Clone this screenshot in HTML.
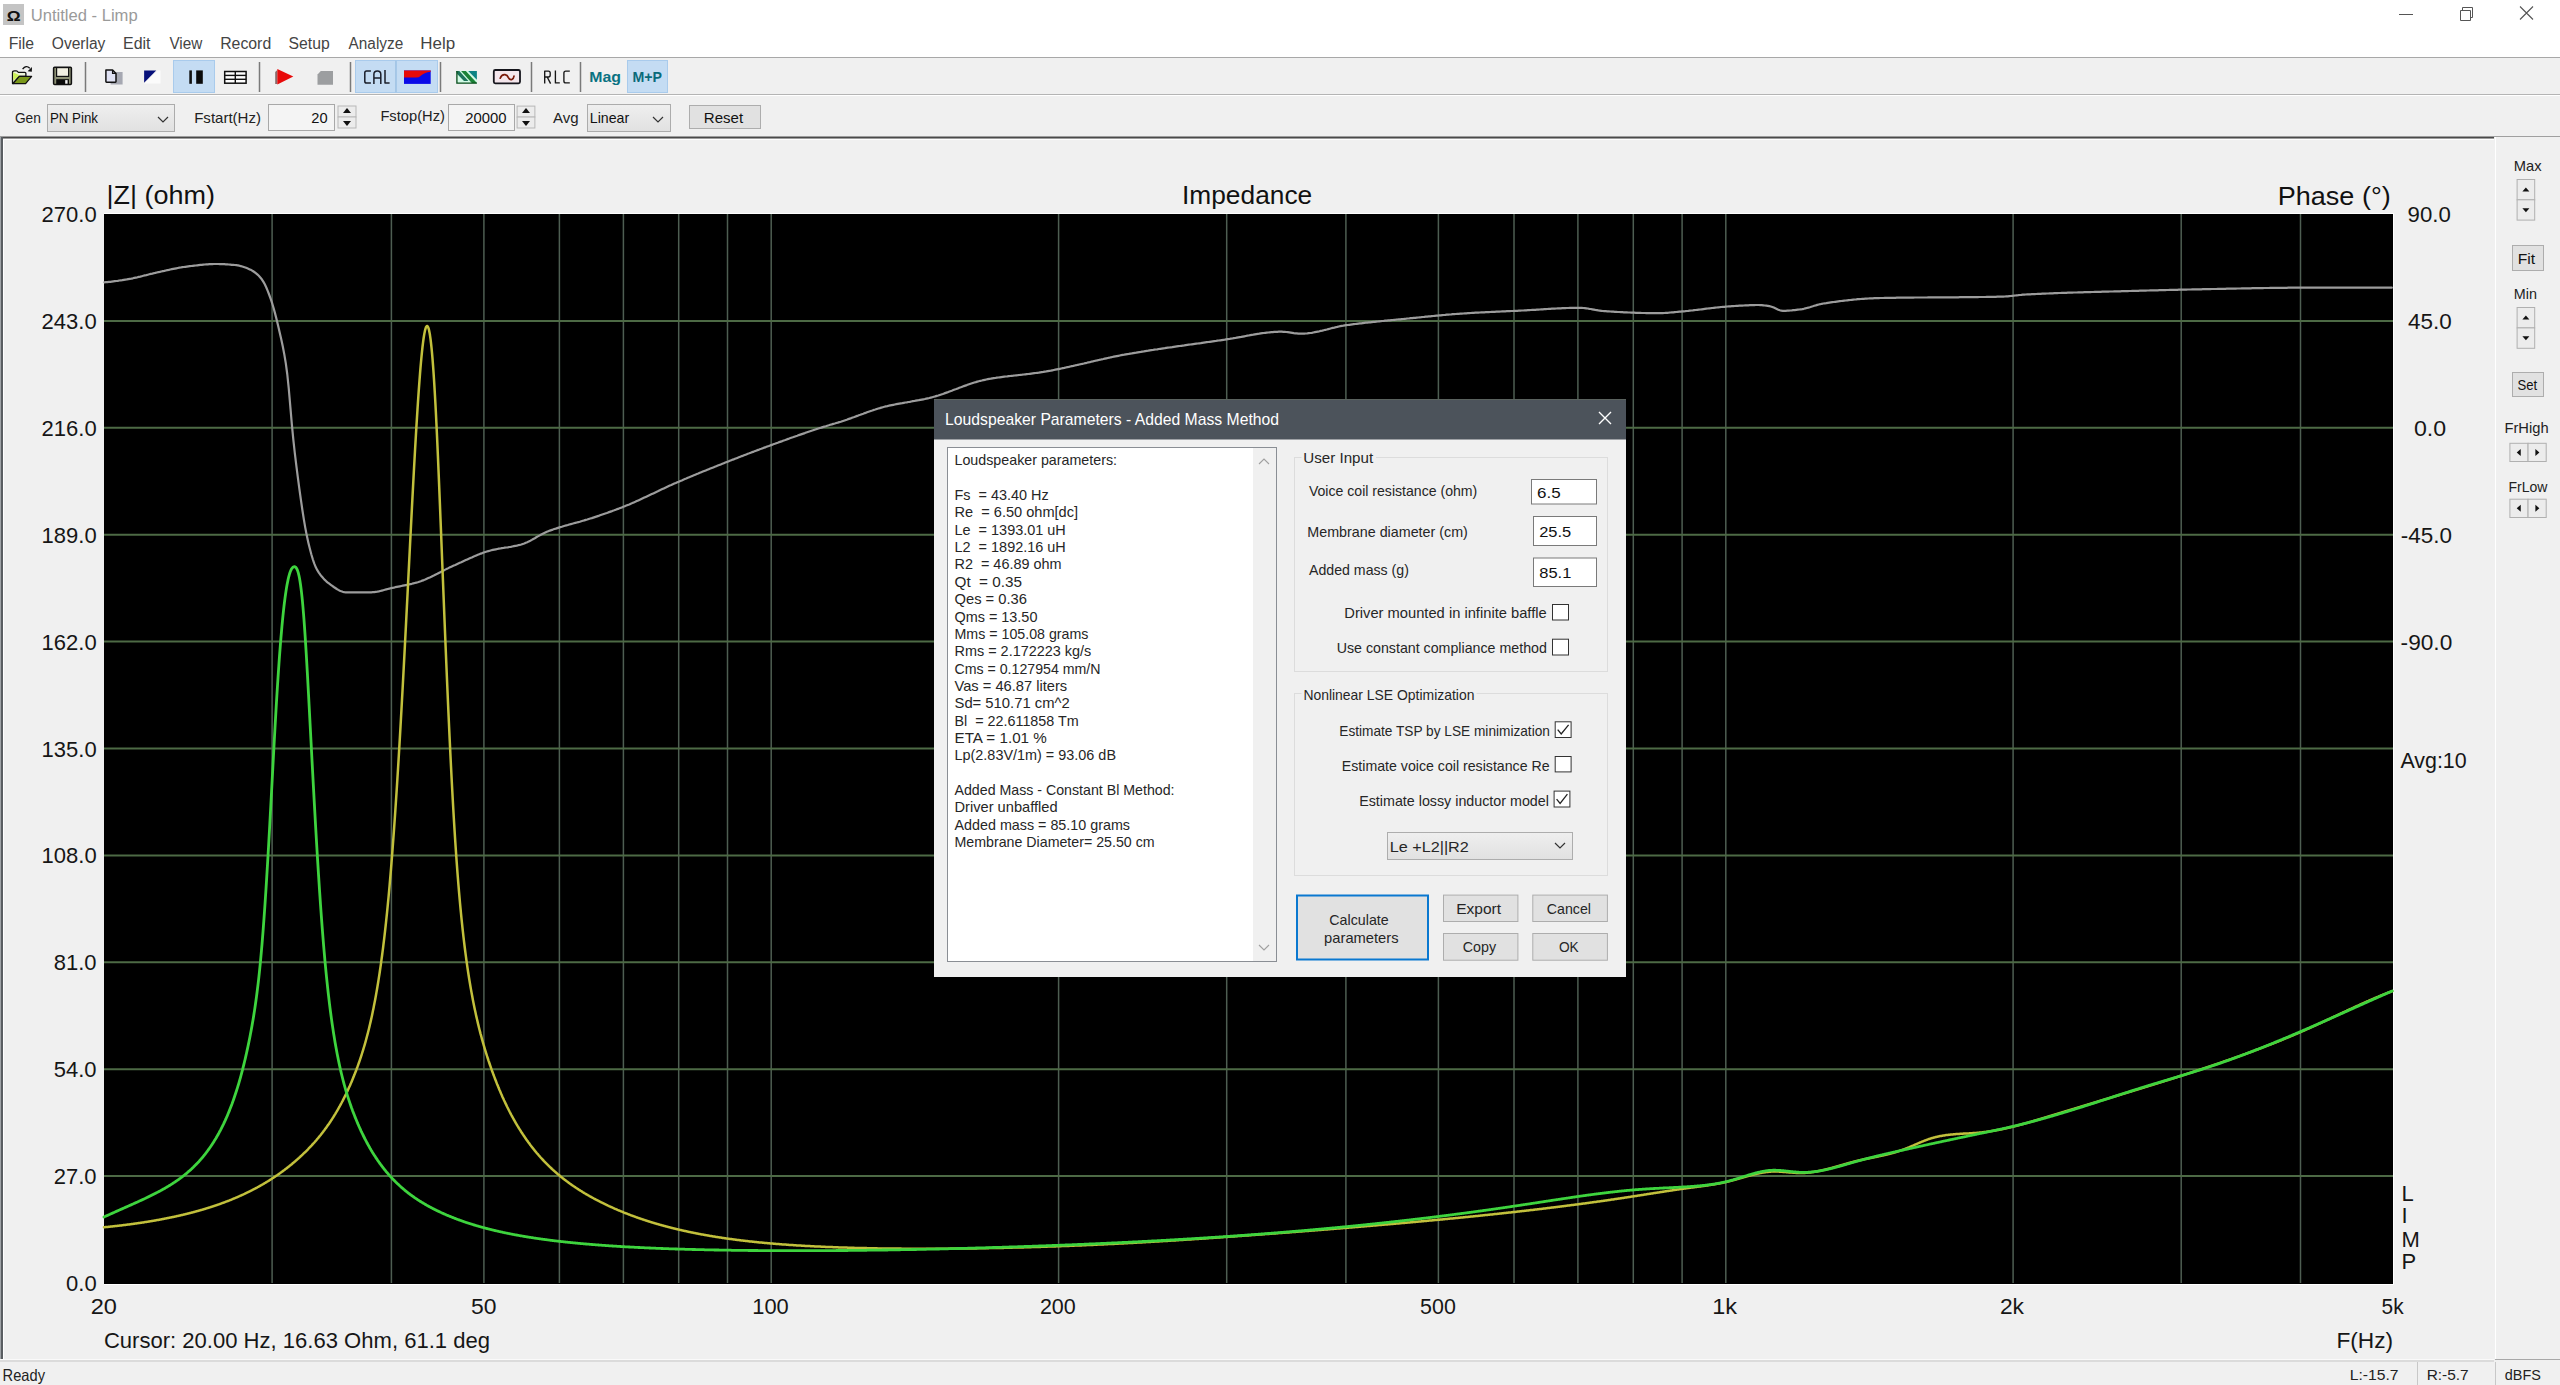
<!DOCTYPE html>
<html><head><meta charset="utf-8"><title>Untitled - Limp</title>
<style>
html,body{margin:0;padding:0;width:2560px;height:1385px;overflow:hidden;background:#f0f0f0;}
svg{display:block;font-family:"Liberation Sans", sans-serif;}
</style></head>
<body>
<svg width="2560" height="1385" viewBox="0 0 2560 1385">
<rect x="0" y="0" width="2560" height="1385" fill="#f0f0f0" />
<rect x="0" y="0" width="2560" height="57" fill="#ffffff" />
<line x1="0" y1="57.5" x2="2560" y2="57.5" stroke="#a8a8a8" stroke-width="1" />
<rect x="3" y="4" width="21" height="21" fill="#c4c4c4" />
<text x="6.8" y="20.5" font-size="15" fill="#111" textLength="13.9" lengthAdjust="spacingAndGlyphs" font-weight="bold" >Ω</text>
<text x="30.7" y="21.0" font-size="16" fill="#9a9a9a" textLength="107.0" lengthAdjust="spacingAndGlyphs" >Untitled - Limp</text>
<line x1="2399" y1="14.5" x2="2413" y2="14.5" stroke="#555" stroke-width="1" />
<path d="M2460.5,10.5 h10 v10 h-10 z M2462.5,10.5 v-3 h10 v10 h-2" fill="none" stroke="#555" stroke-width="1"/>
<path d="M2520,6.5 L2533,19.5 M2533,6.5 L2520,19.5" stroke="#555" stroke-width="1.1"/>
<text x="8.7" y="49.0" font-size="16" fill="#444444" textLength="25.4" lengthAdjust="spacingAndGlyphs" >File</text>
<text x="51.8" y="49.0" font-size="16" fill="#444444" textLength="53.6" lengthAdjust="spacingAndGlyphs" >Overlay</text>
<text x="123.1" y="49.0" font-size="16" fill="#444444" textLength="27.4" lengthAdjust="spacingAndGlyphs" >Edit</text>
<text x="169.4" y="49.0" font-size="16" fill="#444444" textLength="32.8" lengthAdjust="spacingAndGlyphs" >View</text>
<text x="220.2" y="49.0" font-size="16" fill="#444444" textLength="51.0" lengthAdjust="spacingAndGlyphs" >Record</text>
<text x="288.6" y="49.0" font-size="16" fill="#444444" textLength="41.1" lengthAdjust="spacingAndGlyphs" >Setup</text>
<text x="348.6" y="49.0" font-size="16" fill="#444444" textLength="54.6" lengthAdjust="spacingAndGlyphs" >Analyze</text>
<text x="420.3" y="49.0" font-size="16" fill="#444444" textLength="34.9" lengthAdjust="spacingAndGlyphs" >Help</text>
<line x1="0" y1="94.5" x2="2560" y2="94.5" stroke="#b4b4b4" stroke-width="1" />
<line x1="0" y1="95.5" x2="2560" y2="95.5" stroke="#ffffff" stroke-width="1" />
<rect x="173.5" y="60.5" width="41.0" height="32.0" fill="#c4dcf3" stroke="#a9cbec" stroke-width="1" />
<rect x="355.5" y="60.5" width="40.0" height="32.0" fill="#c4dcf3" stroke="#a9cbec" stroke-width="1" />
<rect x="396.5" y="60.5" width="41.0" height="32.0" fill="#c4dcf3" stroke="#a9cbec" stroke-width="1" />
<rect x="627.5" y="60.5" width="40.0" height="32.0" fill="#c4dcf3" stroke="#a9cbec" stroke-width="1" />
<line x1="85.5" y1="62" x2="85.5" y2="92" stroke="#7a7a7a" stroke-width="1.5" />
<line x1="259.5" y1="62" x2="259.5" y2="92" stroke="#7a7a7a" stroke-width="1.5" />
<line x1="350.5" y1="62" x2="350.5" y2="92" stroke="#7a7a7a" stroke-width="1.5" />
<line x1="440.5" y1="62" x2="440.5" y2="92" stroke="#7a7a7a" stroke-width="1.5" />
<line x1="531.5" y1="62" x2="531.5" y2="92" stroke="#7a7a7a" stroke-width="1.5" />
<line x1="580.5" y1="62" x2="580.5" y2="92" stroke="#7a7a7a" stroke-width="1.5" />
<path d="M12.5,83.5 V72.5 Q12.5,70.8 14.5,70.8 H16.3 Q17.4,70.8 18.2,72.3 H24.8 Q25.9,72.3 25.9,73.6 V76.3 H19.3 L13,83.5 Z" fill="#eef4dc" stroke="#111" stroke-width="1.3" stroke-linejoin="round"/>
<path d="M13.2,72.2 L20,75.6 L13.2,80.6 Z" fill="#ccf05a"/>
<path d="M13,83.6 L19.3,76.3 H31.6 L25.6,83.6 Z" fill="#7a981a" stroke="#111" stroke-width="1.3" stroke-linejoin="round"/>
<path d="M22.6,69.2 Q26,64.6 29.8,68.2" fill="none" stroke="#111" stroke-width="1.4"/><path d="M32,67 L31.8,71.8 L27.6,71.2 Z" fill="#111"/>
<rect x="53.6" y="67.2" width="17.8" height="17.4" rx="1" fill="#8c9074" stroke="#111" stroke-width="1.5"/>
<rect x="56.6" y="67.6" width="11.999999999999993" height="8.800000000000011" fill="#f2f0e2" stroke="#111" stroke-width="1.2" />
<rect x="56.2" y="79.2" width="12.799999999999997" height="5.0" fill="#0a0a0a" />
<rect x="65.2" y="80.1" width="2.3999999999999915" height="3.6000000000000085" fill="#f0f0f0" />
<path d="M116,72 H122.6 V84.6 H110.6 V82.2 H116 Z" fill="#a6a8b2"/>
<path d="M105.9,69.9 H112.6 L116,73.4 V81.6 Q116,82.2 115.4,82.2 H106.5 Q105.9,82.2 105.9,81.6 Z" fill="#e0e2f4" stroke="#111" stroke-width="1.5" stroke-linejoin="round"/>
<path d="M112.6,69.9 V73.4 H116" fill="none" stroke="#111" stroke-width="1.3"/>
<path d="M144.1,83.5 L157.6,70.4 L160.5,70.4 L160.5,83.5 Z" fill="#fbfbfb"/><path d="M144.1,70.4 L156.2,70.4 L144.1,82.8 Z" fill="#07107a"/>
<rect x="189.3" y="70.4" width="2.5999999999999943" height="13.399999999999991" fill="#111" />
<rect x="196.2" y="70.4" width="6.600000000000023" height="13.399999999999991" fill="#0a0a0a" />
<rect x="224.7" y="71.5" width="21.400000000000006" height="11.700000000000003" fill="#fff" stroke="#111" stroke-width="1.5" />
<line x1="224.7" y1="75.4" x2="246.1" y2="75.4" stroke="#111" stroke-width="1.4" />
<line x1="224.7" y1="79.3" x2="246.1" y2="79.3" stroke="#111" stroke-width="1.4" />
<line x1="235.3" y1="71.5" x2="235.3" y2="83.2" stroke="#111" stroke-width="1.4" />
<path d="M275.2,72 L277.3,70 L277.3,84 L275.2,84 Z" fill="#8a6a6a"/><path d="M277.3,69 L293.3,76.6 L277.3,84.5 Z" fill="#e80a0a"/>
<path d="M320.8,71 L333,71 L333,84.8 L317.5,84.8 L317.5,74.6 Z" fill="#9c9ea0"/>
<g fill="none" stroke="#1a1e2a" stroke-width="1.5" stroke-linejoin="round">
<path d="M370.9,70.9 H366.6 Q364.8,70.9 364.8,72.8 V81.2 Q364.8,83.1 366.6,83.1 H370.9"/>
<path d="M373.9,83.9 V74.2 Q373.9,70.9 377.35,70.9 Q380.8,70.9 380.8,74.2 V83.9 M373.9,77.9 H380.8"/>
<path d="M385,70.1 V83.1 H389.6"/>
</g>
<line x1="395.8" y1="60.5" x2="395.8" y2="92.5" stroke="#a4c6e6" stroke-width="1.5" />
<rect x="404" y="70.5" width="26.69999999999999" height="13.400000000000006" fill="#0a0ae8" />
<path d="M404,70.5 L430.7,70.5 L430.7,71.8 Q424,72.6 420.5,76 Q419,77.6 416.4,77.6 L404,77.6 Z" fill="#e80a0a"/>
<path d="M456.2,70.8 L477,70.8 L477,83.7 L456.2,83.7 Z" fill="#d2fae6"/>
<path d="M468.2,70.9 L476.9,70.9 L476.9,79.8 Z" fill="#0c8484"/>
<path d="M461.1,70.9 L465.8,70.9 L476.9,83 L471.8,83 Z" fill="#1a8236"/>
<path d="M456.3,70.9 L459.3,70.9 L468.4,80.9 L464,80.9 L457.2,74 Z" fill="#1c745a"/>
<path d="M456.9,70.9 V83.1 H476.9" fill="none" stroke="#0a4a1a" stroke-width="1.3"/>
<rect x="493.8" y="70" width="26.2" height="13.3" rx="1.5" fill="#f4e6ec" stroke="#15151c" stroke-width="1.8"/>
<path d="M500.2,78.2 Q501.8,74.2 505,74.6 Q507.4,75 508.4,77.6 Q509.6,80.2 512,79.4 Q513.6,78.8 514,76.2" fill="none" stroke="#7a1a0a" stroke-width="1.7" stroke-linecap="round"/>
<g fill="none" stroke="#161616" stroke-width="1.35" stroke-linejoin="round">
<path d="M544.7,83.6 V71.1 H548.4 Q550.2,71.1 550.2,73 V75.1 Q550.2,77 548.4,77 H544.7 M547.2,77 L550.6,83.6"/>
<path d="M555.4,70.4 V82.9 H559.8"/>
<path d="M569.8,71.1 H565.8 Q563.9,71.1 563.9,73 V81 Q563.9,82.9 565.8,82.9 H569.8"/>
</g>
<text x="589.3" y="82.0" font-size="14" fill="#0a7282" textLength="31.7" lengthAdjust="spacingAndGlyphs" font-weight="bold" >Mag</text>
<text x="632.4" y="82.0" font-size="14" fill="#0a6a7a" textLength="29.6" lengthAdjust="spacingAndGlyphs" font-weight="bold" >M+P</text>
<text x="14.9" y="122.5" font-size="15" fill="#222" textLength="26.0" lengthAdjust="spacingAndGlyphs" >Gen</text>
<defs><linearGradient id="cg" x1="0" y1="0" x2="0" y2="1"><stop offset="0" stop-color="#efefef"/><stop offset="1" stop-color="#e1e1e1"/></linearGradient></defs>
<rect x="47.5" y="104.5" width="127.0" height="27.0" fill="url(#cg)" stroke="#acacac" stroke-width="1" />
<text x="49.9" y="123.0" font-size="15" fill="#111" textLength="48.1" lengthAdjust="spacingAndGlyphs" >PN Pink</text>
<path d="M158,117 l5,5 l5,-5" fill="none" stroke="#333" stroke-width="1.2"/>
<text x="194.2" y="122.5" font-size="15" fill="#222" textLength="66.8" lengthAdjust="spacingAndGlyphs" >Fstart(Hz)</text>
<rect x="268.5" y="104.5" width="66.0" height="26.0" fill="#f4f4f4" stroke="#a8a8a8" stroke-width="1" />
<text x="311.3" y="123.0" font-size="15" fill="#111" textLength="16.3" lengthAdjust="spacingAndGlyphs" >20</text>
<rect x="338.0" y="106.0" width="18.0" height="11.0" fill="#ececec" stroke="#b8b8b8" stroke-width="1" />
<rect x="338.0" y="117.0" width="18.0" height="11.0" fill="#ececec" stroke="#b8b8b8" stroke-width="1" />
<path d="M343.0,113.0 L351.0,113.0 L347.0,108.0 Z" fill="#111"/>
<path d="M343.0,121.0 L351.0,121.0 L347.0,126.0 Z" fill="#111"/>
<text x="380.4" y="121.0" font-size="15" fill="#222" textLength="64.5" lengthAdjust="spacingAndGlyphs" >Fstop(Hz)</text>
<rect x="448.5" y="104.5" width="66.0" height="26.0" fill="#f4f4f4" stroke="#a8a8a8" stroke-width="1" />
<text x="465.3" y="123.0" font-size="15" fill="#111" textLength="41.3" lengthAdjust="spacingAndGlyphs" >20000</text>
<rect x="517.1" y="106.1" width="17.799999999999955" height="10.950000000000003" fill="#ececec" stroke="#b8b8b8" stroke-width="1" />
<rect x="517.1" y="117.05" width="17.799999999999955" height="10.950000000000003" fill="#ececec" stroke="#b8b8b8" stroke-width="1" />
<path d="M522.0,113.05 L530.0,113.05 L526.0,108.05 Z" fill="#111"/>
<path d="M522.0,121.05 L530.0,121.05 L526.0,126.05 Z" fill="#111"/>
<text x="553.0" y="122.5" font-size="15" fill="#222" textLength="25.6" lengthAdjust="spacingAndGlyphs" >Avg</text>
<rect x="587.5" y="104.5" width="83.0" height="27.0" fill="url(#cg)" stroke="#acacac" stroke-width="1" />
<text x="589.8" y="123.0" font-size="15" fill="#111" textLength="39.4" lengthAdjust="spacingAndGlyphs" >Linear</text>
<path d="M653,117 l5,5 l5,-5" fill="none" stroke="#333" stroke-width="1.2"/>
<rect x="689.5" y="105.5" width="71.0" height="23.0" fill="#e1e1e1" stroke="#adadad" stroke-width="1" />
<text x="703.8" y="123.0" font-size="15" fill="#111" textLength="39.3" lengthAdjust="spacingAndGlyphs" >Reset</text>
<line x1="0" y1="137.5" x2="2494" y2="137.5" stroke="#4a4a4a" stroke-width="2" />
<line x1="2494" y1="136.5" x2="2560" y2="136.5" stroke="#a0a0a0" stroke-width="1" />
<line x1="4" y1="139.5" x2="2494" y2="139.5" stroke="#ffffff" stroke-width="1" />
<line x1="0.5" y1="137" x2="0.5" y2="1359" stroke="#a0a4a8" stroke-width="1" />
<line x1="2" y1="137" x2="2" y2="1359" stroke="#5a5e62" stroke-width="2" />
<line x1="3.5" y1="139" x2="3.5" y2="1359" stroke="#ffffff" stroke-width="1" />
<line x1="2495.5" y1="137" x2="2495.5" y2="1360" stroke="#ffffff" stroke-width="1" />
<rect x="104" y="213" width="2290" height="1072" fill="#ffffff" />
<rect x="104" y="214" width="2289" height="1070" fill="#000000" />
<line x1="272.1" y1="214" x2="272.1" y2="1283" stroke="#4e5e52" stroke-width="1.5" />
<line x1="391.4" y1="214" x2="391.4" y2="1283" stroke="#4e5e52" stroke-width="1.5" />
<line x1="483.9" y1="214" x2="483.9" y2="1283" stroke="#4e5e52" stroke-width="1.5" />
<line x1="559.4" y1="214" x2="559.4" y2="1283" stroke="#4e5e52" stroke-width="1.5" />
<line x1="623.4" y1="214" x2="623.4" y2="1283" stroke="#4e5e52" stroke-width="1.5" />
<line x1="678.7" y1="214" x2="678.7" y2="1283" stroke="#4e5e52" stroke-width="1.5" />
<line x1="727.5" y1="214" x2="727.5" y2="1283" stroke="#4e5e52" stroke-width="1.5" />
<line x1="771.2" y1="214" x2="771.2" y2="1283" stroke="#4e5e52" stroke-width="1.5" />
<line x1="1058.6" y1="214" x2="1058.6" y2="1283" stroke="#4e5e52" stroke-width="1.5" />
<line x1="1226.7" y1="214" x2="1226.7" y2="1283" stroke="#4e5e52" stroke-width="1.5" />
<line x1="1345.9" y1="214" x2="1345.9" y2="1283" stroke="#4e5e52" stroke-width="1.5" />
<line x1="1438.4" y1="214" x2="1438.4" y2="1283" stroke="#4e5e52" stroke-width="1.5" />
<line x1="1514.0" y1="214" x2="1514.0" y2="1283" stroke="#4e5e52" stroke-width="1.5" />
<line x1="1577.9" y1="214" x2="1577.9" y2="1283" stroke="#4e5e52" stroke-width="1.5" />
<line x1="1633.3" y1="214" x2="1633.3" y2="1283" stroke="#4e5e52" stroke-width="1.5" />
<line x1="1682.1" y1="214" x2="1682.1" y2="1283" stroke="#4e5e52" stroke-width="1.5" />
<line x1="1725.8" y1="214" x2="1725.8" y2="1283" stroke="#4e5e52" stroke-width="1.5" />
<line x1="2013.1" y1="214" x2="2013.1" y2="1283" stroke="#4e5e52" stroke-width="1.5" />
<line x1="2181.2" y1="214" x2="2181.2" y2="1283" stroke="#4e5e52" stroke-width="1.5" />
<line x1="2300.5" y1="214" x2="2300.5" y2="1283" stroke="#4e5e52" stroke-width="1.5" />
<line x1="104" y1="320.9" x2="2393" y2="320.9" stroke="#4d6a45" stroke-width="2" />
<line x1="104" y1="427.8" x2="2393" y2="427.8" stroke="#4d6a45" stroke-width="2" />
<line x1="104" y1="534.7" x2="2393" y2="534.7" stroke="#4d6a45" stroke-width="2" />
<line x1="104" y1="641.6" x2="2393" y2="641.6" stroke="#4d6a45" stroke-width="2" />
<line x1="104" y1="748.5" x2="2393" y2="748.5" stroke="#4d6a45" stroke-width="2" />
<line x1="104" y1="855.4" x2="2393" y2="855.4" stroke="#4d6a45" stroke-width="2" />
<line x1="104" y1="962.3" x2="2393" y2="962.3" stroke="#4d6a45" stroke-width="2" />
<line x1="104" y1="1069.2" x2="2393" y2="1069.2" stroke="#4d6a45" stroke-width="2" />
<line x1="104" y1="1176.1" x2="2393" y2="1176.1" stroke="#4d6a45" stroke-width="2" />
<g fill="none" stroke-linejoin="round" stroke-linecap="round">
<path d="M104.3,282.3 L105.8,282.2 L107.3,282.1 L108.8,281.9 L110.3,281.8 L111.8,281.6 L113.3,281.4 L114.8,281.2 L116.3,281.0 L117.8,280.8 L119.3,280.5 L120.8,280.3 L122.3,280.1 L123.8,279.8 L125.3,279.6 L126.8,279.4 L128.3,279.1 L129.8,278.8 L131.3,278.6 L132.8,278.3 L134.3,277.9 L135.8,277.6 L137.3,277.3 L138.8,276.9 L140.3,276.6 L141.8,276.2 L143.3,275.8 L144.8,275.4 L146.3,275.1 L147.8,274.7 L149.3,274.3 L150.8,273.9 L152.3,273.6 L153.8,273.2 L155.3,272.9 L156.8,272.5 L158.3,272.2 L159.8,271.9 L161.3,271.5 L162.8,271.2 L164.3,270.9 L165.8,270.5 L167.3,270.2 L168.8,269.9 L170.3,269.5 L171.8,269.2 L173.3,268.9 L174.8,268.6 L176.3,268.3 L177.8,268.0 L179.3,267.7 L180.8,267.5 L182.3,267.2 L183.8,267.0 L185.3,266.8 L186.8,266.6 L188.3,266.4 L189.8,266.2 L191.3,266.0 L192.8,265.8 L194.3,265.6 L195.8,265.5 L197.3,265.3 L198.8,265.1 L200.3,264.9 L201.8,264.8 L203.3,264.6 L204.8,264.5 L206.3,264.4 L207.8,264.3 L209.3,264.2 L210.8,264.1 L212.3,264.1 L213.8,264.0 L215.3,264.0 L216.8,264.0 L218.3,264.0 L219.8,264.1 L221.3,264.1 L222.8,264.2 L224.3,264.2 L225.8,264.3 L227.3,264.4 L228.8,264.5 L230.3,264.6 L231.8,264.8 L233.3,264.9 L234.8,265.0 L236.3,265.2 L237.8,265.4 L239.3,265.7 L240.8,266.1 L242.3,266.5 L243.8,267.0 L245.3,267.5 L246.8,268.1 L248.3,268.7 L249.8,269.4 L251.3,270.1 L252.8,271.0 L254.3,272.0 L255.8,273.1 L257.3,274.4 L258.8,275.8 L260.3,277.5 L261.8,279.3 L263.3,281.6 L264.8,284.3 L266.3,287.5 L267.8,291.1 L269.3,295.0 L270.8,299.1 L272.3,303.7 L273.8,308.8 L275.3,314.4 L276.8,320.3 L278.3,326.6 L279.8,333.0 L281.3,339.6 L282.8,346.6 L284.3,354.4 L285.8,363.4 L287.3,374.5 L288.8,389.0 L290.3,406.4 L291.8,423.9 L293.3,439.4 L294.8,453.0 L296.3,465.4 L297.8,477.1 L299.3,488.3 L300.8,499.1 L302.3,509.5 L303.8,519.2 L305.3,527.9 L306.8,535.6 L308.3,542.4 L309.8,548.6 L311.3,554.3 L312.8,559.3 L314.3,563.7 L315.8,567.3 L317.3,570.2 L318.8,572.6 L320.3,574.7 L321.8,576.6 L323.3,578.3 L324.8,579.9 L326.3,581.3 L327.8,582.6 L329.3,583.7 L330.8,584.8 L332.3,585.9 L333.8,587.0 L335.3,588.0 L336.8,589.0 L338.3,589.9 L339.8,590.7 L341.3,591.3 L342.8,591.8 L344.3,592.1 L345.8,592.3 L347.3,592.3 L348.8,592.3 L350.3,592.3 L351.8,592.3 L353.3,592.3 L354.8,592.3 L356.3,592.3 L357.8,592.3 L359.3,592.3 L360.8,592.3 L362.3,592.3 L363.8,592.3 L365.3,592.3 L366.8,592.3 L368.3,592.3 L369.8,592.3 L371.3,592.3 L372.8,592.2 L374.3,592.1 L375.8,591.9 L377.3,591.7 L378.8,591.4 L380.3,591.0 L381.8,590.6 L383.3,590.2 L384.8,589.8 L386.3,589.4 L387.8,589.0 L389.3,588.6 L390.8,588.2 L392.3,587.9 L393.8,587.6 L395.3,587.2 L396.8,586.9 L398.3,586.6 L399.8,586.3 L401.3,586.0 L402.8,585.7 L404.3,585.4 L405.8,585.1 L407.3,584.8 L408.8,584.5 L410.3,584.1 L411.8,583.8 L413.3,583.4 L414.8,583.0 L416.3,582.6 L417.8,582.2 L419.3,581.7 L420.8,581.2 L422.3,580.6 L423.8,580.1 L425.3,579.5 L426.8,578.8 L428.3,578.1 L429.8,577.5 L431.3,576.8 L432.8,576.0 L434.3,575.3 L435.8,574.5 L437.3,573.8 L438.8,573.0 L440.3,572.2 L441.8,571.4 L443.3,570.7 L444.8,569.9 L446.3,569.1 L447.8,568.4 L449.3,567.6 L450.8,566.9 L452.3,566.2 L453.8,565.5 L455.3,564.9 L456.8,564.2 L458.3,563.5 L459.8,562.8 L461.3,562.2 L462.8,561.5 L464.3,560.8 L465.8,560.1 L467.3,559.4 L468.8,558.7 L470.3,558.0 L471.8,557.4 L473.3,556.7 L474.8,556.1 L476.3,555.4 L477.8,554.8 L479.3,554.2 L480.8,553.6 L482.3,553.1 L483.8,552.5 L485.3,552.0 L486.8,551.5 L488.3,551.1 L489.8,550.7 L491.3,550.3 L492.8,549.9 L494.3,549.6 L495.8,549.3 L497.3,549.0 L498.8,548.7 L500.3,548.5 L501.8,548.2 L503.3,548.0 L504.8,547.7 L506.3,547.5 L507.8,547.3 L509.3,547.0 L510.8,546.8 L512.3,546.5 L513.8,546.2 L515.3,545.9 L516.8,545.6 L518.3,545.2 L519.8,544.9 L521.3,544.5 L522.8,544.0 L524.3,543.5 L525.8,542.8 L527.3,542.2 L528.8,541.4 L530.3,540.7 L531.8,539.9 L533.3,539.0 L534.8,538.2 L536.3,537.3 L537.8,536.4 L539.3,535.6 L540.8,534.8 L542.3,534.0 L543.8,533.2 L545.3,532.5 L546.8,531.8 L548.3,531.2 L549.8,530.6 L551.3,530.1 L552.8,529.6 L554.3,529.0 L555.8,528.6 L557.3,528.1 L558.8,527.6 L560.3,527.1 L561.8,526.7 L563.3,526.2 L564.8,525.8 L566.3,525.4 L567.8,525.0 L569.3,524.5 L570.8,524.1 L572.3,523.7 L573.8,523.3 L575.3,522.9 L576.8,522.5 L578.3,522.1 L579.8,521.7 L581.3,521.2 L582.8,520.8 L584.3,520.4 L585.8,519.9 L587.3,519.5 L588.8,519.0 L590.3,518.5 L591.8,518.1 L593.3,517.6 L594.8,517.1 L596.3,516.6 L597.8,516.1 L599.3,515.6 L600.8,515.0 L602.3,514.5 L603.8,514.0 L605.3,513.5 L606.8,513.0 L608.3,512.4 L609.8,511.9 L611.3,511.4 L612.8,510.8 L614.3,510.3 L615.8,509.7 L617.3,509.1 L618.8,508.6 L620.3,508.0 L621.8,507.4 L623.3,506.8 L624.8,506.2 L626.3,505.6 L627.8,505.0 L629.3,504.4 L630.8,503.7 L632.3,503.1 L633.8,502.4 L635.3,501.8 L636.8,501.1 L638.3,500.4 L639.8,499.7 L641.3,499.0 L642.8,498.3 L644.3,497.6 L645.8,496.9 L647.3,496.2 L648.8,495.5 L650.3,494.8 L651.8,494.1 L653.3,493.4 L654.8,492.7 L656.3,492.0 L657.8,491.3 L659.3,490.5 L660.8,489.8 L662.3,489.1 L663.8,488.4 L665.3,487.7 L666.8,487.0 L668.3,486.3 L669.8,485.6 L671.3,485.0 L672.8,484.3 L674.3,483.6 L675.8,483.0 L677.3,482.3 L678.8,481.7 L680.3,481.0 L681.8,480.4 L683.3,479.7 L684.8,479.1 L686.3,478.5 L687.8,477.8 L689.3,477.2 L690.8,476.6 L692.3,475.9 L693.8,475.3 L695.3,474.7 L696.8,474.1 L698.3,473.5 L699.8,472.8 L701.3,472.2 L702.8,471.6 L704.3,471.0 L705.8,470.4 L707.3,469.8 L708.8,469.2 L710.3,468.6 L711.8,468.0 L713.3,467.4 L714.8,466.8 L716.3,466.2 L717.8,465.6 L719.3,465.0 L720.8,464.4 L722.3,463.8 L723.8,463.2 L725.3,462.6 L726.8,462.0 L728.3,461.4 L729.8,460.8 L731.3,460.2 L732.8,459.6 L734.3,459.1 L735.8,458.5 L737.3,457.9 L738.8,457.3 L740.3,456.7 L741.8,456.1 L743.3,455.6 L744.8,455.0 L746.3,454.4 L747.8,453.8 L749.3,453.3 L750.8,452.7 L752.3,452.1 L753.8,451.6 L755.3,451.0 L756.8,450.4 L758.3,449.9 L759.8,449.3 L761.3,448.8 L762.8,448.2 L764.3,447.6 L765.8,447.1 L767.3,446.5 L768.8,446.0 L770.3,445.4 L771.8,444.9 L773.3,444.3 L774.8,443.8 L776.3,443.2 L777.8,442.7 L779.3,442.1 L780.8,441.6 L782.3,441.1 L783.8,440.5 L785.3,440.0 L786.8,439.4 L788.3,438.9 L789.8,438.3 L791.3,437.8 L792.8,437.3 L794.3,436.7 L795.8,436.2 L797.3,435.7 L798.8,435.1 L800.3,434.6 L801.8,434.1 L803.3,433.6 L804.8,433.1 L806.3,432.5 L807.8,432.0 L809.3,431.5 L810.8,431.0 L812.3,430.5 L813.8,430.0 L815.3,429.5 L816.8,429.0 L818.3,428.5 L819.8,428.0 L821.3,427.6 L822.8,427.1 L824.3,426.6 L825.8,426.2 L827.3,425.7 L828.8,425.3 L830.3,424.8 L831.8,424.4 L833.3,423.9 L834.8,423.5 L836.3,423.0 L837.8,422.6 L839.3,422.1 L840.8,421.7 L842.3,421.2 L843.8,420.7 L845.3,420.2 L846.8,419.7 L848.3,419.1 L849.8,418.6 L851.3,418.1 L852.8,417.5 L854.3,417.0 L855.8,416.4 L857.3,415.9 L858.8,415.3 L860.3,414.8 L861.8,414.2 L863.3,413.7 L864.8,413.1 L866.3,412.6 L867.8,412.0 L869.3,411.5 L870.8,411.0 L872.3,410.5 L873.8,409.9 L875.3,409.5 L876.8,409.0 L878.3,408.5 L879.8,408.1 L881.3,407.6 L882.8,407.2 L884.3,406.8 L885.8,406.4 L887.3,406.1 L888.8,405.7 L890.3,405.4 L891.8,405.1 L893.3,404.8 L894.8,404.5 L896.3,404.2 L897.8,403.9 L899.3,403.6 L900.8,403.3 L902.3,403.1 L903.8,402.8 L905.3,402.5 L906.8,402.3 L908.3,402.0 L909.8,401.8 L911.3,401.5 L912.8,401.2 L914.3,401.0 L915.8,400.7 L917.3,400.4 L918.8,400.2 L920.3,399.9 L921.8,399.6 L923.3,399.3 L924.8,399.0 L926.3,398.6 L927.8,398.3 L929.3,398.0 L930.8,397.6 L932.3,397.2 L933.8,396.8 L935.3,396.4 L936.8,395.9 L938.3,395.5 L939.8,395.0 L941.3,394.5 L942.8,394.0 L944.3,393.4 L945.8,392.9 L947.3,392.4 L948.8,391.8 L950.3,391.2 L951.8,390.7 L953.3,390.1 L954.8,389.5 L956.3,389.0 L957.8,388.4 L959.3,387.8 L960.8,387.3 L962.3,386.7 L963.8,386.1 L965.3,385.6 L966.8,385.1 L968.3,384.5 L969.8,384.0 L971.3,383.5 L972.8,383.0 L974.3,382.5 L975.8,382.1 L977.3,381.6 L978.8,381.2 L980.3,380.8 L981.8,380.5 L983.3,380.1 L984.8,379.8 L986.3,379.5 L987.8,379.2 L989.3,378.9 L990.8,378.7 L992.3,378.4 L993.8,378.2 L995.3,378.0 L996.8,377.7 L998.3,377.5 L999.8,377.3 L1001.3,377.1 L1002.8,376.9 L1004.3,376.7 L1005.8,376.5 L1007.3,376.4 L1008.8,376.2 L1010.3,376.0 L1011.8,375.8 L1013.3,375.7 L1014.8,375.5 L1016.3,375.3 L1017.8,375.2 L1019.3,375.0 L1020.8,374.8 L1022.3,374.7 L1023.8,374.5 L1025.3,374.3 L1026.8,374.1 L1028.3,374.0 L1029.8,373.8 L1031.3,373.6 L1032.8,373.4 L1034.3,373.2 L1035.8,373.0 L1037.3,372.8 L1038.8,372.6 L1040.3,372.3 L1041.8,372.1 L1043.3,371.9 L1044.8,371.6 L1046.3,371.4 L1047.8,371.1 L1049.3,370.8 L1050.8,370.6 L1052.3,370.3 L1053.8,370.0 L1055.3,369.7 L1056.8,369.4 L1058.3,369.1 L1059.8,368.8 L1061.3,368.5 L1062.8,368.2 L1064.3,367.9 L1065.8,367.5 L1067.3,367.2 L1068.8,366.9 L1070.3,366.5 L1071.8,366.2 L1073.3,365.9 L1074.8,365.5 L1076.3,365.2 L1077.8,364.8 L1079.3,364.5 L1080.8,364.2 L1082.3,363.8 L1083.8,363.5 L1085.3,363.1 L1086.8,362.8 L1088.3,362.4 L1089.8,362.1 L1091.3,361.7 L1092.8,361.4 L1094.3,361.0 L1095.8,360.7 L1097.3,360.3 L1098.8,360.0 L1100.3,359.7 L1101.8,359.3 L1103.3,359.0 L1104.8,358.6 L1106.3,358.3 L1107.8,358.0 L1109.3,357.7 L1110.8,357.3 L1112.3,357.0 L1113.8,356.7 L1115.3,356.4 L1116.8,356.1 L1118.3,355.8 L1119.8,355.5 L1121.3,355.2 L1122.8,354.9 L1124.3,354.7 L1125.8,354.4 L1127.3,354.1 L1128.8,353.9 L1130.3,353.6 L1131.8,353.4 L1133.3,353.1 L1134.8,352.8 L1136.3,352.6 L1137.8,352.3 L1139.3,352.1 L1140.8,351.9 L1142.3,351.6 L1143.8,351.4 L1145.3,351.1 L1146.8,350.9 L1148.3,350.7 L1149.8,350.4 L1151.3,350.2 L1152.8,350.0 L1154.3,349.7 L1155.8,349.5 L1157.3,349.3 L1158.8,349.0 L1160.3,348.8 L1161.8,348.6 L1163.3,348.4 L1164.8,348.2 L1166.3,347.9 L1167.8,347.7 L1169.3,347.5 L1170.8,347.3 L1172.3,347.1 L1173.8,346.8 L1175.3,346.6 L1176.8,346.4 L1178.3,346.2 L1179.8,346.0 L1181.3,345.8 L1182.8,345.6 L1184.3,345.4 L1185.8,345.1 L1187.3,344.9 L1188.8,344.7 L1190.3,344.5 L1191.8,344.3 L1193.3,344.1 L1194.8,343.9 L1196.3,343.7 L1197.8,343.5 L1199.3,343.3 L1200.8,343.1 L1202.3,342.8 L1203.8,342.6 L1205.3,342.4 L1206.8,342.2 L1208.3,342.0 L1209.8,341.8 L1211.3,341.6 L1212.8,341.4 L1214.3,341.2 L1215.8,341.0 L1217.3,340.7 L1218.8,340.5 L1220.3,340.3 L1221.8,340.1 L1223.3,339.9 L1224.8,339.7 L1226.3,339.4 L1227.8,339.2 L1229.3,339.0 L1230.8,338.7 L1232.3,338.5 L1233.8,338.2 L1235.3,338.0 L1236.8,337.7 L1238.3,337.4 L1239.8,337.1 L1241.3,336.9 L1242.8,336.6 L1244.3,336.3 L1245.8,336.0 L1247.3,335.7 L1248.8,335.5 L1250.3,335.2 L1251.8,334.9 L1253.3,334.7 L1254.8,334.4 L1256.3,334.1 L1257.8,333.9 L1259.3,333.7 L1260.8,333.4 L1262.3,333.2 L1263.8,333.0 L1265.3,332.8 L1266.8,332.6 L1268.3,332.5 L1269.8,332.3 L1271.3,332.2 L1272.8,332.1 L1274.3,331.9 L1275.8,331.9 L1277.3,331.8 L1278.8,331.7 L1280.3,331.7 L1281.8,331.7 L1283.3,331.8 L1284.8,331.9 L1286.3,332.0 L1287.8,332.2 L1289.3,332.4 L1290.8,332.6 L1292.3,332.8 L1293.8,333.1 L1295.3,333.3 L1296.8,333.4 L1298.3,333.6 L1299.8,333.6 L1301.3,333.7 L1302.8,333.7 L1304.3,333.6 L1305.8,333.5 L1307.3,333.4 L1308.8,333.2 L1310.3,333.0 L1311.8,332.8 L1313.3,332.5 L1314.8,332.2 L1316.3,331.9 L1317.8,331.6 L1319.3,331.3 L1320.8,330.9 L1322.3,330.6 L1323.8,330.2 L1325.3,329.8 L1326.8,329.5 L1328.3,329.1 L1329.8,328.7 L1331.3,328.3 L1332.8,327.9 L1334.3,327.6 L1335.8,327.2 L1337.3,326.9 L1338.8,326.5 L1340.3,326.2 L1341.8,325.9 L1343.3,325.7 L1344.8,325.4 L1346.3,325.2 L1347.8,325.0 L1349.3,324.8 L1350.8,324.6 L1352.3,324.4 L1353.8,324.2 L1355.3,324.0 L1356.8,323.8 L1358.3,323.6 L1359.8,323.4 L1361.3,323.3 L1362.8,323.1 L1364.3,322.9 L1365.8,322.7 L1367.3,322.6 L1368.8,322.4 L1370.3,322.3 L1371.8,322.1 L1373.3,321.9 L1374.8,321.8 L1376.3,321.6 L1377.8,321.5 L1379.3,321.3 L1380.8,321.2 L1382.3,321.0 L1383.8,320.9 L1385.3,320.7 L1386.8,320.6 L1388.3,320.4 L1389.8,320.3 L1391.3,320.1 L1392.8,320.0 L1394.3,319.8 L1395.8,319.7 L1397.3,319.5 L1398.8,319.4 L1400.3,319.3 L1401.8,319.1 L1403.3,319.0 L1404.8,318.8 L1406.3,318.7 L1407.8,318.5 L1409.3,318.4 L1410.8,318.2 L1412.3,318.1 L1413.8,317.9 L1415.3,317.8 L1416.8,317.6 L1418.3,317.5 L1419.8,317.3 L1421.3,317.2 L1422.8,317.0 L1424.3,316.9 L1425.8,316.7 L1427.3,316.6 L1428.8,316.4 L1430.3,316.3 L1431.8,316.1 L1433.3,316.0 L1434.8,315.8 L1436.3,315.7 L1437.8,315.6 L1439.3,315.4 L1440.8,315.3 L1442.3,315.1 L1443.8,315.0 L1445.3,314.9 L1446.8,314.7 L1448.3,314.6 L1449.8,314.5 L1451.3,314.4 L1452.8,314.2 L1454.3,314.1 L1455.8,314.0 L1457.3,313.9 L1458.8,313.8 L1460.3,313.7 L1461.8,313.6 L1463.3,313.5 L1464.8,313.4 L1466.3,313.3 L1467.8,313.2 L1469.3,313.1 L1470.8,313.0 L1472.3,312.9 L1473.8,312.8 L1475.3,312.7 L1476.8,312.7 L1478.3,312.6 L1479.8,312.5 L1481.3,312.4 L1482.8,312.4 L1484.3,312.3 L1485.8,312.2 L1487.3,312.1 L1488.8,312.1 L1490.3,312.0 L1491.8,311.9 L1493.3,311.8 L1494.8,311.8 L1496.3,311.7 L1497.8,311.6 L1499.3,311.6 L1500.8,311.5 L1502.3,311.4 L1503.8,311.4 L1505.3,311.3 L1506.8,311.2 L1508.3,311.2 L1509.8,311.1 L1511.3,311.0 L1512.8,311.0 L1514.3,310.9 L1515.8,310.8 L1517.3,310.8 L1518.8,310.7 L1520.3,310.6 L1521.8,310.5 L1523.3,310.5 L1524.8,310.4 L1526.3,310.3 L1527.8,310.2 L1529.3,310.1 L1530.8,310.0 L1532.3,309.9 L1533.8,309.8 L1535.3,309.8 L1536.8,309.7 L1538.3,309.6 L1539.8,309.5 L1541.3,309.4 L1542.8,309.3 L1544.3,309.2 L1545.8,309.1 L1547.3,309.0 L1548.8,308.9 L1550.3,308.8 L1551.8,308.7 L1553.3,308.7 L1554.8,308.6 L1556.3,308.5 L1557.8,308.4 L1559.3,308.3 L1560.8,308.3 L1562.3,308.2 L1563.8,308.1 L1565.3,308.1 L1566.8,308.0 L1568.3,308.0 L1569.8,307.9 L1571.3,307.9 L1572.8,307.9 L1574.3,307.8 L1575.8,307.8 L1577.3,307.8 L1578.8,307.8 L1580.3,307.8 L1581.8,307.9 L1583.3,308.0 L1584.8,308.1 L1586.3,308.3 L1587.8,308.5 L1589.3,308.8 L1590.8,309.0 L1592.3,309.3 L1593.8,309.6 L1595.3,309.9 L1596.8,310.1 L1598.3,310.4 L1599.8,310.6 L1601.3,310.8 L1602.8,311.0 L1604.3,311.1 L1605.8,311.2 L1607.3,311.3 L1608.8,311.4 L1610.3,311.5 L1611.8,311.6 L1613.3,311.7 L1614.8,311.8 L1616.3,311.9 L1617.8,312.0 L1619.3,312.0 L1620.8,312.1 L1622.3,312.2 L1623.8,312.3 L1625.3,312.3 L1626.8,312.4 L1628.3,312.5 L1629.8,312.5 L1631.3,312.6 L1632.8,312.7 L1634.3,312.7 L1635.8,312.8 L1637.3,312.8 L1638.8,312.9 L1640.3,312.9 L1641.8,313.0 L1643.3,313.0 L1644.8,313.0 L1646.3,313.1 L1647.8,313.1 L1649.3,313.1 L1650.8,313.2 L1652.3,313.2 L1653.8,313.2 L1655.3,313.2 L1656.8,313.2 L1658.3,313.2 L1659.8,313.2 L1661.3,313.1 L1662.8,313.1 L1664.3,313.0 L1665.8,312.9 L1667.3,312.8 L1668.8,312.7 L1670.3,312.5 L1671.8,312.4 L1673.3,312.3 L1674.8,312.1 L1676.3,312.0 L1677.8,311.8 L1679.3,311.7 L1680.8,311.6 L1682.3,311.4 L1683.8,311.3 L1685.3,311.2 L1686.8,311.0 L1688.3,310.9 L1689.8,310.7 L1691.3,310.5 L1692.8,310.4 L1694.3,310.2 L1695.8,310.0 L1697.3,309.8 L1698.8,309.6 L1700.3,309.5 L1701.8,309.3 L1703.3,309.1 L1704.8,308.9 L1706.3,308.7 L1707.8,308.5 L1709.3,308.3 L1710.8,308.2 L1712.3,308.0 L1713.8,307.8 L1715.3,307.6 L1716.8,307.5 L1718.3,307.3 L1719.8,307.2 L1721.3,307.0 L1722.8,306.9 L1724.3,306.8 L1725.8,306.6 L1727.3,306.5 L1728.8,306.4 L1730.3,306.3 L1731.8,306.2 L1733.3,306.1 L1734.8,306.0 L1736.3,305.9 L1737.8,305.8 L1739.3,305.7 L1740.8,305.6 L1742.3,305.6 L1743.8,305.5 L1745.3,305.4 L1746.8,305.3 L1748.3,305.3 L1749.8,305.2 L1751.3,305.1 L1752.8,305.1 L1754.3,305.1 L1755.8,305.0 L1757.3,305.0 L1758.8,305.0 L1760.3,305.1 L1761.8,305.1 L1763.3,305.3 L1764.8,305.5 L1766.3,305.7 L1767.8,305.9 L1769.3,306.2 L1770.8,306.5 L1772.3,307.0 L1773.8,307.6 L1775.3,308.3 L1776.8,309.0 L1778.3,309.7 L1779.8,310.3 L1781.3,310.7 L1782.8,310.8 L1784.3,310.9 L1785.8,310.8 L1787.3,310.7 L1788.8,310.6 L1790.3,310.5 L1791.8,310.4 L1793.3,310.2 L1794.8,310.1 L1796.3,309.9 L1797.8,309.7 L1799.3,309.5 L1800.8,309.3 L1802.3,309.1 L1803.8,308.8 L1805.3,308.4 L1806.8,308.0 L1808.3,307.6 L1809.8,307.2 L1811.3,306.7 L1812.8,306.3 L1814.3,305.8 L1815.8,305.4 L1817.3,304.9 L1818.8,304.5 L1820.3,304.2 L1821.8,303.8 L1823.3,303.5 L1824.8,303.3 L1826.3,303.1 L1827.8,302.8 L1829.3,302.6 L1830.8,302.4 L1832.3,302.2 L1833.8,302.0 L1835.3,301.8 L1836.8,301.6 L1838.3,301.4 L1839.8,301.2 L1841.3,301.0 L1842.8,300.8 L1844.3,300.6 L1845.8,300.5 L1847.3,300.3 L1848.8,300.1 L1850.3,300.0 L1851.8,299.8 L1853.3,299.6 L1854.8,299.5 L1856.3,299.4 L1857.8,299.2 L1859.3,299.1 L1860.8,299.0 L1862.3,298.9 L1863.8,298.8 L1865.3,298.7 L1866.8,298.6 L1868.3,298.5 L1869.8,298.4 L1871.3,298.3 L1872.8,298.3 L1874.3,298.2 L1875.8,298.1 L1877.3,298.1 L1878.8,298.1 L1880.3,298.0 L1881.8,298.0 L1883.3,298.0 L1884.8,297.9 L1886.3,297.9 L1887.8,297.9 L1889.3,297.9 L1890.8,297.8 L1892.3,297.8 L1893.8,297.8 L1895.3,297.8 L1896.8,297.7 L1898.3,297.7 L1899.8,297.7 L1901.3,297.7 L1902.8,297.7 L1904.3,297.6 L1905.8,297.6 L1907.3,297.6 L1908.8,297.6 L1910.3,297.6 L1911.8,297.6 L1913.3,297.6 L1914.8,297.5 L1916.3,297.5 L1917.8,297.5 L1919.3,297.5 L1920.8,297.5 L1922.3,297.5 L1923.8,297.5 L1925.3,297.5 L1926.8,297.5 L1928.3,297.4 L1929.8,297.4 L1931.3,297.4 L1932.8,297.4 L1934.3,297.4 L1935.8,297.4 L1937.3,297.4 L1938.8,297.4 L1940.3,297.4 L1941.8,297.4 L1943.3,297.4 L1944.8,297.3 L1946.3,297.3 L1947.8,297.3 L1949.3,297.3 L1950.8,297.3 L1952.3,297.3 L1953.8,297.3 L1955.3,297.3 L1956.8,297.3 L1958.3,297.3 L1959.8,297.2 L1961.3,297.2 L1962.8,297.2 L1964.3,297.2 L1965.8,297.2 L1967.3,297.2 L1968.8,297.2 L1970.3,297.2 L1971.8,297.1 L1973.3,297.1 L1974.8,297.1 L1976.3,297.1 L1977.8,297.1 L1979.3,297.0 L1980.8,297.0 L1982.3,297.0 L1983.8,297.0 L1985.3,297.0 L1986.8,296.9 L1988.3,296.9 L1989.8,296.9 L1991.3,296.8 L1992.8,296.8 L1994.3,296.8 L1995.8,296.8 L1997.3,296.7 L1998.8,296.7 L2000.3,296.6 L2001.8,296.6 L2003.3,296.6 L2004.8,296.5 L2006.3,296.4 L2007.8,296.3 L2009.3,296.1 L2010.8,296.0 L2012.3,295.8 L2013.8,295.7 L2015.3,295.5 L2016.8,295.3 L2018.3,295.2 L2019.8,295.0 L2021.3,294.9 L2022.8,294.7 L2024.3,294.6 L2025.8,294.5 L2027.3,294.4 L2028.8,294.4 L2030.3,294.3 L2031.8,294.2 L2033.3,294.1 L2034.8,294.1 L2036.3,294.0 L2037.8,293.9 L2039.3,293.8 L2040.8,293.8 L2042.3,293.7 L2043.8,293.6 L2045.3,293.6 L2046.8,293.5 L2048.3,293.5 L2049.8,293.4 L2051.3,293.3 L2052.8,293.3 L2054.3,293.2 L2055.8,293.2 L2057.3,293.1 L2058.8,293.0 L2060.3,293.0 L2061.8,292.9 L2063.3,292.9 L2064.8,292.8 L2066.3,292.8 L2067.8,292.7 L2069.3,292.7 L2070.8,292.6 L2072.3,292.6 L2073.8,292.5 L2075.3,292.5 L2076.8,292.5 L2078.3,292.4 L2079.8,292.4 L2081.3,292.3 L2082.8,292.3 L2084.3,292.2 L2085.8,292.2 L2087.3,292.1 L2088.8,292.1 L2090.3,292.1 L2091.8,292.0 L2093.3,292.0 L2094.8,291.9 L2096.3,291.9 L2097.8,291.9 L2099.3,291.8 L2100.8,291.8 L2102.3,291.7 L2103.8,291.7 L2105.3,291.7 L2106.8,291.6 L2108.3,291.6 L2109.8,291.5 L2111.3,291.5 L2112.8,291.5 L2114.3,291.4 L2115.8,291.4 L2117.3,291.3 L2118.8,291.3 L2120.3,291.3 L2121.8,291.2 L2123.3,291.2 L2124.8,291.1 L2126.3,291.1 L2127.8,291.1 L2129.3,291.0 L2130.8,291.0 L2132.3,290.9 L2133.8,290.9 L2135.3,290.9 L2136.8,290.8 L2138.3,290.8 L2139.8,290.7 L2141.3,290.7 L2142.8,290.6 L2144.3,290.6 L2145.8,290.6 L2147.3,290.5 L2148.8,290.5 L2150.3,290.4 L2151.8,290.4 L2153.3,290.4 L2154.8,290.3 L2156.3,290.3 L2157.8,290.3 L2159.3,290.2 L2160.8,290.2 L2162.3,290.1 L2163.8,290.1 L2165.3,290.1 L2166.8,290.0 L2168.3,290.0 L2169.8,289.9 L2171.3,289.9 L2172.8,289.9 L2174.3,289.8 L2175.8,289.8 L2177.3,289.8 L2178.8,289.7 L2180.3,289.7 L2181.8,289.7 L2183.3,289.6 L2184.8,289.6 L2186.3,289.6 L2187.8,289.5 L2189.3,289.5 L2190.8,289.5 L2192.3,289.4 L2193.8,289.4 L2195.3,289.4 L2196.8,289.3 L2198.3,289.3 L2199.8,289.3 L2201.3,289.3 L2202.8,289.2 L2204.3,289.2 L2205.8,289.2 L2207.3,289.1 L2208.8,289.1 L2210.3,289.1 L2211.8,289.0 L2213.3,289.0 L2214.8,289.0 L2216.3,289.0 L2217.8,288.9 L2219.3,288.9 L2220.8,288.9 L2222.3,288.8 L2223.8,288.8 L2225.3,288.8 L2226.8,288.7 L2228.3,288.7 L2229.8,288.7 L2231.3,288.6 L2232.8,288.6 L2234.3,288.6 L2235.8,288.6 L2237.3,288.5 L2238.8,288.5 L2240.3,288.5 L2241.8,288.4 L2243.3,288.4 L2244.8,288.4 L2246.3,288.3 L2247.8,288.3 L2249.3,288.3 L2250.8,288.3 L2252.3,288.2 L2253.8,288.2 L2255.3,288.2 L2256.8,288.2 L2258.3,288.1 L2259.8,288.1 L2261.3,288.1 L2262.8,288.1 L2264.3,288.0 L2265.8,288.0 L2267.3,288.0 L2268.8,288.0 L2270.3,287.9 L2271.8,287.9 L2273.3,287.9 L2274.8,287.9 L2276.3,287.9 L2277.8,287.8 L2279.3,287.8 L2280.8,287.8 L2282.3,287.8 L2283.8,287.8 L2285.3,287.8 L2286.8,287.8 L2288.3,287.7 L2289.8,287.7 L2291.3,287.7 L2292.8,287.7 L2294.3,287.7 L2295.8,287.7 L2297.3,287.7 L2298.8,287.7 L2300.3,287.7 L2301.8,287.7 L2303.3,287.7 L2304.8,287.7 L2306.3,287.7 L2307.8,287.7 L2309.3,287.7 L2310.8,287.7 L2312.3,287.7 L2313.8,287.7 L2315.3,287.7 L2316.8,287.7 L2318.3,287.7 L2319.8,287.7 L2321.3,287.7 L2322.8,287.7 L2324.3,287.7 L2325.8,287.7 L2327.3,287.7 L2328.8,287.7 L2330.3,287.7 L2331.8,287.7 L2333.3,287.7 L2334.8,287.7 L2336.3,287.7 L2337.8,287.7 L2339.3,287.7 L2340.8,287.7 L2342.3,287.7 L2343.8,287.7 L2345.3,287.7 L2346.8,287.7 L2348.3,287.7 L2349.8,287.7 L2351.3,287.7 L2352.8,287.7 L2354.3,287.7 L2355.8,287.7 L2357.3,287.7 L2358.8,287.7 L2360.3,287.7 L2361.8,287.7 L2363.3,287.7 L2364.8,287.7 L2366.3,287.7 L2367.8,287.7 L2369.3,287.7 L2370.8,287.7 L2372.3,287.7 L2373.8,287.7 L2375.3,287.7 L2376.8,287.7 L2378.3,287.7 L2379.8,287.7 L2381.3,287.7 L2382.8,287.7 L2384.3,287.7 L2385.8,287.7 L2387.3,287.7 L2388.8,287.7 L2390.3,287.7 L2391.8,287.7" stroke="#9c9c9c" stroke-width="2.2"/>
<path d="M104.0,1227.3 L104.5,1227.2 L105.0,1227.2 L105.5,1227.1 L106.0,1227.1 L106.5,1227.0 L107.0,1227.0 L107.5,1226.9 L108.0,1226.9 L108.5,1226.8 L109.0,1226.8 L109.5,1226.7 L110.0,1226.7 L110.5,1226.6 L111.0,1226.6 L111.5,1226.5 L112.0,1226.5 L112.5,1226.4 L113.0,1226.3 L113.5,1226.3 L114.0,1226.2 L114.5,1226.2 L115.0,1226.1 L115.5,1226.1 L116.0,1226.0 L116.5,1226.0 L117.0,1225.9 L117.5,1225.8 L118.0,1225.8 L118.5,1225.7 L119.0,1225.7 L119.5,1225.6 L120.0,1225.6 L120.5,1225.5 L121.0,1225.4 L121.5,1225.4 L122.0,1225.3 L122.5,1225.3 L123.0,1225.2 L123.5,1225.1 L124.0,1225.1 L124.5,1225.0 L125.0,1224.9 L125.5,1224.9 L126.0,1224.8 L126.5,1224.8 L127.0,1224.7 L127.5,1224.6 L128.0,1224.6 L128.5,1224.5 L129.0,1224.4 L129.5,1224.4 L130.0,1224.3 L130.5,1224.2 L131.0,1224.2 L131.5,1224.1 L132.0,1224.0 L132.5,1224.0 L133.0,1223.9 L133.5,1223.8 L134.0,1223.8 L134.5,1223.7 L135.0,1223.6 L135.5,1223.6 L136.0,1223.5 L136.5,1223.4 L137.0,1223.3 L137.5,1223.3 L138.0,1223.2 L138.5,1223.1 L139.0,1223.0 L139.5,1223.0 L140.0,1222.9 L140.5,1222.8 L141.0,1222.8 L141.5,1222.7 L142.0,1222.6 L142.5,1222.5 L143.0,1222.4 L143.5,1222.4 L144.0,1222.3 L144.5,1222.2 L145.0,1222.1 L145.5,1222.1 L146.0,1222.0 L146.5,1221.9 L147.0,1221.8 L147.5,1221.7 L148.0,1221.7 L148.5,1221.6 L149.0,1221.5 L149.5,1221.4 L150.0,1221.3 L150.5,1221.3 L151.0,1221.2 L151.5,1221.1 L152.0,1221.0 L152.5,1220.9 L153.0,1220.8 L153.5,1220.7 L154.0,1220.7 L154.5,1220.6 L155.0,1220.5 L155.5,1220.4 L156.0,1220.3 L156.5,1220.2 L157.0,1220.1 L157.5,1220.0 L158.0,1220.0 L158.5,1219.9 L159.0,1219.8 L159.5,1219.7 L160.0,1219.6 L160.5,1219.5 L161.0,1219.4 L161.5,1219.3 L162.0,1219.2 L162.5,1219.1 L163.0,1219.0 L163.5,1218.9 L164.0,1218.8 L164.5,1218.7 L165.0,1218.6 L165.5,1218.5 L166.0,1218.4 L166.5,1218.3 L167.0,1218.2 L167.5,1218.1 L168.0,1218.0 L168.5,1217.9 L169.0,1217.8 L169.5,1217.7 L170.0,1217.6 L170.5,1217.5 L171.0,1217.4 L171.5,1217.3 L172.0,1217.2 L172.5,1217.1 L173.0,1217.0 L173.5,1216.9 L174.0,1216.8 L174.5,1216.7 L175.0,1216.6 L175.5,1216.5 L176.0,1216.4 L176.5,1216.2 L177.0,1216.1 L177.5,1216.0 L178.0,1215.9 L178.5,1215.8 L179.0,1215.7 L179.5,1215.6 L180.0,1215.5 L180.5,1215.3 L181.0,1215.2 L181.5,1215.1 L182.0,1215.0 L182.5,1214.9 L183.0,1214.8 L183.5,1214.6 L184.0,1214.5 L184.5,1214.4 L185.0,1214.3 L185.5,1214.2 L186.0,1214.0 L186.5,1213.9 L187.0,1213.8 L187.5,1213.7 L188.0,1213.5 L188.5,1213.4 L189.0,1213.3 L189.5,1213.2 L190.0,1213.0 L190.5,1212.9 L191.0,1212.8 L191.5,1212.6 L192.0,1212.5 L192.5,1212.4 L193.0,1212.3 L193.5,1212.1 L194.0,1212.0 L194.5,1211.9 L195.0,1211.7 L195.5,1211.6 L196.0,1211.4 L196.5,1211.3 L197.0,1211.2 L197.5,1211.0 L198.0,1210.9 L198.5,1210.8 L199.0,1210.6 L199.5,1210.5 L200.0,1210.3 L200.5,1210.2 L201.0,1210.0 L201.5,1209.9 L202.0,1209.8 L202.5,1209.6 L203.0,1209.5 L203.5,1209.3 L204.0,1209.2 L204.5,1209.0 L205.0,1208.9 L205.5,1208.7 L206.0,1208.6 L206.5,1208.4 L207.0,1208.2 L207.5,1208.1 L208.0,1207.9 L208.5,1207.8 L209.0,1207.6 L209.5,1207.5 L210.0,1207.3 L210.5,1207.1 L211.0,1207.0 L211.5,1206.8 L212.0,1206.7 L212.5,1206.5 L213.0,1206.3 L213.5,1206.2 L214.0,1206.0 L214.5,1205.8 L215.0,1205.7 L215.5,1205.5 L216.0,1205.3 L216.5,1205.2 L217.0,1205.0 L217.5,1204.8 L218.0,1204.6 L218.5,1204.5 L219.0,1204.3 L219.5,1204.1 L220.0,1203.9 L220.5,1203.8 L221.0,1203.6 L221.5,1203.4 L222.0,1203.2 L222.5,1203.0 L223.0,1202.8 L223.5,1202.7 L224.0,1202.5 L224.5,1202.3 L225.0,1202.1 L225.5,1201.9 L226.0,1201.7 L226.5,1201.5 L227.0,1201.3 L227.5,1201.1 L228.0,1201.0 L228.5,1200.8 L229.0,1200.6 L229.5,1200.4 L230.0,1200.2 L230.5,1200.0 L231.0,1199.8 L231.5,1199.6 L232.0,1199.4 L232.5,1199.2 L233.0,1198.9 L233.5,1198.7 L234.0,1198.5 L234.5,1198.3 L235.0,1198.1 L235.5,1197.9 L236.0,1197.7 L236.5,1197.5 L237.0,1197.3 L237.5,1197.0 L238.0,1196.8 L238.5,1196.6 L239.0,1196.4 L239.5,1196.2 L240.0,1195.9 L240.5,1195.7 L241.0,1195.5 L241.5,1195.3 L242.0,1195.0 L242.5,1194.8 L243.0,1194.6 L243.5,1194.3 L244.0,1194.1 L244.5,1193.9 L245.0,1193.6 L245.5,1193.4 L246.0,1193.2 L246.5,1192.9 L247.0,1192.7 L247.5,1192.4 L248.0,1192.2 L248.5,1192.0 L249.0,1191.7 L249.5,1191.5 L250.0,1191.2 L250.5,1191.0 L251.0,1190.7 L251.5,1190.5 L252.0,1190.2 L252.5,1189.9 L253.0,1189.7 L253.5,1189.4 L254.0,1189.2 L254.5,1188.9 L255.0,1188.6 L255.5,1188.4 L256.0,1188.1 L256.5,1187.8 L257.0,1187.6 L257.5,1187.3 L258.0,1187.0 L258.5,1186.7 L259.0,1186.5 L259.5,1186.2 L260.0,1185.9 L260.5,1185.6 L261.0,1185.3 L261.5,1185.0 L262.0,1184.8 L262.5,1184.5 L263.0,1184.2 L263.5,1183.9 L264.0,1183.6 L264.5,1183.3 L265.0,1183.0 L265.5,1182.7 L266.0,1182.4 L266.5,1182.1 L267.0,1181.8 L267.5,1181.5 L268.0,1181.2 L268.5,1180.9 L269.0,1180.6 L269.5,1180.2 L270.0,1179.9 L270.5,1179.6 L271.0,1179.3 L271.5,1179.0 L272.0,1178.6 L272.5,1178.3 L273.0,1178.0 L273.5,1177.7 L274.0,1177.3 L274.5,1177.0 L275.0,1176.7 L275.5,1176.3 L276.0,1176.0 L276.5,1175.6 L277.0,1175.3 L277.5,1175.0 L278.0,1174.6 L278.5,1174.3 L279.0,1173.9 L279.5,1173.5 L280.0,1173.2 L280.5,1172.8 L281.0,1172.5 L281.5,1172.1 L282.0,1171.7 L282.5,1171.4 L283.0,1171.0 L283.5,1170.6 L284.0,1170.3 L284.5,1169.9 L285.0,1169.5 L285.5,1169.1 L286.0,1168.7 L286.5,1168.4 L287.0,1168.0 L287.5,1167.6 L288.0,1167.2 L288.5,1166.8 L289.0,1166.4 L289.5,1166.0 L290.0,1165.6 L290.5,1165.2 L291.0,1164.8 L291.5,1164.4 L292.0,1164.0 L292.5,1163.5 L293.0,1163.1 L293.5,1162.7 L294.0,1162.3 L294.5,1161.8 L295.0,1161.4 L295.5,1161.0 L296.0,1160.6 L296.5,1160.1 L297.0,1159.7 L297.5,1159.2 L298.0,1158.8 L298.5,1158.3 L299.0,1157.9 L299.5,1157.4 L300.0,1157.0 L300.5,1156.5 L301.0,1156.1 L301.5,1155.6 L302.0,1155.1 L302.5,1154.7 L303.0,1154.2 L303.5,1153.7 L304.0,1153.2 L304.5,1152.7 L305.0,1152.3 L305.5,1151.8 L306.0,1151.3 L306.5,1150.8 L307.0,1150.3 L307.5,1149.8 L308.0,1149.3 L308.5,1148.7 L309.0,1148.2 L309.5,1147.7 L310.0,1147.2 L310.5,1146.7 L311.0,1146.1 L311.5,1145.6 L312.0,1145.0 L312.5,1144.5 L313.0,1143.9 L313.5,1143.4 L314.0,1142.8 L314.5,1142.3 L315.0,1141.7 L315.5,1141.1 L316.0,1140.6 L316.5,1140.0 L317.0,1139.4 L317.5,1138.8 L318.0,1138.2 L318.5,1137.6 L319.0,1137.0 L319.5,1136.4 L320.0,1135.8 L320.5,1135.2 L321.0,1134.5 L321.5,1133.9 L322.0,1133.3 L322.5,1132.6 L323.0,1132.0 L323.5,1131.3 L324.0,1130.6 L324.5,1130.0 L325.0,1129.3 L325.5,1128.6 L326.0,1127.9 L326.5,1127.2 L327.0,1126.5 L327.5,1125.8 L328.0,1125.1 L328.5,1124.4 L329.0,1123.7 L329.5,1123.0 L330.0,1122.2 L330.5,1121.5 L331.0,1120.7 L331.5,1119.9 L332.0,1119.2 L332.5,1118.4 L333.0,1117.6 L333.5,1116.8 L334.0,1116.0 L334.5,1115.2 L335.0,1114.4 L335.5,1113.6 L336.0,1112.7 L336.5,1111.9 L337.0,1111.0 L337.5,1110.2 L338.0,1109.3 L338.5,1108.4 L339.0,1107.5 L339.5,1106.7 L340.0,1105.7 L340.5,1104.8 L341.0,1103.9 L341.5,1103.0 L342.0,1102.0 L342.5,1101.1 L343.0,1100.1 L343.5,1099.1 L344.0,1098.1 L344.5,1097.1 L345.0,1096.1 L345.5,1095.1 L346.0,1094.1 L346.5,1093.0 L347.0,1092.0 L347.5,1090.9 L348.0,1089.8 L348.5,1088.7 L349.0,1087.6 L349.5,1086.5 L350.0,1085.4 L350.5,1084.2 L351.0,1083.1 L351.5,1081.9 L352.0,1080.7 L352.5,1079.5 L353.0,1078.3 L353.5,1077.1 L354.0,1075.8 L354.5,1074.6 L355.0,1073.3 L355.5,1072.0 L356.0,1070.7 L356.5,1069.4 L357.0,1068.0 L357.5,1066.7 L358.0,1065.3 L358.5,1063.9 L359.0,1062.5 L359.5,1061.1 L360.0,1059.6 L360.5,1058.1 L361.0,1056.6 L361.5,1055.1 L362.0,1053.5 L362.5,1051.9 L363.0,1050.3 L363.5,1048.7 L364.0,1047.0 L364.5,1045.3 L365.0,1043.6 L365.5,1041.8 L366.0,1040.0 L366.5,1038.2 L367.0,1036.3 L367.5,1034.4 L368.0,1032.5 L368.5,1030.5 L369.0,1028.5 L369.5,1026.4 L370.0,1024.3 L370.5,1022.1 L371.0,1019.9 L371.5,1017.7 L372.0,1015.4 L372.5,1013.0 L373.0,1010.6 L373.5,1008.2 L374.0,1005.6 L374.5,1003.1 L375.0,1000.4 L375.5,997.7 L376.0,995.0 L376.5,992.1 L377.0,989.2 L377.5,986.3 L378.0,983.2 L378.5,980.1 L379.0,976.9 L379.5,973.7 L380.0,970.3 L380.5,966.9 L381.0,963.3 L381.5,959.7 L382.0,956.0 L382.5,952.2 L383.0,948.3 L383.5,944.2 L384.0,940.1 L384.5,935.9 L385.0,931.5 L385.5,927.0 L386.0,922.4 L386.5,917.7 L387.0,912.9 L387.5,907.9 L388.0,902.7 L388.5,897.5 L389.0,892.0 L389.5,886.5 L390.0,880.7 L390.5,874.9 L391.0,868.8 L391.5,862.7 L392.0,856.3 L392.5,849.9 L393.0,843.2 L393.5,836.5 L394.0,829.6 L394.5,822.5 L395.0,815.3 L395.5,807.9 L396.0,800.4 L396.5,792.8 L397.0,785.0 L397.5,777.0 L398.0,769.0 L398.5,760.8 L399.0,752.4 L399.5,744.0 L400.0,735.4 L400.5,726.7 L401.0,717.8 L401.5,708.9 L402.0,699.8 L402.5,690.7 L403.0,681.4 L403.5,672.0 L404.0,662.6 L404.5,653.1 L405.0,643.5 L405.5,633.8 L406.0,624.1 L406.5,614.3 L407.0,604.5 L407.5,594.7 L408.0,584.8 L408.5,574.9 L409.0,565.1 L409.5,555.2 L410.0,545.3 L410.5,535.5 L411.0,525.8 L411.5,516.1 L412.0,506.4 L412.5,496.9 L413.0,487.4 L413.5,478.0 L414.0,468.8 L414.5,459.8 L415.0,450.8 L415.5,442.1 L416.0,433.5 L416.5,425.2 L417.0,417.1 L417.5,409.2 L418.0,401.5 L418.5,394.2 L419.0,387.1 L419.5,380.3 L420.0,373.8 L420.5,367.7 L421.0,362.0 L421.5,356.6 L422.0,351.6 L422.5,347.0 L423.0,342.8 L423.5,339.0 L424.0,335.7 L424.5,332.9 L425.0,330.5 L425.5,328.6 L426.0,327.2 L426.5,326.4 L427.0,326.0 L427.5,326.2 L428.0,326.9 L428.5,328.2 L429.0,330.0 L429.5,332.4 L430.0,335.3 L430.5,338.9 L431.0,343.0 L431.5,347.6 L432.0,352.9 L432.5,358.7 L433.0,365.1 L433.5,372.0 L434.0,379.5 L434.5,387.6 L435.0,396.2 L435.5,405.3 L436.0,415.0 L436.5,425.2 L437.0,435.8 L437.5,446.9 L438.0,458.3 L438.5,470.0 L439.0,481.9 L439.5,494.1 L440.0,506.4 L440.5,518.9 L441.0,531.4 L441.5,544.0 L442.0,556.7 L442.5,569.3 L443.0,581.9 L443.5,594.5 L444.0,607.0 L444.5,619.5 L445.0,631.8 L445.5,644.0 L446.0,656.1 L446.5,668.0 L447.0,679.8 L447.5,691.3 L448.0,702.7 L448.5,713.9 L449.0,724.8 L449.5,735.6 L450.0,746.1 L450.5,756.4 L451.0,766.4 L451.5,776.2 L452.0,785.7 L452.5,795.0 L453.0,804.0 L453.5,812.7 L454.0,821.2 L454.5,829.4 L455.0,837.4 L455.5,845.0 L456.0,852.4 L456.5,859.6 L457.0,866.4 L457.5,873.1 L458.0,879.5 L458.5,885.7 L459.0,891.6 L459.5,897.4 L460.0,903.0 L460.5,908.3 L461.0,913.5 L461.5,918.6 L462.0,923.4 L462.5,928.1 L463.0,932.7 L463.5,937.1 L464.0,941.4 L464.5,945.5 L465.0,949.5 L465.5,953.4 L466.0,957.2 L466.5,960.9 L467.0,964.4 L467.5,967.9 L468.0,971.3 L468.5,974.5 L469.0,977.7 L469.5,980.8 L470.0,983.8 L470.5,986.8 L471.0,989.6 L471.5,992.4 L472.0,995.1 L472.5,997.8 L473.0,1000.4 L473.5,1002.9 L474.0,1005.4 L474.5,1007.9 L475.0,1010.2 L475.5,1012.6 L476.0,1014.9 L476.5,1017.1 L477.0,1019.3 L477.5,1021.4 L478.0,1023.6 L478.5,1025.6 L479.0,1027.7 L479.5,1029.7 L480.0,1031.6 L480.5,1033.6 L481.0,1035.4 L481.5,1037.3 L482.0,1039.1 L482.5,1040.9 L483.0,1042.7 L483.5,1044.5 L484.0,1046.2 L484.5,1047.9 L485.0,1049.5 L485.5,1051.2 L486.0,1052.8 L486.5,1054.4 L487.0,1056.0 L487.5,1057.5 L488.0,1059.0 L488.5,1060.6 L489.0,1062.0 L489.5,1063.5 L490.0,1065.0 L490.5,1066.4 L491.0,1067.9 L491.5,1069.3 L492.0,1070.7 L492.5,1072.0 L493.0,1073.4 L493.5,1074.8 L494.0,1076.1 L494.5,1077.4 L495.0,1078.7 L495.5,1080.0 L496.0,1081.3 L496.5,1082.6 L497.0,1083.9 L497.5,1085.1 L498.0,1086.3 L498.5,1087.6 L499.0,1088.8 L499.5,1090.0 L500.0,1091.1 L500.5,1092.3 L501.0,1093.5 L501.5,1094.6 L502.0,1095.7 L502.5,1096.9 L503.0,1098.0 L503.5,1099.1 L504.0,1100.2 L504.5,1101.2 L505.0,1102.3 L505.5,1103.4 L506.0,1104.4 L506.5,1105.4 L507.0,1106.5 L507.5,1107.5 L508.0,1108.5 L508.5,1109.5 L509.0,1110.5 L509.5,1111.5 L510.0,1112.4 L510.5,1113.4 L511.0,1114.3 L511.5,1115.3 L512.0,1116.2 L512.5,1117.1 L513.0,1118.0 L513.5,1118.9 L514.0,1119.8 L514.5,1120.7 L515.0,1121.6 L515.5,1122.5 L516.0,1123.3 L516.5,1124.2 L517.0,1125.0 L517.5,1125.9 L518.0,1126.7 L518.5,1127.5 L519.0,1128.3 L519.5,1129.1 L520.0,1129.9 L520.5,1130.7 L521.0,1131.5 L521.5,1132.3 L522.0,1133.1 L522.5,1133.8 L523.0,1134.6 L523.5,1135.3 L524.0,1136.1 L524.5,1136.8 L525.0,1137.5 L525.5,1138.3 L526.0,1139.0 L526.5,1139.7 L527.0,1140.4 L527.5,1141.1 L528.0,1141.8 L528.5,1142.5 L529.0,1143.1 L529.5,1143.8 L530.0,1144.5 L530.5,1145.2 L531.0,1145.8 L531.5,1146.5 L532.0,1147.1 L532.5,1147.7 L533.0,1148.4 L533.5,1149.0 L534.0,1149.6 L534.5,1150.2 L535.0,1150.9 L535.5,1151.5 L536.0,1152.1 L536.5,1152.7 L537.0,1153.3 L537.5,1153.8 L538.0,1154.4 L538.5,1155.0 L539.0,1155.6 L539.5,1156.1 L540.0,1156.7 L540.5,1157.3 L541.0,1157.8 L541.5,1158.4 L542.0,1158.9 L542.5,1159.5 L543.0,1160.0 L543.5,1160.5 L544.0,1161.1 L544.5,1161.6 L545.0,1162.1 L545.5,1162.6 L546.0,1163.1 L546.5,1163.6 L547.0,1164.1 L547.5,1164.6 L548.0,1165.1 L548.5,1165.6 L549.0,1166.1 L549.5,1166.6 L550.0,1167.1 L550.5,1167.6 L551.0,1168.0 L551.5,1168.5 L552.0,1169.0 L552.5,1169.4 L553.0,1169.9 L553.5,1170.3 L554.0,1170.8 L554.5,1171.2 L555.0,1171.7 L555.5,1172.1 L556.0,1172.6 L556.5,1173.0 L557.0,1173.4 L557.5,1173.9 L558.0,1174.3 L558.5,1174.7 L559.0,1175.1 L559.5,1175.5 L560.0,1176.0 L560.5,1176.4 L561.0,1176.8 L561.5,1177.2 L562.0,1177.6 L562.5,1178.0 L563.0,1178.4 L563.5,1178.8 L564.0,1179.2 L564.5,1179.6 L565.0,1179.9 L565.5,1180.3 L566.0,1180.7 L566.5,1181.1 L567.0,1181.5 L567.5,1181.8 L568.0,1182.2 L568.5,1182.6 L569.0,1182.9 L569.5,1183.3 L570.0,1183.7 L570.5,1184.0 L571.0,1184.4 L571.5,1184.7 L572.0,1185.1 L572.5,1185.4 L573.0,1185.8 L573.5,1186.1 L574.0,1186.5 L574.5,1186.8 L575.0,1187.1 L575.5,1187.5 L576.0,1187.8 L576.5,1188.1 L577.0,1188.5 L577.5,1188.8 L578.0,1189.1 L578.5,1189.4 L579.0,1189.8 L579.5,1190.1 L580.0,1190.4 L580.5,1190.7 L581.0,1191.0 L581.5,1191.3 L582.0,1191.6 L582.5,1192.0 L583.0,1192.3 L583.5,1192.6 L584.0,1192.9 L584.5,1193.2 L585.0,1193.5 L585.5,1193.8 L586.0,1194.1 L586.5,1194.4 L587.0,1194.6 L587.5,1194.9 L588.0,1195.2 L588.5,1195.5 L589.0,1195.8 L589.5,1196.1 L590.0,1196.4 L590.5,1196.6 L591.0,1196.9 L591.5,1197.2 L592.0,1197.5 L592.5,1197.7 L593.0,1198.0 L593.5,1198.3 L594.0,1198.6 L594.5,1198.8 L595.0,1199.1 L595.5,1199.4 L596.0,1199.6 L596.5,1199.9 L597.0,1200.2 L597.5,1200.4 L598.0,1200.7 L598.5,1200.9 L599.0,1201.2 L599.5,1201.4 L600.0,1201.7 L600.5,1202.0 L601.0,1202.2 L601.5,1202.5 L602.0,1202.7 L602.5,1202.9 L603.0,1203.2 L603.5,1203.4 L604.0,1203.7 L604.5,1203.9 L605.0,1204.2 L605.5,1204.4 L606.0,1204.7 L606.5,1204.9 L607.0,1205.1 L607.5,1205.4 L608.0,1205.6 L608.5,1205.8 L609.0,1206.1 L609.5,1206.3 L610.0,1206.5 L610.5,1206.8 L611.0,1207.0 L611.5,1207.2 L612.0,1207.4 L612.5,1207.7 L613.0,1207.9 L613.5,1208.1 L614.0,1208.3 L614.5,1208.6 L615.0,1208.8 L615.5,1209.0 L616.0,1209.2 L616.5,1209.4 L617.0,1209.6 L617.5,1209.9 L618.0,1210.1 L618.5,1210.3 L619.0,1210.5 L619.5,1210.7 L620.0,1210.9 L620.5,1211.1 L621.0,1211.3 L621.5,1211.5 L622.0,1211.7 L622.5,1211.9 L623.0,1212.1 L623.5,1212.4 L624.0,1212.6 L624.5,1212.8 L625.0,1213.0 L625.5,1213.2 L626.0,1213.3 L626.5,1213.5 L627.0,1213.7 L627.5,1213.9 L628.0,1214.1 L628.5,1214.3 L629.0,1214.5 L629.5,1214.7 L630.0,1214.9 L630.5,1215.1 L631.0,1215.3 L631.5,1215.5 L632.0,1215.6 L632.5,1215.8 L633.0,1216.0 L633.5,1216.2 L634.0,1216.4 L634.5,1216.6 L635.0,1216.7 L635.5,1216.9 L636.0,1217.1 L636.5,1217.3 L637.0,1217.5 L637.5,1217.6 L638.0,1217.8 L638.5,1218.0 L639.0,1218.2 L639.5,1218.3 L640.0,1218.5 L640.5,1218.7 L641.0,1218.9 L641.5,1219.0 L642.0,1219.2 L642.5,1219.4 L643.0,1219.5 L643.5,1219.7 L644.0,1219.9 L644.5,1220.0 L645.0,1220.2 L645.5,1220.4 L646.0,1220.5 L646.5,1220.7 L647.0,1220.8 L647.5,1221.0 L648.0,1221.2 L648.5,1221.3 L649.0,1221.5 L649.5,1221.6 L650.0,1221.8 L650.5,1221.9 L651.0,1222.1 L651.5,1222.3 L652.0,1222.4 L652.5,1222.6 L653.0,1222.7 L653.5,1222.9 L654.0,1223.0 L654.5,1223.2 L655.0,1223.3 L655.5,1223.5 L656.0,1223.6 L656.5,1223.8 L657.0,1223.9 L657.5,1224.0 L658.0,1224.2 L658.5,1224.3 L659.0,1224.5 L659.5,1224.6 L660.0,1224.8 L660.5,1224.9 L661.0,1225.0 L661.5,1225.2 L662.0,1225.3 L662.5,1225.5 L663.0,1225.6 L663.5,1225.7 L664.0,1225.9 L664.5,1226.0 L665.0,1226.1 L665.5,1226.3 L666.0,1226.4 L666.5,1226.5 L667.0,1226.7 L667.5,1226.8 L668.0,1226.9 L668.5,1227.1 L669.0,1227.2 L669.5,1227.3 L670.0,1227.4 L670.5,1227.6 L671.0,1227.7 L671.5,1227.8 L672.0,1228.0 L672.5,1228.1 L673.0,1228.2 L673.5,1228.3 L674.0,1228.5 L674.5,1228.6 L675.0,1228.7 L675.5,1228.8 L676.0,1228.9 L676.5,1229.1 L677.0,1229.2 L677.5,1229.3 L678.0,1229.4 L678.5,1229.5 L679.0,1229.7 L679.5,1229.8 L680.0,1229.9 L680.5,1230.0 L681.0,1230.1 L681.5,1230.2 L682.0,1230.3 L682.5,1230.5 L683.0,1230.6 L683.5,1230.7 L684.0,1230.8 L684.5,1230.9 L685.0,1231.0 L685.5,1231.1 L686.0,1231.2 L686.5,1231.3 L687.0,1231.4 L687.5,1231.6 L688.0,1231.7 L688.5,1231.8 L689.0,1231.9 L689.5,1232.0 L690.0,1232.1 L690.5,1232.2 L691.0,1232.3 L691.5,1232.4 L692.0,1232.5 L692.5,1232.6 L693.0,1232.7 L693.5,1232.8 L694.0,1232.9 L694.5,1233.0 L695.0,1233.1 L695.5,1233.2 L696.0,1233.3 L696.5,1233.4 L697.0,1233.5 L697.5,1233.6 L698.0,1233.7 L698.5,1233.8 L699.0,1233.9 L699.5,1234.0 L700.0,1234.1 L700.5,1234.2 L701.0,1234.3 L701.5,1234.4 L702.0,1234.4 L702.5,1234.5 L703.0,1234.6 L703.5,1234.7 L704.0,1234.8 L704.5,1234.9 L705.0,1235.0 L705.5,1235.1 L706.0,1235.2 L706.5,1235.3 L707.0,1235.3 L707.5,1235.4 L708.0,1235.5 L708.5,1235.6 L709.0,1235.7 L709.5,1235.8 L710.0,1235.9 L710.5,1236.0 L711.0,1236.0 L711.5,1236.1 L712.0,1236.2 L712.5,1236.3 L713.0,1236.4 L713.5,1236.5 L714.0,1236.5 L714.5,1236.6 L715.0,1236.7 L715.5,1236.8 L716.0,1236.9 L716.5,1236.9 L717.0,1237.0 L717.5,1237.1 L718.0,1237.2 L718.5,1237.2 L719.0,1237.3 L719.5,1237.4 L720.0,1237.5 L720.5,1237.6 L721.0,1237.6 L721.5,1237.7 L722.0,1237.8 L722.5,1237.9 L723.0,1237.9 L723.5,1238.0 L724.0,1238.1 L724.5,1238.2 L725.0,1238.2 L725.5,1238.3 L726.0,1238.4 L726.5,1238.4 L727.0,1238.5 L727.5,1238.6 L728.0,1238.7 L728.5,1238.7 L729.0,1238.8 L729.5,1238.9 L730.0,1238.9 L730.5,1239.0 L731.0,1239.1 L731.5,1239.1 L732.0,1239.2 L732.5,1239.3 L733.0,1239.3 L733.5,1239.4 L734.0,1239.5 L734.5,1239.5 L735.0,1239.6 L735.5,1239.7 L736.0,1239.7 L736.5,1239.8 L737.0,1239.9 L737.5,1239.9 L738.0,1240.0 L738.5,1240.1 L739.0,1240.1 L739.5,1240.2 L740.0,1240.2 L740.5,1240.3 L741.0,1240.4 L741.5,1240.4 L742.0,1240.5 L742.5,1240.5 L743.0,1240.6 L743.5,1240.7 L744.0,1240.7 L744.5,1240.8 L745.0,1240.8 L745.5,1240.9 L746.0,1241.0 L746.5,1241.0 L747.0,1241.1 L747.5,1241.1 L748.0,1241.2 L748.5,1241.2 L749.0,1241.3 L749.5,1241.4 L750.0,1241.4 L750.5,1241.5 L751.0,1241.5 L751.5,1241.6 L752.0,1241.6 L752.5,1241.7 L753.0,1241.7 L753.5,1241.8 L754.0,1241.8 L754.5,1241.9 L755.0,1241.9 L755.5,1242.0 L756.0,1242.1 L756.5,1242.1 L757.0,1242.2 L757.5,1242.2 L758.0,1242.3 L758.5,1242.3 L759.0,1242.4 L759.5,1242.4 L760.0,1242.5 L760.5,1242.5 L761.0,1242.6 L761.5,1242.6 L762.0,1242.6 L762.5,1242.7 L763.0,1242.7 L763.5,1242.8 L764.0,1242.8 L764.5,1242.9 L765.0,1242.9 L765.5,1243.0 L766.0,1243.0 L766.5,1243.1 L767.0,1243.1 L767.5,1243.2 L768.0,1243.2 L768.5,1243.2 L769.0,1243.3 L769.5,1243.3 L770.0,1243.4 L770.5,1243.4 L771.0,1243.5 L771.5,1243.5 L772.0,1243.6 L772.5,1243.6 L773.0,1243.6 L773.5,1243.7 L774.0,1243.7 L774.5,1243.8 L775.0,1243.8 L775.5,1243.8 L776.0,1243.9 L776.5,1243.9 L777.0,1244.0 L777.5,1244.0 L778.0,1244.0 L778.5,1244.1 L779.0,1244.1 L779.5,1244.2 L780.0,1244.2 L780.5,1244.2 L781.0,1244.3 L781.5,1244.3 L782.0,1244.4 L782.5,1244.4 L783.0,1244.4 L783.5,1244.5 L784.0,1244.5 L784.5,1244.5 L785.0,1244.6 L785.5,1244.6 L786.0,1244.6 L786.5,1244.7 L787.0,1244.7 L787.5,1244.8 L788.0,1244.8 L788.5,1244.8 L789.0,1244.9 L789.5,1244.9 L790.0,1244.9 L790.5,1245.0 L791.0,1245.0 L791.5,1245.0 L792.0,1245.1 L792.5,1245.1 L793.0,1245.1 L793.5,1245.2 L794.0,1245.2 L794.5,1245.2 L795.0,1245.3 L795.5,1245.3 L796.0,1245.3 L796.5,1245.4 L797.0,1245.4 L797.5,1245.4 L798.0,1245.4 L798.5,1245.5 L799.0,1245.5 L799.5,1245.5 L800.0,1245.6 L800.5,1245.6 L801.0,1245.6 L801.5,1245.7 L802.0,1245.7 L802.5,1245.7 L803.0,1245.7 L803.5,1245.8 L804.0,1245.8 L804.5,1245.8 L805.0,1245.9 L805.5,1245.9 L806.0,1245.9 L806.5,1245.9 L807.0,1246.0 L807.5,1246.0 L808.0,1246.0 L808.5,1246.0 L809.0,1246.1 L809.5,1246.1 L810.0,1246.1 L810.5,1246.2 L811.0,1246.2 L811.5,1246.2 L812.0,1246.2 L812.5,1246.3 L813.0,1246.3 L813.5,1246.3 L814.0,1246.3 L814.5,1246.4 L815.0,1246.4 L815.5,1246.4 L816.0,1246.4 L816.5,1246.5 L817.0,1246.5 L817.5,1246.5 L818.0,1246.5 L818.5,1246.5 L819.0,1246.6 L819.5,1246.6 L820.0,1246.6 L820.5,1246.6 L821.0,1246.7 L821.5,1246.7 L822.0,1246.7 L822.5,1246.7 L823.0,1246.8 L823.5,1246.8 L824.0,1246.8 L824.5,1246.8 L825.0,1246.8 L825.5,1246.9 L826.0,1246.9 L826.5,1246.9 L827.0,1246.9 L827.5,1246.9 L828.0,1247.0 L828.5,1247.0 L829.0,1247.0 L829.5,1247.0 L830.0,1247.0 L830.5,1247.1 L831.0,1247.1 L831.5,1247.1 L832.0,1247.1 L832.5,1247.1 L833.0,1247.2 L833.5,1247.2 L834.0,1247.2 L834.5,1247.2 L835.0,1247.2 L835.5,1247.3 L836.0,1247.3 L836.5,1247.3 L837.0,1247.3 L837.5,1247.3 L838.0,1247.3 L838.5,1247.4 L839.0,1247.4 L839.5,1247.4 L840.0,1247.4 L840.5,1247.4 L841.0,1247.4 L841.5,1247.5 L842.0,1247.5 L842.5,1247.5 L843.0,1247.5 L843.5,1247.5 L844.0,1247.5 L844.5,1247.6 L845.0,1247.6 L845.5,1247.6 L846.0,1247.6 L846.5,1247.6 L847.0,1247.6 L847.5,1247.7 L848.0,1247.7 L848.5,1247.7 L849.0,1247.7 L849.5,1247.7 L850.0,1247.7 L850.5,1247.7 L851.0,1247.8 L851.5,1247.8 L852.0,1247.8 L852.5,1247.8 L853.0,1247.8 L853.5,1247.8 L854.0,1247.8 L854.5,1247.9 L855.0,1247.9 L855.5,1247.9 L856.0,1247.9 L856.5,1247.9 L857.0,1247.9 L857.5,1247.9 L858.0,1247.9 L858.5,1248.0 L859.0,1248.0 L859.5,1248.0 L860.0,1248.0 L860.5,1248.0 L861.0,1248.0 L861.5,1248.0 L862.0,1248.0 L862.5,1248.1 L863.0,1248.1 L863.5,1248.1 L864.0,1248.1 L864.5,1248.1 L865.0,1248.1 L865.5,1248.1 L866.0,1248.1 L866.5,1248.1 L867.0,1248.2 L867.5,1248.2 L868.0,1248.2 L868.5,1248.2 L869.0,1248.2 L869.5,1248.2 L870.0,1248.2 L870.5,1248.2 L871.0,1248.2 L871.5,1248.2 L872.0,1248.3 L872.5,1248.3 L873.0,1248.3 L873.5,1248.3 L874.0,1248.3 L874.5,1248.3 L875.0,1248.3 L875.5,1248.3 L876.0,1248.3 L876.5,1248.3 L877.0,1248.3 L877.5,1248.4 L878.0,1248.4 L878.5,1248.4 L879.0,1248.4 L879.5,1248.4 L880.0,1248.4 L880.5,1248.4 L881.0,1248.4 L881.5,1248.4 L882.0,1248.4 L882.5,1248.4 L883.0,1248.4 L883.5,1248.5 L884.0,1248.5 L884.5,1248.5 L885.0,1248.5 L885.5,1248.5 L886.0,1248.5 L886.5,1248.5 L887.0,1248.5 L887.5,1248.5 L888.0,1248.5 L888.5,1248.5 L889.0,1248.5 L889.5,1248.5 L890.0,1248.5 L890.5,1248.5 L891.0,1248.5 L891.5,1248.6 L892.0,1248.6 L892.5,1248.6 L893.0,1248.6 L893.5,1248.6 L894.0,1248.6 L894.5,1248.6 L895.0,1248.6 L895.5,1248.6 L896.0,1248.6 L896.5,1248.6 L897.0,1248.6 L897.5,1248.6 L898.0,1248.6 L898.5,1248.6 L899.0,1248.6 L899.5,1248.6 L900.0,1248.6 L900.5,1248.6 L901.0,1248.6 L901.5,1248.7 L902.0,1248.7 L902.5,1248.7 L903.0,1248.7 L903.5,1248.7 L904.0,1248.7 L904.5,1248.7 L905.0,1248.7 L905.5,1248.7 L906.0,1248.7 L906.5,1248.7 L907.0,1248.7 L907.5,1248.7 L908.0,1248.7 L908.5,1248.7 L909.0,1248.7 L909.5,1248.7 L910.0,1248.7 L910.5,1248.7 L911.0,1248.7 L911.5,1248.7 L912.0,1248.7 L912.5,1248.7 L913.0,1248.7 L913.5,1248.7 L914.0,1248.7 L914.5,1248.7 L915.0,1248.7 L915.5,1248.7 L916.0,1248.7 L916.5,1248.7 L917.0,1248.7 L917.5,1248.7 L918.0,1248.7 L918.5,1248.7 L919.0,1248.7 L919.5,1248.7 L920.0,1248.7 L920.5,1248.7 L921.0,1248.7 L921.5,1248.7 L922.0,1248.7 L922.5,1248.7 L923.0,1248.7 L923.5,1248.7 L924.0,1248.7 L924.5,1248.7 L925.0,1248.7 L925.5,1248.7 L926.0,1248.7 L926.5,1248.7 L927.0,1248.7 L927.5,1248.7 L928.0,1248.7 L928.5,1248.7 L929.0,1248.7 L929.5,1248.7 L930.0,1248.7 L930.5,1248.7 L931.0,1248.7 L931.5,1248.7 L932.0,1248.7 L932.5,1248.7 L933.0,1248.7 L933.5,1248.7 L934.0,1248.7 L934.5,1248.7 L935.0,1248.7 L935.5,1248.7 L936.0,1248.7 L936.5,1248.7 L937.0,1248.7 L937.5,1248.7 L938.0,1248.7 L938.5,1248.7 L939.0,1248.7 L939.5,1248.7 L940.0,1248.7 L940.5,1248.7 L941.0,1248.7 L941.5,1248.7 L942.0,1248.7 L942.5,1248.7 L943.0,1248.7 L943.5,1248.7 L944.0,1248.7 L944.5,1248.7 L945.0,1248.7 L945.5,1248.7 L946.0,1248.7 L946.5,1248.7 L947.0,1248.7 L947.5,1248.7 L948.0,1248.7 L948.5,1248.7 L949.0,1248.7 L949.5,1248.7 L950.0,1248.7 L950.5,1248.6 L951.0,1248.6 L951.5,1248.6 L952.0,1248.6 L952.5,1248.6 L953.0,1248.6 L953.5,1248.6 L954.0,1248.6 L954.5,1248.6 L955.0,1248.6 L955.5,1248.6 L956.0,1248.6 L956.5,1248.6 L957.0,1248.6 L957.5,1248.6 L958.0,1248.6 L958.5,1248.6 L959.0,1248.6 L959.5,1248.6 L960.0,1248.6 L960.5,1248.6 L961.0,1248.6 L961.5,1248.5 L962.0,1248.5 L962.5,1248.5 L963.0,1248.5 L963.5,1248.5 L964.0,1248.5 L964.5,1248.5 L965.0,1248.5 L965.5,1248.5 L966.0,1248.5 L966.5,1248.5 L967.0,1248.5 L967.5,1248.5 L968.0,1248.5 L968.5,1248.5 L969.0,1248.5 L969.5,1248.5 L970.0,1248.4 L970.5,1248.4 L971.0,1248.4 L971.5,1248.4 L972.0,1248.4 L972.5,1248.4 L973.0,1248.4 L973.5,1248.4 L974.0,1248.4 L974.5,1248.4 L975.0,1248.4 L975.5,1248.4 L976.0,1248.4 L976.5,1248.4 L977.0,1248.3 L977.5,1248.3 L978.0,1248.3 L978.5,1248.3 L979.0,1248.3 L979.5,1248.3 L980.0,1248.3 L980.5,1248.3 L981.0,1248.3 L981.5,1248.3 L982.0,1248.3 L982.5,1248.3 L983.0,1248.3 L983.5,1248.2 L984.0,1248.2 L984.5,1248.2 L985.0,1248.2 L985.5,1248.2 L986.0,1248.2 L986.5,1248.2 L987.0,1248.2 L987.5,1248.2 L988.0,1248.2 L988.5,1248.2 L989.0,1248.1 L989.5,1248.1 L990.0,1248.1 L990.5,1248.1 L991.0,1248.1 L991.5,1248.1 L992.0,1248.1 L992.5,1248.1 L993.0,1248.1 L993.5,1248.1 L994.0,1248.1 L994.5,1248.0 L995.0,1248.0 L995.5,1248.0 L996.0,1248.0 L996.5,1248.0 L997.0,1248.0 L997.5,1248.0 L998.0,1248.0 L998.5,1248.0 L999.0,1248.0 L999.5,1247.9 L1000.0,1247.9 L1000.5,1247.9 L1001.0,1247.9 L1001.5,1247.9 L1002.0,1247.9 L1002.5,1247.9 L1003.0,1247.9 L1003.5,1247.9 L1004.0,1247.8 L1004.5,1247.8 L1005.0,1247.8 L1005.5,1247.8 L1006.0,1247.8 L1006.5,1247.8 L1007.0,1247.8 L1007.5,1247.8 L1008.0,1247.8 L1008.5,1247.7 L1009.0,1247.7 L1009.5,1247.7 L1010.0,1247.7 L1010.5,1247.7 L1011.0,1247.7 L1011.5,1247.7 L1012.0,1247.7 L1012.5,1247.6 L1013.0,1247.6 L1013.5,1247.6 L1014.0,1247.6 L1014.5,1247.6 L1015.0,1247.6 L1015.5,1247.6 L1016.0,1247.6 L1016.5,1247.5 L1017.0,1247.5 L1017.5,1247.5 L1018.0,1247.5 L1018.5,1247.5 L1019.0,1247.5 L1019.5,1247.5 L1020.0,1247.5 L1020.5,1247.4 L1021.0,1247.4 L1021.5,1247.4 L1022.0,1247.4 L1022.5,1247.4 L1023.0,1247.4 L1023.5,1247.4 L1024.0,1247.3 L1024.5,1247.3 L1025.0,1247.3 L1025.5,1247.3 L1026.0,1247.3 L1026.5,1247.3 L1027.0,1247.3 L1027.5,1247.3 L1028.0,1247.2 L1028.5,1247.2 L1029.0,1247.2 L1029.5,1247.2 L1030.0,1247.2 L1030.5,1247.2 L1031.0,1247.2 L1031.5,1247.1 L1032.0,1247.1 L1032.5,1247.1 L1033.0,1247.1 L1033.5,1247.1 L1034.0,1247.1 L1034.5,1247.0 L1035.0,1247.0 L1035.5,1247.0 L1036.0,1247.0 L1036.5,1247.0 L1037.0,1247.0 L1037.5,1247.0 L1038.0,1246.9 L1038.5,1246.9 L1039.0,1246.9 L1039.5,1246.9 L1040.0,1246.9 L1040.5,1246.9 L1041.0,1246.8 L1041.5,1246.8 L1042.0,1246.8 L1042.5,1246.8 L1043.0,1246.8 L1043.5,1246.8 L1044.0,1246.7 L1044.5,1246.7 L1045.0,1246.7 L1045.5,1246.7 L1046.0,1246.7 L1046.5,1246.7 L1047.0,1246.7 L1047.5,1246.6 L1048.0,1246.6 L1048.5,1246.6 L1049.0,1246.6 L1049.5,1246.6 L1050.0,1246.5 L1050.5,1246.5 L1051.0,1246.5 L1051.5,1246.5 L1052.0,1246.5 L1052.5,1246.5 L1053.0,1246.4 L1053.5,1246.4 L1054.0,1246.4 L1054.5,1246.4 L1055.0,1246.4 L1055.5,1246.4 L1056.0,1246.3 L1056.5,1246.3 L1057.0,1246.3 L1057.5,1246.3 L1058.0,1246.3 L1058.5,1246.3 L1059.0,1246.2 L1059.5,1246.2 L1060.0,1246.2 L1060.5,1246.2 L1061.0,1246.2 L1061.5,1246.1 L1062.0,1246.1 L1062.5,1246.1 L1063.0,1246.1 L1063.5,1246.1 L1064.0,1246.0 L1064.5,1246.0 L1065.0,1246.0 L1065.5,1246.0 L1066.0,1246.0 L1066.5,1246.0 L1067.0,1245.9 L1067.5,1245.9 L1068.0,1245.9 L1068.5,1245.9 L1069.0,1245.9 L1069.5,1245.8 L1070.0,1245.8 L1070.5,1245.8 L1071.0,1245.8 L1071.5,1245.8 L1072.0,1245.7 L1072.5,1245.7 L1073.0,1245.7 L1073.5,1245.7 L1074.0,1245.7 L1074.5,1245.6 L1075.0,1245.6 L1075.5,1245.6 L1076.0,1245.6 L1076.5,1245.6 L1077.0,1245.5 L1077.5,1245.5 L1078.0,1245.5 L1078.5,1245.5 L1079.0,1245.5 L1079.5,1245.4 L1080.0,1245.4 L1080.5,1245.4 L1081.0,1245.4 L1081.5,1245.4 L1082.0,1245.3 L1082.5,1245.3 L1083.0,1245.3 L1083.5,1245.3 L1084.0,1245.2 L1084.5,1245.2 L1085.0,1245.2 L1085.5,1245.2 L1086.0,1245.2 L1086.5,1245.1 L1087.0,1245.1 L1087.5,1245.1 L1088.0,1245.1 L1088.5,1245.0 L1089.0,1245.0 L1089.5,1245.0 L1090.0,1245.0 L1090.5,1245.0 L1091.0,1244.9 L1091.5,1244.9 L1092.0,1244.9 L1092.5,1244.9 L1093.0,1244.9 L1093.5,1244.8 L1094.0,1244.8 L1094.5,1244.8 L1095.0,1244.8 L1095.5,1244.7 L1096.0,1244.7 L1096.5,1244.7 L1097.0,1244.7 L1097.5,1244.6 L1098.0,1244.6 L1098.5,1244.6 L1099.0,1244.6 L1099.5,1244.6 L1100.0,1244.5 L1100.5,1244.5 L1101.0,1244.5 L1101.5,1244.5 L1102.0,1244.4 L1102.5,1244.4 L1103.0,1244.4 L1103.5,1244.4 L1104.0,1244.3 L1104.5,1244.3 L1105.0,1244.3 L1105.5,1244.3 L1106.0,1244.2 L1106.5,1244.2 L1107.0,1244.2 L1107.5,1244.2 L1108.0,1244.1 L1108.5,1244.1 L1109.0,1244.1 L1109.5,1244.1 L1110.0,1244.1 L1110.5,1244.0 L1111.0,1244.0 L1111.5,1244.0 L1112.0,1244.0 L1112.5,1243.9 L1113.0,1243.9 L1113.5,1243.9 L1114.0,1243.9 L1114.5,1243.8 L1115.0,1243.8 L1115.5,1243.8 L1116.0,1243.8 L1116.5,1243.7 L1117.0,1243.7 L1117.5,1243.7 L1118.0,1243.7 L1118.5,1243.6 L1119.0,1243.6 L1119.5,1243.6 L1120.0,1243.5 L1120.5,1243.5 L1121.0,1243.5 L1121.5,1243.5 L1122.0,1243.4 L1122.5,1243.4 L1123.0,1243.4 L1123.5,1243.4 L1124.0,1243.3 L1124.5,1243.3 L1125.0,1243.3 L1125.5,1243.3 L1126.0,1243.2 L1126.5,1243.2 L1127.0,1243.2 L1127.5,1243.2 L1128.0,1243.1 L1128.5,1243.1 L1129.0,1243.1 L1129.5,1243.1 L1130.0,1243.0 L1130.5,1243.0 L1131.0,1243.0 L1131.5,1242.9 L1132.0,1242.9 L1132.5,1242.9 L1133.0,1242.9 L1133.5,1242.8 L1134.0,1242.8 L1134.5,1242.8 L1135.0,1242.8 L1135.5,1242.7 L1136.0,1242.7 L1136.5,1242.7 L1137.0,1242.6 L1137.5,1242.6 L1138.0,1242.6 L1138.5,1242.6 L1139.0,1242.5 L1139.5,1242.5 L1140.0,1242.5 L1140.5,1242.4 L1141.0,1242.4 L1141.5,1242.4 L1142.0,1242.4 L1142.5,1242.3 L1143.0,1242.3 L1143.5,1242.3 L1144.0,1242.2 L1144.5,1242.2 L1145.0,1242.2 L1145.5,1242.2 L1146.0,1242.1 L1146.5,1242.1 L1147.0,1242.1 L1147.5,1242.0 L1148.0,1242.0 L1148.5,1242.0 L1149.0,1242.0 L1149.5,1241.9 L1150.0,1241.9 L1150.5,1241.9 L1151.0,1241.8 L1151.5,1241.8 L1152.0,1241.8 L1152.5,1241.8 L1153.0,1241.7 L1153.5,1241.7 L1154.0,1241.7 L1154.5,1241.6 L1155.0,1241.6 L1155.5,1241.6 L1156.0,1241.6 L1156.5,1241.5 L1157.0,1241.5 L1157.5,1241.5 L1158.0,1241.4 L1158.5,1241.4 L1159.0,1241.4 L1159.5,1241.3 L1160.0,1241.3 L1160.5,1241.3 L1161.0,1241.3 L1161.5,1241.2 L1162.0,1241.2 L1162.5,1241.2 L1163.0,1241.1 L1163.5,1241.1 L1164.0,1241.1 L1164.5,1241.0 L1165.0,1241.0 L1165.5,1241.0 L1166.0,1240.9 L1166.5,1240.9 L1167.0,1240.9 L1167.5,1240.9 L1168.0,1240.8 L1168.5,1240.8 L1169.0,1240.8 L1169.5,1240.7 L1170.0,1240.7 L1170.5,1240.7 L1171.0,1240.6 L1171.5,1240.6 L1172.0,1240.6 L1172.5,1240.5 L1173.0,1240.5 L1173.5,1240.5 L1174.0,1240.4 L1174.5,1240.4 L1175.0,1240.4 L1175.5,1240.4 L1176.0,1240.3 L1176.5,1240.3 L1177.0,1240.3 L1177.5,1240.2 L1178.0,1240.2 L1178.5,1240.2 L1179.0,1240.1 L1179.5,1240.1 L1180.0,1240.1 L1180.5,1240.0 L1181.0,1240.0 L1181.5,1240.0 L1182.0,1239.9 L1182.5,1239.9 L1183.0,1239.9 L1183.5,1239.8 L1184.0,1239.8 L1184.5,1239.8 L1185.0,1239.7 L1185.5,1239.7 L1186.0,1239.7 L1186.5,1239.6 L1187.0,1239.6 L1187.5,1239.6 L1188.0,1239.5 L1188.5,1239.5 L1189.0,1239.5 L1189.5,1239.5 L1190.0,1239.4 L1190.5,1239.4 L1191.0,1239.4 L1191.5,1239.3 L1192.0,1239.3 L1192.5,1239.3 L1193.0,1239.2 L1193.5,1239.2 L1194.0,1239.2 L1194.5,1239.1 L1195.0,1239.1 L1195.5,1239.1 L1196.0,1239.0 L1196.5,1239.0 L1197.0,1239.0 L1197.5,1238.9 L1198.0,1238.9 L1198.5,1238.9 L1199.0,1238.8 L1199.5,1238.8 L1200.0,1238.8 L1200.5,1238.7 L1201.0,1238.7 L1201.5,1238.7 L1202.0,1238.6 L1202.5,1238.6 L1203.0,1238.5 L1203.5,1238.5 L1204.0,1238.5 L1204.5,1238.4 L1205.0,1238.4 L1205.5,1238.4 L1206.0,1238.3 L1206.5,1238.3 L1207.0,1238.3 L1207.5,1238.2 L1208.0,1238.2 L1208.5,1238.2 L1209.0,1238.1 L1209.5,1238.1 L1210.0,1238.1 L1210.5,1238.0 L1211.0,1238.0 L1211.5,1238.0 L1212.0,1237.9 L1212.5,1237.9 L1213.0,1237.9 L1213.5,1237.8 L1214.0,1237.8 L1214.5,1237.8 L1215.0,1237.7 L1215.5,1237.7 L1216.0,1237.7 L1216.5,1237.6 L1217.0,1237.6 L1217.5,1237.6 L1218.0,1237.5 L1218.5,1237.5 L1219.0,1237.4 L1219.5,1237.4 L1220.0,1237.4 L1220.5,1237.3 L1221.0,1237.3 L1221.5,1237.3 L1222.0,1237.2 L1222.5,1237.2 L1223.0,1237.2 L1223.5,1237.1 L1224.0,1237.1 L1224.5,1237.1 L1225.0,1237.0 L1225.5,1237.0 L1226.0,1237.0 L1226.5,1236.9 L1227.0,1236.9 L1227.5,1236.9 L1228.0,1236.8 L1228.5,1236.8 L1229.0,1236.7 L1229.5,1236.7 L1230.0,1236.7 L1230.5,1236.6 L1231.0,1236.6 L1231.5,1236.6 L1232.0,1236.5 L1232.5,1236.5 L1233.0,1236.5 L1233.5,1236.4 L1234.0,1236.4 L1234.5,1236.4 L1235.0,1236.3 L1235.5,1236.3 L1236.0,1236.3 L1236.5,1236.2 L1237.0,1236.2 L1237.5,1236.1 L1238.0,1236.1 L1238.5,1236.1 L1239.0,1236.0 L1239.5,1236.0 L1240.0,1236.0 L1240.5,1235.9 L1241.0,1235.9 L1241.5,1235.9 L1242.0,1235.8 L1242.5,1235.8 L1243.0,1235.7 L1243.5,1235.7 L1244.0,1235.7 L1244.5,1235.6 L1245.0,1235.6 L1245.5,1235.6 L1246.0,1235.5 L1246.5,1235.5 L1247.0,1235.5 L1247.5,1235.4 L1248.0,1235.4 L1248.5,1235.4 L1249.0,1235.3 L1249.5,1235.3 L1250.0,1235.2 L1250.5,1235.2 L1251.0,1235.2 L1251.5,1235.1 L1252.0,1235.1 L1252.5,1235.1 L1253.0,1235.0 L1253.5,1235.0 L1254.0,1235.0 L1254.5,1234.9 L1255.0,1234.9 L1255.5,1234.8 L1256.0,1234.8 L1256.5,1234.8 L1257.0,1234.7 L1257.5,1234.7 L1258.0,1234.7 L1258.5,1234.6 L1259.0,1234.6 L1259.5,1234.6 L1260.0,1234.5 L1260.5,1234.5 L1261.0,1234.4 L1261.5,1234.4 L1262.0,1234.4 L1262.5,1234.3 L1263.0,1234.3 L1263.5,1234.3 L1264.0,1234.2 L1264.5,1234.2 L1265.0,1234.1 L1265.5,1234.1 L1266.0,1234.1 L1266.5,1234.0 L1267.0,1234.0 L1267.5,1234.0 L1268.0,1233.9 L1268.5,1233.9 L1269.0,1233.9 L1269.5,1233.8 L1270.0,1233.8 L1270.5,1233.7 L1271.0,1233.7 L1271.5,1233.7 L1272.0,1233.6 L1272.5,1233.6 L1273.0,1233.6 L1273.5,1233.5 L1274.0,1233.5 L1274.5,1233.4 L1275.0,1233.4 L1275.5,1233.4 L1276.0,1233.3 L1276.5,1233.3 L1277.0,1233.3 L1277.5,1233.2 L1278.0,1233.2 L1278.5,1233.1 L1279.0,1233.1 L1279.5,1233.1 L1280.0,1233.0 L1280.5,1233.0 L1281.0,1233.0 L1281.5,1232.9 L1282.0,1232.9 L1282.5,1232.8 L1283.0,1232.8 L1283.5,1232.8 L1284.0,1232.7 L1284.5,1232.7 L1285.0,1232.7 L1285.5,1232.6 L1286.0,1232.6 L1286.5,1232.5 L1287.0,1232.5 L1287.5,1232.5 L1288.0,1232.4 L1288.5,1232.4 L1289.0,1232.4 L1289.5,1232.3 L1290.0,1232.3 L1290.5,1232.2 L1291.0,1232.2 L1291.5,1232.2 L1292.0,1232.1 L1292.5,1232.1 L1293.0,1232.0 L1293.5,1232.0 L1294.0,1232.0 L1294.5,1231.9 L1295.0,1231.9 L1295.5,1231.9 L1296.0,1231.8 L1296.5,1231.8 L1297.0,1231.7 L1297.5,1231.7 L1298.0,1231.7 L1298.5,1231.6 L1299.0,1231.6 L1299.5,1231.6 L1300.0,1231.5 L1300.5,1231.5 L1301.0,1231.4 L1301.5,1231.4 L1302.0,1231.4 L1302.5,1231.3 L1303.0,1231.3 L1303.5,1231.2 L1304.0,1231.2 L1304.5,1231.2 L1305.0,1231.1 L1305.5,1231.1 L1306.0,1231.0 L1306.5,1231.0 L1307.0,1231.0 L1307.5,1230.9 L1308.0,1230.9 L1308.5,1230.9 L1309.0,1230.8 L1309.5,1230.8 L1310.0,1230.7 L1310.5,1230.7 L1311.0,1230.7 L1311.5,1230.6 L1312.0,1230.6 L1312.5,1230.5 L1313.0,1230.5 L1313.5,1230.5 L1314.0,1230.4 L1314.5,1230.4 L1315.0,1230.3 L1315.5,1230.3 L1316.0,1230.3 L1316.5,1230.2 L1317.0,1230.2 L1317.5,1230.2 L1318.0,1230.1 L1318.5,1230.1 L1319.0,1230.0 L1319.5,1230.0 L1320.0,1230.0 L1320.5,1229.9 L1321.0,1229.9 L1321.5,1229.8 L1322.0,1229.8 L1322.5,1229.8 L1323.0,1229.7 L1323.5,1229.7 L1324.0,1229.6 L1324.5,1229.6 L1325.0,1229.6 L1325.5,1229.5 L1326.0,1229.5 L1326.5,1229.4 L1327.0,1229.4 L1327.5,1229.4 L1328.0,1229.3 L1328.5,1229.3 L1329.0,1229.2 L1329.5,1229.2 L1330.0,1229.2 L1330.5,1229.1 L1331.0,1229.1 L1331.5,1229.0 L1332.0,1229.0 L1332.5,1229.0 L1333.0,1228.9 L1333.5,1228.9 L1334.0,1228.8 L1334.5,1228.8 L1335.0,1228.8 L1335.5,1228.7 L1336.0,1228.7 L1336.5,1228.6 L1337.0,1228.6 L1337.5,1228.6 L1338.0,1228.5 L1338.5,1228.5 L1339.0,1228.4 L1339.5,1228.4 L1340.0,1228.4 L1340.5,1228.3 L1341.0,1228.3 L1341.5,1228.2 L1342.0,1228.2 L1342.5,1228.2 L1343.0,1228.1 L1343.5,1228.1 L1344.0,1228.0 L1344.5,1228.0 L1345.0,1227.9 L1345.5,1227.9 L1346.0,1227.9 L1346.5,1227.8 L1347.0,1227.8 L1347.5,1227.7 L1348.0,1227.7 L1348.5,1227.7 L1349.0,1227.6 L1349.5,1227.6 L1350.0,1227.5 L1350.5,1227.5 L1351.0,1227.5 L1351.5,1227.4 L1352.0,1227.4 L1352.5,1227.3 L1353.0,1227.3 L1353.5,1227.3 L1354.0,1227.2 L1354.5,1227.2 L1355.0,1227.1 L1355.5,1227.1 L1356.0,1227.0 L1356.5,1227.0 L1357.0,1227.0 L1357.5,1226.9 L1358.0,1226.9 L1358.5,1226.8 L1359.0,1226.8 L1359.5,1226.8 L1360.0,1226.7 L1360.5,1226.7 L1361.0,1226.6 L1361.5,1226.6 L1362.0,1226.5 L1362.5,1226.5 L1363.0,1226.5 L1363.5,1226.4 L1364.0,1226.4 L1364.5,1226.3 L1365.0,1226.3 L1365.5,1226.3 L1366.0,1226.2 L1366.5,1226.2 L1367.0,1226.1 L1367.5,1226.1 L1368.0,1226.0 L1368.5,1226.0 L1369.0,1226.0 L1369.5,1225.9 L1370.0,1225.9 L1370.5,1225.8 L1371.0,1225.8 L1371.5,1225.7 L1372.0,1225.7 L1372.5,1225.7 L1373.0,1225.6 L1373.5,1225.6 L1374.0,1225.5 L1374.5,1225.5 L1375.0,1225.4 L1375.5,1225.4 L1376.0,1225.4 L1376.5,1225.3 L1377.0,1225.3 L1377.5,1225.2 L1378.0,1225.2 L1378.5,1225.1 L1379.0,1225.1 L1379.5,1225.1 L1380.0,1225.0 L1380.5,1225.0 L1381.0,1224.9 L1381.5,1224.9 L1382.0,1224.8 L1382.5,1224.8 L1383.0,1224.8 L1383.5,1224.7 L1384.0,1224.7 L1384.5,1224.6 L1385.0,1224.6 L1385.5,1224.5 L1386.0,1224.5 L1386.5,1224.5 L1387.0,1224.4 L1387.5,1224.4 L1388.0,1224.3 L1388.5,1224.3 L1389.0,1224.2 L1389.5,1224.2 L1390.0,1224.2 L1390.5,1224.1 L1391.0,1224.1 L1391.5,1224.0 L1392.0,1224.0 L1392.5,1223.9 L1393.0,1223.9 L1393.5,1223.8 L1394.0,1223.8 L1394.5,1223.8 L1395.0,1223.7 L1395.5,1223.7 L1396.0,1223.6 L1396.5,1223.6 L1397.0,1223.5 L1397.5,1223.5 L1398.0,1223.5 L1398.5,1223.4 L1399.0,1223.4 L1399.5,1223.3 L1400.0,1223.3 L1400.5,1223.2 L1401.0,1223.2 L1401.5,1223.1 L1402.0,1223.1 L1402.5,1223.1 L1403.0,1223.0 L1403.5,1223.0 L1404.0,1222.9 L1404.5,1222.9 L1405.0,1222.8 L1405.5,1222.8 L1406.0,1222.7 L1406.5,1222.7 L1407.0,1222.7 L1407.5,1222.6 L1408.0,1222.6 L1408.5,1222.5 L1409.0,1222.5 L1409.5,1222.4 L1410.0,1222.4 L1410.5,1222.3 L1411.0,1222.3 L1411.5,1222.2 L1412.0,1222.2 L1412.5,1222.2 L1413.0,1222.1 L1413.5,1222.1 L1414.0,1222.0 L1414.5,1222.0 L1415.0,1221.9 L1415.5,1221.9 L1416.0,1221.8 L1416.5,1221.8 L1417.0,1221.7 L1417.5,1221.7 L1418.0,1221.7 L1418.5,1221.6 L1419.0,1221.6 L1419.5,1221.5 L1420.0,1221.5 L1420.5,1221.4 L1421.0,1221.4 L1421.5,1221.3 L1422.0,1221.3 L1422.5,1221.2 L1423.0,1221.2 L1423.5,1221.2 L1424.0,1221.1 L1424.5,1221.1 L1425.0,1221.0 L1425.5,1221.0 L1426.0,1220.9 L1426.5,1220.9 L1427.0,1220.8 L1427.5,1220.8 L1428.0,1220.7 L1428.5,1220.7 L1429.0,1220.6 L1429.5,1220.6 L1430.0,1220.5 L1430.5,1220.5 L1431.0,1220.5 L1431.5,1220.4 L1432.0,1220.4 L1432.5,1220.3 L1433.0,1220.3 L1433.5,1220.2 L1434.0,1220.2 L1434.5,1220.1 L1435.0,1220.1 L1435.5,1220.0 L1436.0,1220.0 L1436.5,1219.9 L1437.0,1219.9 L1437.5,1219.8 L1438.0,1219.8 L1438.5,1219.8 L1439.0,1219.7 L1439.5,1219.7 L1440.0,1219.6 L1440.5,1219.6 L1441.0,1219.5 L1441.5,1219.5 L1442.0,1219.4 L1442.5,1219.4 L1443.0,1219.3 L1443.5,1219.3 L1444.0,1219.2 L1444.5,1219.2 L1445.0,1219.1 L1445.5,1219.1 L1446.0,1219.0 L1446.5,1219.0 L1447.0,1218.9 L1447.5,1218.9 L1448.0,1218.8 L1448.5,1218.8 L1449.0,1218.7 L1449.5,1218.7 L1450.0,1218.6 L1450.5,1218.6 L1451.0,1218.6 L1451.5,1218.5 L1452.0,1218.5 L1452.5,1218.4 L1453.0,1218.4 L1453.5,1218.3 L1454.0,1218.3 L1454.5,1218.2 L1455.0,1218.2 L1455.5,1218.1 L1456.0,1218.1 L1456.5,1218.0 L1457.0,1218.0 L1457.5,1217.9 L1458.0,1217.9 L1458.5,1217.8 L1459.0,1217.8 L1459.5,1217.7 L1460.0,1217.7 L1460.5,1217.6 L1461.0,1217.6 L1461.5,1217.5 L1462.0,1217.5 L1462.5,1217.4 L1463.0,1217.4 L1463.5,1217.3 L1464.0,1217.3 L1464.5,1217.2 L1465.0,1217.2 L1465.5,1217.1 L1466.0,1217.1 L1466.5,1217.0 L1467.0,1217.0 L1467.5,1216.9 L1468.0,1216.9 L1468.5,1216.8 L1469.0,1216.8 L1469.5,1216.7 L1470.0,1216.7 L1470.5,1216.6 L1471.0,1216.6 L1471.5,1216.5 L1472.0,1216.5 L1472.5,1216.4 L1473.0,1216.4 L1473.5,1216.3 L1474.0,1216.3 L1474.5,1216.2 L1475.0,1216.2 L1475.5,1216.1 L1476.0,1216.1 L1476.5,1216.0 L1477.0,1216.0 L1477.5,1215.9 L1478.0,1215.9 L1478.5,1215.8 L1479.0,1215.8 L1479.5,1215.7 L1480.0,1215.7 L1480.5,1215.6 L1481.0,1215.6 L1481.5,1215.5 L1482.0,1215.4 L1482.5,1215.4 L1483.0,1215.3 L1483.5,1215.3 L1484.0,1215.2 L1484.5,1215.2 L1485.0,1215.1 L1485.5,1215.1 L1486.0,1215.0 L1486.5,1215.0 L1487.0,1214.9 L1487.5,1214.9 L1488.0,1214.8 L1488.5,1214.8 L1489.0,1214.7 L1489.5,1214.7 L1490.0,1214.6 L1490.5,1214.6 L1491.0,1214.5 L1491.5,1214.5 L1492.0,1214.4 L1492.5,1214.4 L1493.0,1214.3 L1493.5,1214.2 L1494.0,1214.2 L1494.5,1214.1 L1495.0,1214.1 L1495.5,1214.0 L1496.0,1214.0 L1496.5,1213.9 L1497.0,1213.9 L1497.5,1213.8 L1498.0,1213.8 L1498.5,1213.7 L1499.0,1213.7 L1499.5,1213.6 L1500.0,1213.6 L1500.5,1213.5 L1501.0,1213.4 L1501.5,1213.4 L1502.0,1213.3 L1502.5,1213.3 L1503.0,1213.2 L1503.5,1213.2 L1504.0,1213.1 L1504.5,1213.1 L1505.0,1213.0 L1505.5,1213.0 L1506.0,1212.9 L1506.5,1212.8 L1507.0,1212.8 L1507.5,1212.7 L1508.0,1212.7 L1508.5,1212.6 L1509.0,1212.6 L1509.5,1212.5 L1510.0,1212.5 L1510.5,1212.4 L1511.0,1212.4 L1511.5,1212.3 L1512.0,1212.2 L1512.5,1212.2 L1513.0,1212.1 L1513.5,1212.1 L1514.0,1212.0 L1514.5,1212.0 L1515.0,1211.9 L1515.5,1211.9 L1516.0,1211.8 L1516.5,1211.7 L1517.0,1211.7 L1517.5,1211.6 L1518.0,1211.6 L1518.5,1211.5 L1519.0,1211.5 L1519.5,1211.4 L1520.0,1211.3 L1520.5,1211.3 L1521.0,1211.2 L1521.5,1211.2 L1522.0,1211.1 L1522.5,1211.1 L1523.0,1211.0 L1523.5,1211.0 L1524.0,1210.9 L1524.5,1210.8 L1525.0,1210.8 L1525.5,1210.7 L1526.0,1210.7 L1526.5,1210.6 L1527.0,1210.6 L1527.5,1210.5 L1528.0,1210.4 L1528.5,1210.4 L1529.0,1210.3 L1529.5,1210.3 L1530.0,1210.2 L1530.5,1210.1 L1531.0,1210.1 L1531.5,1210.0 L1532.0,1210.0 L1532.5,1209.9 L1533.0,1209.9 L1533.5,1209.8 L1534.0,1209.7 L1534.5,1209.7 L1535.0,1209.6 L1535.5,1209.6 L1536.0,1209.5 L1536.5,1209.4 L1537.0,1209.4 L1537.5,1209.3 L1538.0,1209.3 L1538.5,1209.2 L1539.0,1209.2 L1539.5,1209.1 L1540.0,1209.0 L1540.5,1209.0 L1541.0,1208.9 L1541.5,1208.9 L1542.0,1208.8 L1542.5,1208.7 L1543.0,1208.7 L1543.5,1208.6 L1544.0,1208.6 L1544.5,1208.5 L1545.0,1208.4 L1545.5,1208.4 L1546.0,1208.3 L1546.5,1208.3 L1547.0,1208.2 L1547.5,1208.1 L1548.0,1208.1 L1548.5,1208.0 L1549.0,1208.0 L1549.5,1207.9 L1550.0,1207.8 L1550.5,1207.8 L1551.0,1207.7 L1551.5,1207.6 L1552.0,1207.6 L1552.5,1207.5 L1553.0,1207.5 L1553.5,1207.4 L1554.0,1207.3 L1554.5,1207.3 L1555.0,1207.2 L1555.5,1207.2 L1556.0,1207.1 L1556.5,1207.0 L1557.0,1207.0 L1557.5,1206.9 L1558.0,1206.8 L1558.5,1206.8 L1559.0,1206.7 L1559.5,1206.7 L1560.0,1206.6 L1560.5,1206.5 L1561.0,1206.5 L1561.5,1206.4 L1562.0,1206.3 L1562.5,1206.3 L1563.0,1206.2 L1563.5,1206.2 L1564.0,1206.1 L1564.5,1206.0 L1565.0,1206.0 L1565.5,1205.9 L1566.0,1205.8 L1566.5,1205.8 L1567.0,1205.7 L1567.5,1205.6 L1568.0,1205.6 L1568.5,1205.5 L1569.0,1205.5 L1569.5,1205.4 L1570.0,1205.3 L1570.5,1205.3 L1571.0,1205.2 L1571.5,1205.1 L1572.0,1205.1 L1572.5,1205.0 L1573.0,1204.9 L1573.5,1204.9 L1574.0,1204.8 L1574.5,1204.7 L1575.0,1204.7 L1575.5,1204.6 L1576.0,1204.6 L1576.5,1204.5 L1577.0,1204.4 L1577.5,1204.4 L1578.0,1204.3 L1578.5,1204.2 L1579.0,1204.2 L1579.5,1204.1 L1580.0,1204.0 L1580.5,1204.0 L1581.0,1203.9 L1581.5,1203.8 L1582.0,1203.8 L1582.5,1203.7 L1583.0,1203.6 L1583.5,1203.6 L1584.0,1203.5 L1584.5,1203.4 L1585.0,1203.4 L1585.5,1203.3 L1586.0,1203.2 L1586.5,1203.2 L1587.0,1203.1 L1587.5,1203.0 L1588.0,1203.0 L1588.5,1202.9 L1589.0,1202.8 L1589.5,1202.7 L1590.0,1202.7 L1590.5,1202.6 L1591.0,1202.5 L1591.5,1202.5 L1592.0,1202.4 L1592.5,1202.3 L1593.0,1202.3 L1593.5,1202.2 L1594.0,1202.1 L1594.5,1202.1 L1595.0,1202.0 L1595.5,1201.9 L1596.0,1201.9 L1596.5,1201.8 L1597.0,1201.7 L1597.5,1201.6 L1598.0,1201.6 L1598.5,1201.5 L1599.0,1201.4 L1599.5,1201.4 L1600.0,1201.3 L1600.5,1201.2 L1601.0,1201.2 L1601.5,1201.1 L1602.0,1201.0 L1602.5,1200.9 L1603.0,1200.9 L1603.5,1200.8 L1604.0,1200.7 L1604.5,1200.7 L1605.0,1200.6 L1605.5,1200.5 L1606.0,1200.4 L1606.5,1200.4 L1607.0,1200.3 L1607.5,1200.2 L1608.0,1200.2 L1608.5,1200.1 L1609.0,1200.0 L1609.5,1199.9 L1610.0,1199.9 L1610.5,1199.8 L1611.0,1199.7 L1611.5,1199.6 L1612.0,1199.6 L1612.5,1199.5 L1613.0,1199.4 L1613.5,1199.4 L1614.0,1199.3 L1614.5,1199.2 L1615.0,1199.1 L1615.5,1199.1 L1616.0,1199.0 L1616.5,1198.9 L1617.0,1198.8 L1617.5,1198.8 L1618.0,1198.7 L1618.5,1198.6 L1619.0,1198.5 L1619.5,1198.5 L1620.0,1198.4 L1620.5,1198.3 L1621.0,1198.2 L1621.5,1198.2 L1622.0,1198.1 L1622.5,1198.0 L1623.0,1197.9 L1623.5,1197.9 L1624.0,1197.8 L1624.5,1197.7 L1625.0,1197.6 L1625.5,1197.6 L1626.0,1197.5 L1626.5,1197.4 L1627.0,1197.3 L1627.5,1197.3 L1628.0,1197.2 L1628.5,1197.1 L1629.0,1197.0 L1629.5,1197.0 L1630.0,1196.9 L1630.5,1196.8 L1631.0,1196.7 L1631.5,1196.6 L1632.0,1196.6 L1632.5,1196.5 L1633.0,1196.4 L1633.5,1196.3 L1634.0,1196.3 L1634.5,1196.2 L1635.0,1196.1 L1635.5,1196.0 L1636.0,1195.9 L1636.5,1195.9 L1637.0,1195.8 L1637.5,1195.7 L1638.0,1195.6 L1638.5,1195.6 L1639.0,1195.5 L1639.5,1195.4 L1640.0,1195.3 L1640.5,1195.2 L1641.0,1195.2 L1641.5,1195.1 L1642.0,1195.0 L1642.5,1194.9 L1643.0,1194.9 L1643.5,1194.8 L1644.0,1194.7 L1644.5,1194.6 L1645.0,1194.5 L1645.5,1194.5 L1646.0,1194.4 L1646.5,1194.3 L1647.0,1194.2 L1647.5,1194.1 L1648.0,1194.1 L1648.5,1194.0 L1649.0,1193.9 L1649.5,1193.8 L1650.0,1193.8 L1650.5,1193.7 L1651.0,1193.6 L1651.5,1193.5 L1652.0,1193.4 L1652.5,1193.4 L1653.0,1193.3 L1653.5,1193.2 L1654.0,1193.1 L1654.5,1193.1 L1655.0,1193.0 L1655.5,1192.9 L1656.0,1192.8 L1656.5,1192.7 L1657.0,1192.7 L1657.5,1192.6 L1658.0,1192.5 L1658.5,1192.4 L1659.0,1192.4 L1659.5,1192.3 L1660.0,1192.2 L1660.5,1192.1 L1661.0,1192.0 L1661.5,1192.0 L1662.0,1191.9 L1662.5,1191.8 L1663.0,1191.7 L1663.5,1191.7 L1664.0,1191.6 L1664.5,1191.5 L1665.0,1191.4 L1665.5,1191.3 L1666.0,1191.3 L1666.5,1191.2 L1667.0,1191.1 L1667.5,1191.0 L1668.0,1191.0 L1668.5,1190.9 L1669.0,1190.8 L1669.5,1190.7 L1670.0,1190.7 L1670.5,1190.6 L1671.0,1190.5 L1671.5,1190.4 L1672.0,1190.4 L1672.5,1190.3 L1673.0,1190.2 L1673.5,1190.1 L1674.0,1190.1 L1674.5,1190.0 L1675.0,1189.9 L1675.5,1189.8 L1676.0,1189.8 L1676.5,1189.7 L1677.0,1189.6 L1677.5,1189.5 L1678.0,1189.5 L1678.5,1189.4 L1679.0,1189.3 L1679.5,1189.3 L1680.0,1189.2 L1680.5,1189.1 L1681.0,1189.0 L1681.5,1189.0 L1682.0,1188.9 L1682.5,1188.8 L1683.0,1188.7 L1683.5,1188.7 L1684.0,1188.6 L1684.5,1188.5 L1685.0,1188.5 L1685.5,1188.4 L1686.0,1188.3 L1686.5,1188.3 L1687.0,1188.2 L1687.5,1188.1 L1688.0,1188.0 L1688.5,1188.0 L1689.0,1187.9 L1689.5,1187.8 L1690.0,1187.8 L1690.5,1187.7 L1691.0,1187.6 L1691.5,1187.6 L1692.0,1187.5 L1692.5,1187.4 L1693.0,1187.4 L1693.5,1187.3 L1694.0,1187.2 L1694.5,1187.2 L1695.0,1187.1 L1695.5,1187.0 L1696.0,1187.0 L1696.5,1186.9 L1697.0,1186.8 L1697.5,1186.8 L1698.0,1186.7 L1698.5,1186.6 L1699.0,1186.6 L1699.5,1186.5 L1700.0,1186.4 L1700.5,1186.4 L1701.0,1186.3 L1701.5,1186.2 L1702.0,1186.2 L1702.5,1186.1 L1703.0,1186.0 L1703.5,1185.9 L1704.0,1185.9 L1704.5,1185.8 L1705.0,1185.7 L1705.5,1185.7 L1706.0,1185.6 L1706.5,1185.5 L1707.0,1185.4 L1707.5,1185.4 L1708.0,1185.3 L1708.5,1185.2 L1709.0,1185.1 L1709.5,1185.1 L1710.0,1185.0 L1710.5,1184.9 L1711.0,1184.8 L1711.5,1184.8 L1712.0,1184.7 L1712.5,1184.6 L1713.0,1184.5 L1713.5,1184.4 L1714.0,1184.4 L1714.5,1184.3 L1715.0,1184.2 L1715.5,1184.1 L1716.0,1184.0 L1716.5,1183.9 L1717.0,1183.8 L1717.5,1183.7 L1718.0,1183.6 L1718.5,1183.6 L1719.0,1183.5 L1719.5,1183.4 L1720.0,1183.3 L1720.5,1183.2 L1721.0,1183.1 L1721.5,1183.0 L1722.0,1182.9 L1722.5,1182.8 L1723.0,1182.7 L1723.5,1182.6 L1724.0,1182.4 L1724.5,1182.3 L1725.0,1182.2 L1725.5,1182.1 L1726.0,1182.0 L1726.5,1181.9 L1727.0,1181.8 L1727.5,1181.6 L1728.0,1181.5 L1728.5,1181.4 L1729.0,1181.3 L1729.5,1181.2 L1730.0,1181.0 L1730.5,1180.9 L1731.0,1180.8 L1731.5,1180.6 L1732.0,1180.5 L1732.5,1180.4 L1733.0,1180.2 L1733.5,1180.1 L1734.0,1180.0 L1734.5,1179.8 L1735.0,1179.7 L1735.5,1179.6 L1736.0,1179.4 L1736.5,1179.3 L1737.0,1179.1 L1737.5,1179.0 L1738.0,1178.9 L1738.5,1178.7 L1739.0,1178.6 L1739.5,1178.4 L1740.0,1178.3 L1740.5,1178.1 L1741.0,1178.0 L1741.5,1177.9 L1742.0,1177.7 L1742.5,1177.6 L1743.0,1177.4 L1743.5,1177.3 L1744.0,1177.1 L1744.5,1177.0 L1745.0,1176.9 L1745.5,1176.7 L1746.0,1176.6 L1746.5,1176.4 L1747.0,1176.3 L1747.5,1176.2 L1748.0,1176.0 L1748.5,1175.9 L1749.0,1175.7 L1749.5,1175.6 L1750.0,1175.5 L1750.5,1175.3 L1751.0,1175.2 L1751.5,1175.1 L1752.0,1174.9 L1752.5,1174.8 L1753.0,1174.7 L1753.5,1174.6 L1754.0,1174.4 L1754.5,1174.3 L1755.0,1174.2 L1755.5,1174.1 L1756.0,1174.0 L1756.5,1173.8 L1757.0,1173.7 L1757.5,1173.6 L1758.0,1173.5 L1758.5,1173.4 L1759.0,1173.3 L1759.5,1173.2 L1760.0,1173.1 L1760.5,1173.0 L1761.0,1172.9 L1761.5,1172.8 L1762.0,1172.7 L1762.5,1172.6 L1763.0,1172.5 L1763.5,1172.5 L1764.0,1172.4 L1764.5,1172.3 L1765.0,1172.2 L1765.5,1172.2 L1766.0,1172.1 L1766.5,1172.0 L1767.0,1172.0 L1767.5,1171.9 L1768.0,1171.9 L1768.5,1171.8 L1769.0,1171.8 L1769.5,1171.7 L1770.0,1171.7 L1770.5,1171.7 L1771.0,1171.6 L1771.5,1171.6 L1772.0,1171.6 L1772.5,1171.6 L1773.0,1171.5 L1773.5,1171.5 L1774.0,1171.5 L1774.5,1171.5 L1775.0,1171.5 L1775.5,1171.5 L1776.0,1171.5 L1776.5,1171.5 L1777.0,1171.6 L1777.5,1171.6 L1778.0,1171.6 L1778.5,1171.6 L1779.0,1171.6 L1779.5,1171.7 L1780.0,1171.7 L1780.5,1171.7 L1781.0,1171.7 L1781.5,1171.8 L1782.0,1171.8 L1782.5,1171.8 L1783.0,1171.9 L1783.5,1171.9 L1784.0,1172.0 L1784.5,1172.0 L1785.0,1172.0 L1785.5,1172.1 L1786.0,1172.1 L1786.5,1172.2 L1787.0,1172.2 L1787.5,1172.2 L1788.0,1172.3 L1788.5,1172.3 L1789.0,1172.4 L1789.5,1172.4 L1790.0,1172.4 L1790.5,1172.5 L1791.0,1172.5 L1791.5,1172.6 L1792.0,1172.6 L1792.5,1172.6 L1793.0,1172.7 L1793.5,1172.7 L1794.0,1172.7 L1794.5,1172.8 L1795.0,1172.8 L1795.5,1172.8 L1796.0,1172.9 L1796.5,1172.9 L1797.0,1172.9 L1797.5,1172.9 L1798.0,1172.9 L1798.5,1173.0 L1799.0,1173.0 L1799.5,1173.0 L1800.0,1173.0 L1800.5,1173.0 L1801.0,1173.0 L1801.5,1173.0 L1802.0,1173.0 L1802.5,1173.0 L1803.0,1172.9 L1803.5,1172.9 L1804.0,1172.9 L1804.5,1172.9 L1805.0,1172.9 L1805.5,1172.8 L1806.0,1172.8 L1806.5,1172.8 L1807.0,1172.7 L1807.5,1172.7 L1808.0,1172.6 L1808.5,1172.6 L1809.0,1172.5 L1809.5,1172.5 L1810.0,1172.4 L1810.5,1172.4 L1811.0,1172.3 L1811.5,1172.2 L1812.0,1172.2 L1812.5,1172.1 L1813.0,1172.0 L1813.5,1172.0 L1814.0,1171.9 L1814.5,1171.8 L1815.0,1171.7 L1815.5,1171.6 L1816.0,1171.5 L1816.5,1171.5 L1817.0,1171.4 L1817.5,1171.3 L1818.0,1171.2 L1818.5,1171.1 L1819.0,1171.0 L1819.5,1170.9 L1820.0,1170.8 L1820.5,1170.7 L1821.0,1170.6 L1821.5,1170.5 L1822.0,1170.4 L1822.5,1170.2 L1823.0,1170.1 L1823.5,1170.0 L1824.0,1169.9 L1824.5,1169.8 L1825.0,1169.7 L1825.5,1169.5 L1826.0,1169.4 L1826.5,1169.3 L1827.0,1169.2 L1827.5,1169.0 L1828.0,1168.9 L1828.5,1168.8 L1829.0,1168.7 L1829.5,1168.5 L1830.0,1168.4 L1830.5,1168.3 L1831.0,1168.1 L1831.5,1168.0 L1832.0,1167.9 L1832.5,1167.7 L1833.0,1167.6 L1833.5,1167.4 L1834.0,1167.3 L1834.5,1167.2 L1835.0,1167.0 L1835.5,1166.9 L1836.0,1166.7 L1836.5,1166.6 L1837.0,1166.5 L1837.5,1166.3 L1838.0,1166.2 L1838.5,1166.0 L1839.0,1165.9 L1839.5,1165.7 L1840.0,1165.6 L1840.5,1165.4 L1841.0,1165.3 L1841.5,1165.2 L1842.0,1165.0 L1842.5,1164.9 L1843.0,1164.7 L1843.5,1164.6 L1844.0,1164.4 L1844.5,1164.3 L1845.0,1164.1 L1845.5,1164.0 L1846.0,1163.9 L1846.5,1163.7 L1847.0,1163.6 L1847.5,1163.4 L1848.0,1163.3 L1848.5,1163.1 L1849.0,1163.0 L1849.5,1162.9 L1850.0,1162.7 L1850.5,1162.6 L1851.0,1162.5 L1851.5,1162.3 L1852.0,1162.2 L1852.5,1162.1 L1853.0,1161.9 L1853.5,1161.8 L1854.0,1161.7 L1854.5,1161.5 L1855.0,1161.4 L1855.5,1161.3 L1856.0,1161.2 L1856.5,1161.0 L1857.0,1160.9 L1857.5,1160.8 L1858.0,1160.7 L1858.5,1160.6 L1859.0,1160.4 L1859.5,1160.3 L1860.0,1160.2 L1860.5,1160.1 L1861.0,1160.0 L1861.5,1159.9 L1862.0,1159.8 L1862.5,1159.7 L1863.0,1159.5 L1863.5,1159.4 L1864.0,1159.3 L1864.5,1159.2 L1865.0,1159.1 L1865.5,1159.0 L1866.0,1158.9 L1866.5,1158.8 L1867.0,1158.7 L1867.5,1158.6 L1868.0,1158.5 L1868.5,1158.4 L1869.0,1158.3 L1869.5,1158.2 L1870.0,1158.1 L1870.5,1158.0 L1871.0,1157.9 L1871.5,1157.8 L1872.0,1157.7 L1872.5,1157.6 L1873.0,1157.5 L1873.5,1157.4 L1874.0,1157.3 L1874.5,1157.2 L1875.0,1157.1 L1875.5,1157.0 L1876.0,1156.9 L1876.5,1156.8 L1877.0,1156.7 L1877.5,1156.6 L1878.0,1156.5 L1878.5,1156.3 L1879.0,1156.2 L1879.5,1156.1 L1880.0,1156.0 L1880.5,1155.9 L1881.0,1155.8 L1881.5,1155.7 L1882.0,1155.6 L1882.5,1155.5 L1883.0,1155.4 L1883.5,1155.3 L1884.0,1155.2 L1884.5,1155.0 L1885.0,1154.9 L1885.5,1154.8 L1886.0,1154.7 L1886.5,1154.6 L1887.0,1154.5 L1887.5,1154.3 L1888.0,1154.2 L1888.5,1154.1 L1889.0,1154.0 L1889.5,1153.8 L1890.0,1153.7 L1890.5,1153.6 L1891.0,1153.4 L1891.5,1153.3 L1892.0,1153.2 L1892.5,1153.0 L1893.0,1152.9 L1893.5,1152.8 L1894.0,1152.6 L1894.5,1152.5 L1895.0,1152.3 L1895.5,1152.2 L1896.0,1152.0 L1896.5,1151.9 L1897.0,1151.7 L1897.5,1151.6 L1898.0,1151.4 L1898.5,1151.2 L1899.0,1151.1 L1899.5,1150.9 L1900.0,1150.7 L1900.5,1150.6 L1901.0,1150.4 L1901.5,1150.2 L1902.0,1150.0 L1902.5,1149.8 L1903.0,1149.7 L1903.5,1149.5 L1904.0,1149.3 L1904.5,1149.1 L1905.0,1148.9 L1905.5,1148.7 L1906.0,1148.5 L1906.5,1148.3 L1907.0,1148.1 L1907.5,1147.9 L1908.0,1147.7 L1908.5,1147.5 L1909.0,1147.3 L1909.5,1147.1 L1910.0,1146.8 L1910.5,1146.6 L1911.0,1146.4 L1911.5,1146.2 L1912.0,1146.0 L1912.5,1145.8 L1913.0,1145.6 L1913.5,1145.3 L1914.0,1145.1 L1914.5,1144.9 L1915.0,1144.7 L1915.5,1144.5 L1916.0,1144.3 L1916.5,1144.0 L1917.0,1143.8 L1917.5,1143.6 L1918.0,1143.4 L1918.5,1143.2 L1919.0,1143.0 L1919.5,1142.7 L1920.0,1142.5 L1920.5,1142.3 L1921.0,1142.1 L1921.5,1141.9 L1922.0,1141.7 L1922.5,1141.5 L1923.0,1141.3 L1923.5,1141.1 L1924.0,1140.9 L1924.5,1140.7 L1925.0,1140.5 L1925.5,1140.3 L1926.0,1140.1 L1926.5,1139.9 L1927.0,1139.8 L1927.5,1139.6 L1928.0,1139.4 L1928.5,1139.2 L1929.0,1139.0 L1929.5,1138.9 L1930.0,1138.7 L1930.5,1138.6 L1931.0,1138.4 L1931.5,1138.2 L1932.0,1138.1 L1932.5,1138.0 L1933.0,1137.8 L1933.5,1137.7 L1934.0,1137.5 L1934.5,1137.4 L1935.0,1137.3 L1935.5,1137.1 L1936.0,1137.0 L1936.5,1136.9 L1937.0,1136.8 L1937.5,1136.7 L1938.0,1136.6 L1938.5,1136.5 L1939.0,1136.3 L1939.5,1136.2 L1940.0,1136.1 L1940.5,1136.0 L1941.0,1136.0 L1941.5,1135.9 L1942.0,1135.8 L1942.5,1135.7 L1943.0,1135.6 L1943.5,1135.5 L1944.0,1135.4 L1944.5,1135.4 L1945.0,1135.3 L1945.5,1135.2 L1946.0,1135.1 L1946.5,1135.1 L1947.0,1135.0 L1947.5,1134.9 L1948.0,1134.9 L1948.5,1134.8 L1949.0,1134.8 L1949.5,1134.7 L1950.0,1134.7 L1950.5,1134.6 L1951.0,1134.5 L1951.5,1134.5 L1952.0,1134.5 L1952.5,1134.4 L1953.0,1134.4 L1953.5,1134.3 L1954.0,1134.3 L1954.5,1134.2 L1955.0,1134.2 L1955.5,1134.2 L1956.0,1134.1 L1956.5,1134.1 L1957.0,1134.0 L1957.5,1134.0 L1958.0,1134.0 L1958.5,1133.9 L1959.0,1133.9 L1959.5,1133.9 L1960.0,1133.8 L1960.5,1133.8 L1961.0,1133.8 L1961.5,1133.8 L1962.0,1133.7 L1962.5,1133.7 L1963.0,1133.7 L1963.5,1133.6 L1964.0,1133.6 L1964.5,1133.6 L1965.0,1133.6 L1965.5,1133.5 L1966.0,1133.5 L1966.5,1133.5 L1967.0,1133.5 L1967.5,1133.4 L1968.0,1133.4 L1968.5,1133.4 L1969.0,1133.4 L1969.5,1133.3 L1970.0,1133.3 L1970.5,1133.3 L1971.0,1133.2 L1971.5,1133.2 L1972.0,1133.2 L1972.5,1133.2 L1973.0,1133.1 L1973.5,1133.1 L1974.0,1133.1 L1974.5,1133.0 L1975.0,1133.0 L1975.5,1132.9 L1976.0,1132.9 L1976.5,1132.9 L1977.0,1132.8 L1977.5,1132.8 L1978.0,1132.8 L1978.5,1132.7 L1979.0,1132.7 L1979.5,1132.6 L1980.0,1132.6 L1980.5,1132.5 L1981.0,1132.5 L1981.5,1132.4 L1982.0,1132.4 L1982.5,1132.3 L1983.0,1132.3 L1983.5,1132.2 L1984.0,1132.1 L1984.5,1132.1 L1985.0,1132.0 L1985.5,1132.0 L1986.0,1131.9 L1986.5,1131.8 L1987.0,1131.8 L1987.5,1131.7 L1988.0,1131.6 L1988.5,1131.5 L1989.0,1131.5 L1989.5,1131.4 L1990.0,1131.3 L1990.5,1131.2 L1991.0,1131.2 L1991.5,1131.1 L1992.0,1131.0 L1992.5,1130.9 L1993.0,1130.8 L1993.5,1130.8 L1994.0,1130.7 L1994.5,1130.6 L1995.0,1130.5 L1995.5,1130.4 L1996.0,1130.3 L1996.5,1130.2 L1997.0,1130.1 L1997.5,1130.0 L1998.0,1130.0 L1998.5,1129.9 L1999.0,1129.8 L1999.5,1129.7 L2000.0,1129.6 L2000.5,1129.5 L2001.0,1129.4 L2001.5,1129.3 L2002.0,1129.2 L2002.5,1129.1 L2003.0,1129.0 L2003.5,1128.8 L2004.0,1128.7 L2004.5,1128.6 L2005.0,1128.5 L2005.5,1128.4 L2006.0,1128.3 L2006.5,1128.2 L2007.0,1128.1 L2007.5,1128.0 L2008.0,1127.8 L2008.5,1127.7 L2009.0,1127.6 L2009.5,1127.5 L2010.0,1127.4 L2010.5,1127.3 L2011.0,1127.1 L2011.5,1127.0 L2012.0,1126.9 L2012.5,1126.8 L2013.0,1126.6 L2013.5,1126.5 L2014.0,1126.4 L2014.5,1126.3 L2015.0,1126.1 L2015.5,1126.0 L2016.0,1125.9 L2016.5,1125.8 L2017.0,1125.6 L2017.5,1125.5 L2018.0,1125.4 L2018.5,1125.2 L2019.0,1125.1 L2019.5,1125.0 L2020.0,1124.8 L2020.5,1124.7 L2021.0,1124.6 L2021.5,1124.4 L2022.0,1124.3 L2022.5,1124.2 L2023.0,1124.0 L2023.5,1123.9 L2024.0,1123.7 L2024.5,1123.6 L2025.0,1123.5 L2025.5,1123.3 L2026.0,1123.2 L2026.5,1123.0 L2027.0,1122.9 L2027.5,1122.8 L2028.0,1122.6 L2028.5,1122.5 L2029.0,1122.3 L2029.5,1122.2 L2030.0,1122.0 L2030.5,1121.9 L2031.0,1121.8 L2031.5,1121.6 L2032.0,1121.5 L2032.5,1121.3 L2033.0,1121.2 L2033.5,1121.0 L2034.0,1120.9 L2034.5,1120.7 L2035.0,1120.6 L2035.5,1120.4 L2036.0,1120.3 L2036.5,1120.1 L2037.0,1120.0 L2037.5,1119.8 L2038.0,1119.7 L2038.5,1119.5 L2039.0,1119.4 L2039.5,1119.2 L2040.0,1119.1 L2040.5,1118.9 L2041.0,1118.8 L2041.5,1118.6 L2042.0,1118.5 L2042.5,1118.3 L2043.0,1118.2 L2043.5,1118.0 L2044.0,1117.9 L2044.5,1117.7 L2045.0,1117.6 L2045.5,1117.4 L2046.0,1117.3 L2046.5,1117.1 L2047.0,1117.0 L2047.5,1116.8 L2048.0,1116.6 L2048.5,1116.5 L2049.0,1116.3 L2049.5,1116.2 L2050.0,1116.0 L2050.5,1115.9 L2051.0,1115.7 L2051.5,1115.6 L2052.0,1115.4 L2052.5,1115.3 L2053.0,1115.1 L2053.5,1115.0 L2054.0,1114.8 L2054.5,1114.7 L2055.0,1114.5 L2055.5,1114.4 L2056.0,1114.2 L2056.5,1114.1 L2057.0,1113.9 L2057.5,1113.8 L2058.0,1113.6 L2058.5,1113.5 L2059.0,1113.3 L2059.5,1113.2 L2060.0,1113.0 L2060.5,1112.9 L2061.0,1112.7 L2061.5,1112.6 L2062.0,1112.4 L2062.5,1112.2 L2063.0,1112.1 L2063.5,1111.9 L2064.0,1111.8 L2064.5,1111.6 L2065.0,1111.5 L2065.5,1111.3 L2066.0,1111.2 L2066.5,1111.0 L2067.0,1110.9 L2067.5,1110.7 L2068.0,1110.6 L2068.5,1110.4 L2069.0,1110.3 L2069.5,1110.1 L2070.0,1110.0 L2070.5,1109.8 L2071.0,1109.7 L2071.5,1109.5 L2072.0,1109.4 L2072.5,1109.2 L2073.0,1109.1 L2073.5,1108.9 L2074.0,1108.8 L2074.5,1108.6 L2075.0,1108.5 L2075.5,1108.3 L2076.0,1108.2 L2076.5,1108.0 L2077.0,1107.9 L2077.5,1107.7 L2078.0,1107.6 L2078.5,1107.4 L2079.0,1107.3 L2079.5,1107.1 L2080.0,1106.9 L2080.5,1106.8 L2081.0,1106.6 L2081.5,1106.5 L2082.0,1106.3 L2082.5,1106.2 L2083.0,1106.0 L2083.5,1105.9 L2084.0,1105.7 L2084.5,1105.6 L2085.0,1105.4 L2085.5,1105.3 L2086.0,1105.1 L2086.5,1105.0 L2087.0,1104.8 L2087.5,1104.7 L2088.0,1104.5 L2088.5,1104.4 L2089.0,1104.2 L2089.5,1104.1 L2090.0,1103.9 L2090.5,1103.8 L2091.0,1103.6 L2091.5,1103.5 L2092.0,1103.3 L2092.5,1103.2 L2093.0,1103.0 L2093.5,1102.9 L2094.0,1102.7 L2094.5,1102.6 L2095.0,1102.4 L2095.5,1102.3 L2096.0,1102.1 L2096.5,1102.0 L2097.0,1101.8 L2097.5,1101.6 L2098.0,1101.5 L2098.5,1101.3 L2099.0,1101.2 L2099.5,1101.0 L2100.0,1100.9 L2100.5,1100.7 L2101.0,1100.6 L2101.5,1100.4 L2102.0,1100.3 L2102.5,1100.1 L2103.0,1100.0 L2103.5,1099.8 L2104.0,1099.7 L2104.5,1099.5 L2105.0,1099.4 L2105.5,1099.2 L2106.0,1099.1 L2106.5,1098.9 L2107.0,1098.8 L2107.5,1098.6 L2108.0,1098.5 L2108.5,1098.3 L2109.0,1098.2 L2109.5,1098.0 L2110.0,1097.9 L2110.5,1097.7 L2111.0,1097.6 L2111.5,1097.4 L2112.0,1097.2 L2112.5,1097.1 L2113.0,1096.9 L2113.5,1096.8 L2114.0,1096.6 L2114.5,1096.5 L2115.0,1096.3 L2115.5,1096.2 L2116.0,1096.0 L2116.5,1095.9 L2117.0,1095.7 L2117.5,1095.6 L2118.0,1095.4 L2118.5,1095.3 L2119.0,1095.1 L2119.5,1095.0 L2120.0,1094.8 L2120.5,1094.7 L2121.0,1094.5 L2121.5,1094.4 L2122.0,1094.2 L2122.5,1094.0 L2123.0,1093.9 L2123.5,1093.7 L2124.0,1093.6 L2124.5,1093.4 L2125.0,1093.3 L2125.5,1093.1 L2126.0,1093.0 L2126.5,1092.8 L2127.0,1092.7 L2127.5,1092.5 L2128.0,1092.4 L2128.5,1092.2 L2129.0,1092.1 L2129.5,1091.9 L2130.0,1091.8 L2130.5,1091.6 L2131.0,1091.5 L2131.5,1091.3 L2132.0,1091.1 L2132.5,1091.0 L2133.0,1090.8 L2133.5,1090.7 L2134.0,1090.5 L2134.5,1090.4 L2135.0,1090.2 L2135.5,1090.1 L2136.0,1089.9 L2136.5,1089.8 L2137.0,1089.6 L2137.5,1089.5 L2138.0,1089.3 L2138.5,1089.1 L2139.0,1089.0 L2139.5,1088.8 L2140.0,1088.7 L2140.5,1088.5 L2141.0,1088.4 L2141.5,1088.2 L2142.0,1088.1 L2142.5,1087.9 L2143.0,1087.8 L2143.5,1087.6 L2144.0,1087.5 L2144.5,1087.3 L2145.0,1087.1 L2145.5,1087.0 L2146.0,1086.8 L2146.5,1086.7 L2147.0,1086.5 L2147.5,1086.4 L2148.0,1086.2 L2148.5,1086.1 L2149.0,1085.9 L2149.5,1085.7 L2150.0,1085.6 L2150.5,1085.4 L2151.0,1085.3 L2151.5,1085.1 L2152.0,1085.0 L2152.5,1084.8 L2153.0,1084.7 L2153.5,1084.5 L2154.0,1084.3 L2154.5,1084.2 L2155.0,1084.0 L2155.5,1083.9 L2156.0,1083.7 L2156.5,1083.6 L2157.0,1083.4 L2157.5,1083.3 L2158.0,1083.1 L2158.5,1082.9 L2159.0,1082.8 L2159.5,1082.6 L2160.0,1082.5 L2160.5,1082.3 L2161.0,1082.2 L2161.5,1082.0 L2162.0,1081.8 L2162.5,1081.7 L2163.0,1081.5 L2163.5,1081.4 L2164.0,1081.2 L2164.5,1081.1 L2165.0,1080.9 L2165.5,1080.7 L2166.0,1080.6 L2166.5,1080.4 L2167.0,1080.3 L2167.5,1080.1 L2168.0,1080.0 L2168.5,1079.8 L2169.0,1079.6 L2169.5,1079.5 L2170.0,1079.3 L2170.5,1079.2 L2171.0,1079.0 L2171.5,1078.9 L2172.0,1078.7 L2172.5,1078.5 L2173.0,1078.4 L2173.5,1078.2 L2174.0,1078.1 L2174.5,1077.9 L2175.0,1077.7 L2175.5,1077.6 L2176.0,1077.4 L2176.5,1077.3 L2177.0,1077.1 L2177.5,1076.9 L2178.0,1076.8 L2178.5,1076.6 L2179.0,1076.5 L2179.5,1076.3 L2180.0,1076.1 L2180.5,1076.0 L2181.0,1075.8 L2181.5,1075.7 L2182.0,1075.5 L2182.5,1075.3 L2183.0,1075.2 L2183.5,1075.0 L2184.0,1074.9 L2184.5,1074.7 L2185.0,1074.5 L2185.5,1074.4 L2186.0,1074.2 L2186.5,1074.1 L2187.0,1073.9 L2187.5,1073.7 L2188.0,1073.6 L2188.5,1073.4 L2189.0,1073.2 L2189.5,1073.1 L2190.0,1072.9 L2190.5,1072.8 L2191.0,1072.6 L2191.5,1072.4 L2192.0,1072.3 L2192.5,1072.1 L2193.0,1071.9 L2193.5,1071.8 L2194.0,1071.6 L2194.5,1071.5 L2195.0,1071.3 L2195.5,1071.1 L2196.0,1071.0 L2196.5,1070.8 L2197.0,1070.6 L2197.5,1070.5 L2198.0,1070.3 L2198.5,1070.1 L2199.0,1070.0 L2199.5,1069.8 L2200.0,1069.6 L2200.5,1069.5 L2201.0,1069.3 L2201.5,1069.2 L2202.0,1069.0 L2202.5,1068.8 L2203.0,1068.7 L2203.5,1068.5 L2204.0,1068.3 L2204.5,1068.2 L2205.0,1068.0 L2205.5,1067.8 L2206.0,1067.7 L2206.5,1067.5 L2207.0,1067.3 L2207.5,1067.2 L2208.0,1067.0 L2208.5,1066.8 L2209.0,1066.7 L2209.5,1066.5 L2210.0,1066.3 L2210.5,1066.2 L2211.0,1066.0 L2211.5,1065.8 L2212.0,1065.6 L2212.5,1065.5 L2213.0,1065.3 L2213.5,1065.1 L2214.0,1065.0 L2214.5,1064.8 L2215.0,1064.6 L2215.5,1064.5 L2216.0,1064.3 L2216.5,1064.1 L2217.0,1064.0 L2217.5,1063.8 L2218.0,1063.6 L2218.5,1063.4 L2219.0,1063.3 L2219.5,1063.1 L2220.0,1062.9 L2220.5,1062.8 L2221.0,1062.6 L2221.5,1062.4 L2222.0,1062.2 L2222.5,1062.1 L2223.0,1061.9 L2223.5,1061.7 L2224.0,1061.5 L2224.5,1061.4 L2225.0,1061.2 L2225.5,1061.0 L2226.0,1060.9 L2226.5,1060.7 L2227.0,1060.5 L2227.5,1060.3 L2228.0,1060.2 L2228.5,1060.0 L2229.0,1059.8 L2229.5,1059.6 L2230.0,1059.5 L2230.5,1059.3 L2231.0,1059.1 L2231.5,1058.9 L2232.0,1058.8 L2232.5,1058.6 L2233.0,1058.4 L2233.5,1058.2 L2234.0,1058.1 L2234.5,1057.9 L2235.0,1057.7 L2235.5,1057.5 L2236.0,1057.3 L2236.5,1057.2 L2237.0,1057.0 L2237.5,1056.8 L2238.0,1056.6 L2238.5,1056.4 L2239.0,1056.3 L2239.5,1056.1 L2240.0,1055.9 L2240.5,1055.7 L2241.0,1055.6 L2241.5,1055.4 L2242.0,1055.2 L2242.5,1055.0 L2243.0,1054.8 L2243.5,1054.6 L2244.0,1054.5 L2244.5,1054.3 L2245.0,1054.1 L2245.5,1053.9 L2246.0,1053.7 L2246.5,1053.6 L2247.0,1053.4 L2247.5,1053.2 L2248.0,1053.0 L2248.5,1052.8 L2249.0,1052.6 L2249.5,1052.5 L2250.0,1052.3 L2250.5,1052.1 L2251.0,1051.9 L2251.5,1051.7 L2252.0,1051.5 L2252.5,1051.3 L2253.0,1051.2 L2253.5,1051.0 L2254.0,1050.8 L2254.5,1050.6 L2255.0,1050.4 L2255.5,1050.2 L2256.0,1050.0 L2256.5,1049.8 L2257.0,1049.7 L2257.5,1049.5 L2258.0,1049.3 L2258.5,1049.1 L2259.0,1048.9 L2259.5,1048.7 L2260.0,1048.5 L2260.5,1048.3 L2261.0,1048.1 L2261.5,1048.0 L2262.0,1047.8 L2262.5,1047.6 L2263.0,1047.4 L2263.5,1047.2 L2264.0,1047.0 L2264.5,1046.8 L2265.0,1046.6 L2265.5,1046.4 L2266.0,1046.2 L2266.5,1046.0 L2267.0,1045.8 L2267.5,1045.6 L2268.0,1045.4 L2268.5,1045.2 L2269.0,1045.1 L2269.5,1044.9 L2270.0,1044.7 L2270.5,1044.5 L2271.0,1044.3 L2271.5,1044.1 L2272.0,1043.9 L2272.5,1043.7 L2273.0,1043.5 L2273.5,1043.3 L2274.0,1043.1 L2274.5,1042.9 L2275.0,1042.7 L2275.5,1042.5 L2276.0,1042.3 L2276.5,1042.1 L2277.0,1041.9 L2277.5,1041.7 L2278.0,1041.5 L2278.5,1041.3 L2279.0,1041.1 L2279.5,1040.9 L2280.0,1040.7 L2280.5,1040.5 L2281.0,1040.3 L2281.5,1040.1 L2282.0,1039.9 L2282.5,1039.7 L2283.0,1039.5 L2283.5,1039.2 L2284.0,1039.0 L2284.5,1038.8 L2285.0,1038.6 L2285.5,1038.4 L2286.0,1038.2 L2286.5,1038.0 L2287.0,1037.8 L2287.5,1037.6 L2288.0,1037.4 L2288.5,1037.2 L2289.0,1037.0 L2289.5,1036.8 L2290.0,1036.5 L2290.5,1036.3 L2291.0,1036.1 L2291.5,1035.9 L2292.0,1035.7 L2292.5,1035.5 L2293.0,1035.3 L2293.5,1035.1 L2294.0,1034.9 L2294.5,1034.6 L2295.0,1034.4 L2295.5,1034.2 L2296.0,1034.0 L2296.5,1033.8 L2297.0,1033.6 L2297.5,1033.4 L2298.0,1033.1 L2298.5,1032.9 L2299.0,1032.7 L2299.5,1032.5 L2300.0,1032.3 L2300.5,1032.1 L2301.0,1031.8 L2301.5,1031.6 L2302.0,1031.4 L2302.5,1031.2 L2303.0,1031.0 L2303.5,1030.7 L2304.0,1030.5 L2304.5,1030.3 L2305.0,1030.1 L2305.5,1029.8 L2306.0,1029.6 L2306.5,1029.4 L2307.0,1029.2 L2307.5,1029.0 L2308.0,1028.7 L2308.5,1028.5 L2309.0,1028.3 L2309.5,1028.1 L2310.0,1027.8 L2310.5,1027.6 L2311.0,1027.4 L2311.5,1027.2 L2312.0,1026.9 L2312.5,1026.7 L2313.0,1026.5 L2313.5,1026.2 L2314.0,1026.0 L2314.5,1025.8 L2315.0,1025.6 L2315.5,1025.3 L2316.0,1025.1 L2316.5,1024.9 L2317.0,1024.6 L2317.5,1024.4 L2318.0,1024.2 L2318.5,1024.0 L2319.0,1023.7 L2319.5,1023.5 L2320.0,1023.3 L2320.5,1023.0 L2321.0,1022.8 L2321.5,1022.6 L2322.0,1022.3 L2322.5,1022.1 L2323.0,1021.9 L2323.5,1021.6 L2324.0,1021.4 L2324.5,1021.2 L2325.0,1020.9 L2325.5,1020.7 L2326.0,1020.5 L2326.5,1020.2 L2327.0,1020.0 L2327.5,1019.8 L2328.0,1019.5 L2328.5,1019.3 L2329.0,1019.1 L2329.5,1018.8 L2330.0,1018.6 L2330.5,1018.4 L2331.0,1018.1 L2331.5,1017.9 L2332.0,1017.7 L2332.5,1017.4 L2333.0,1017.2 L2333.5,1017.0 L2334.0,1016.7 L2334.5,1016.5 L2335.0,1016.3 L2335.5,1016.0 L2336.0,1015.8 L2336.5,1015.6 L2337.0,1015.3 L2337.5,1015.1 L2338.0,1014.9 L2338.5,1014.6 L2339.0,1014.4 L2339.5,1014.2 L2340.0,1013.9 L2340.5,1013.7 L2341.0,1013.4 L2341.5,1013.2 L2342.0,1013.0 L2342.5,1012.7 L2343.0,1012.5 L2343.5,1012.3 L2344.0,1012.0 L2344.5,1011.8 L2345.0,1011.6 L2345.5,1011.3 L2346.0,1011.1 L2346.5,1010.9 L2347.0,1010.6 L2347.5,1010.4 L2348.0,1010.2 L2348.5,1009.9 L2349.0,1009.7 L2349.5,1009.5 L2350.0,1009.2 L2350.5,1009.0 L2351.0,1008.8 L2351.5,1008.6 L2352.0,1008.3 L2352.5,1008.1 L2353.0,1007.9 L2353.5,1007.6 L2354.0,1007.4 L2354.5,1007.2 L2355.0,1006.9 L2355.5,1006.7 L2356.0,1006.5 L2356.5,1006.2 L2357.0,1006.0 L2357.5,1005.8 L2358.0,1005.6 L2358.5,1005.3 L2359.0,1005.1 L2359.5,1004.9 L2360.0,1004.7 L2360.5,1004.4 L2361.0,1004.2 L2361.5,1004.0 L2362.0,1003.7 L2362.5,1003.5 L2363.0,1003.3 L2363.5,1003.1 L2364.0,1002.8 L2364.5,1002.6 L2365.0,1002.4 L2365.5,1002.2 L2366.0,1002.0 L2366.5,1001.7 L2367.0,1001.5 L2367.5,1001.3 L2368.0,1001.1 L2368.5,1000.9 L2369.0,1000.6 L2369.5,1000.4 L2370.0,1000.2 L2370.5,1000.0 L2371.0,999.8 L2371.5,999.5 L2372.0,999.3 L2372.5,999.1 L2373.0,998.9 L2373.5,998.7 L2374.0,998.5 L2374.5,998.2 L2375.0,998.0 L2375.5,997.8 L2376.0,997.6 L2376.5,997.4 L2377.0,997.2 L2377.5,997.0 L2378.0,996.8 L2378.5,996.6 L2379.0,996.3 L2379.5,996.1 L2380.0,995.9 L2380.5,995.7 L2381.0,995.5 L2381.5,995.3 L2382.0,995.1 L2382.5,994.9 L2383.0,994.7 L2383.5,994.5 L2384.0,994.3 L2384.5,994.1 L2385.0,993.9 L2385.5,993.7 L2386.0,993.5 L2386.5,993.3 L2387.0,993.1 L2387.5,992.9 L2388.0,992.7 L2388.5,992.5 L2389.0,992.3 L2389.5,992.1 L2390.0,991.9 L2390.5,991.8 L2391.0,991.6 L2391.5,991.4 L2392.0,991.2 L2392.2,991.1" stroke="#c2c03c" stroke-width="2.5"/>
<path d="M104.0,1217.0 L104.5,1216.7 L105.0,1216.5 L105.5,1216.3 L106.0,1216.1 L106.5,1215.8 L107.0,1215.6 L107.5,1215.4 L108.0,1215.2 L108.5,1214.9 L109.0,1214.7 L109.5,1214.5 L110.0,1214.3 L110.5,1214.0 L111.0,1213.8 L111.5,1213.6 L112.0,1213.4 L112.5,1213.1 L113.0,1212.9 L113.5,1212.7 L114.0,1212.5 L114.5,1212.2 L115.0,1212.0 L115.5,1211.8 L116.0,1211.6 L116.5,1211.3 L117.0,1211.1 L117.5,1210.9 L118.0,1210.7 L118.5,1210.4 L119.0,1210.2 L119.5,1210.0 L120.0,1209.8 L120.5,1209.6 L121.0,1209.3 L121.5,1209.1 L122.0,1208.9 L122.5,1208.7 L123.0,1208.4 L123.5,1208.2 L124.0,1208.0 L124.5,1207.8 L125.0,1207.6 L125.5,1207.3 L126.0,1207.1 L126.5,1206.9 L127.0,1206.7 L127.5,1206.4 L128.0,1206.2 L128.5,1206.0 L129.0,1205.8 L129.5,1205.6 L130.0,1205.3 L130.5,1205.1 L131.0,1204.9 L131.5,1204.7 L132.0,1204.4 L132.5,1204.2 L133.0,1204.0 L133.5,1203.8 L134.0,1203.5 L134.5,1203.3 L135.0,1203.1 L135.5,1202.9 L136.0,1202.6 L136.5,1202.4 L137.0,1202.2 L137.5,1202.0 L138.0,1201.7 L138.5,1201.5 L139.0,1201.3 L139.5,1201.0 L140.0,1200.8 L140.5,1200.6 L141.0,1200.4 L141.5,1200.1 L142.0,1199.9 L142.5,1199.7 L143.0,1199.4 L143.5,1199.2 L144.0,1199.0 L144.5,1198.7 L145.0,1198.5 L145.5,1198.3 L146.0,1198.0 L146.5,1197.8 L147.0,1197.5 L147.5,1197.3 L148.0,1197.1 L148.5,1196.8 L149.0,1196.6 L149.5,1196.3 L150.0,1196.1 L150.5,1195.8 L151.0,1195.6 L151.5,1195.3 L152.0,1195.1 L152.5,1194.8 L153.0,1194.6 L153.5,1194.3 L154.0,1194.1 L154.5,1193.8 L155.0,1193.6 L155.5,1193.3 L156.0,1193.1 L156.5,1192.8 L157.0,1192.5 L157.5,1192.3 L158.0,1192.0 L158.5,1191.8 L159.0,1191.5 L159.5,1191.2 L160.0,1191.0 L160.5,1190.7 L161.0,1190.4 L161.5,1190.1 L162.0,1189.9 L162.5,1189.6 L163.0,1189.3 L163.5,1189.0 L164.0,1188.7 L164.5,1188.5 L165.0,1188.2 L165.5,1187.9 L166.0,1187.6 L166.5,1187.3 L167.0,1187.0 L167.5,1186.7 L168.0,1186.4 L168.5,1186.1 L169.0,1185.8 L169.5,1185.5 L170.0,1185.2 L170.5,1184.9 L171.0,1184.6 L171.5,1184.2 L172.0,1183.9 L172.5,1183.6 L173.0,1183.3 L173.5,1182.9 L174.0,1182.6 L174.5,1182.3 L175.0,1182.0 L175.5,1181.6 L176.0,1181.3 L176.5,1180.9 L177.0,1180.6 L177.5,1180.2 L178.0,1179.9 L178.5,1179.5 L179.0,1179.2 L179.5,1178.8 L180.0,1178.4 L180.5,1178.1 L181.0,1177.7 L181.5,1177.3 L182.0,1176.9 L182.5,1176.6 L183.0,1176.2 L183.5,1175.8 L184.0,1175.4 L184.5,1175.0 L185.0,1174.6 L185.5,1174.2 L186.0,1173.8 L186.5,1173.4 L187.0,1172.9 L187.5,1172.5 L188.0,1172.1 L188.5,1171.6 L189.0,1171.2 L189.5,1170.8 L190.0,1170.3 L190.5,1169.9 L191.0,1169.4 L191.5,1169.0 L192.0,1168.5 L192.5,1168.0 L193.0,1167.5 L193.5,1167.1 L194.0,1166.6 L194.5,1166.1 L195.0,1165.6 L195.5,1165.1 L196.0,1164.6 L196.5,1164.0 L197.0,1163.5 L197.5,1163.0 L198.0,1162.5 L198.5,1161.9 L199.0,1161.4 L199.5,1160.8 L200.0,1160.3 L200.5,1159.7 L201.0,1159.1 L201.5,1158.5 L202.0,1158.0 L202.5,1157.4 L203.0,1156.8 L203.5,1156.2 L204.0,1155.5 L204.5,1154.9 L205.0,1154.3 L205.5,1153.7 L206.0,1153.0 L206.5,1152.3 L207.0,1151.7 L207.5,1151.0 L208.0,1150.3 L208.5,1149.6 L209.0,1148.9 L209.5,1148.2 L210.0,1147.5 L210.5,1146.8 L211.0,1146.1 L211.5,1145.3 L212.0,1144.6 L212.5,1143.8 L213.0,1143.0 L213.5,1142.2 L214.0,1141.4 L214.5,1140.6 L215.0,1139.8 L215.5,1139.0 L216.0,1138.2 L216.5,1137.3 L217.0,1136.4 L217.5,1135.6 L218.0,1134.7 L218.5,1133.8 L219.0,1132.9 L219.5,1131.9 L220.0,1131.0 L220.5,1130.1 L221.0,1129.1 L221.5,1128.1 L222.0,1127.1 L222.5,1126.1 L223.0,1125.1 L223.5,1124.1 L224.0,1123.0 L224.5,1122.0 L225.0,1120.9 L225.5,1119.8 L226.0,1118.7 L226.5,1117.5 L227.0,1116.4 L227.5,1115.2 L228.0,1114.0 L228.5,1112.8 L229.0,1111.6 L229.5,1110.4 L230.0,1109.1 L230.5,1107.8 L231.0,1106.5 L231.5,1105.2 L232.0,1103.9 L232.5,1102.5 L233.0,1101.1 L233.5,1099.7 L234.0,1098.3 L234.5,1096.8 L235.0,1095.3 L235.5,1093.8 L236.0,1092.3 L236.5,1090.8 L237.0,1089.2 L237.5,1087.6 L238.0,1085.9 L238.5,1084.3 L239.0,1082.6 L239.5,1080.8 L240.0,1079.1 L240.5,1077.3 L241.0,1075.5 L241.5,1073.6 L242.0,1071.7 L242.5,1069.8 L243.0,1067.9 L243.5,1065.9 L244.0,1063.9 L244.5,1061.8 L245.0,1059.7 L245.5,1057.6 L246.0,1055.4 L246.5,1053.2 L247.0,1050.9 L247.5,1048.6 L248.0,1046.3 L248.5,1043.9 L249.0,1041.4 L249.5,1038.9 L250.0,1036.4 L250.5,1033.8 L251.0,1031.2 L251.5,1028.5 L252.0,1025.7 L252.5,1022.8 L253.0,1019.9 L253.5,1016.9 L254.0,1013.8 L254.5,1010.6 L255.0,1007.2 L255.5,1003.8 L256.0,1000.2 L256.5,996.6 L257.0,992.7 L257.5,988.7 L258.0,984.6 L258.5,980.3 L259.0,975.8 L259.5,971.1 L260.0,966.2 L260.5,961.1 L261.0,955.7 L261.5,950.1 L262.0,944.3 L262.5,938.2 L263.0,931.8 L263.5,925.2 L264.0,918.4 L264.5,911.3 L265.0,904.1 L265.5,896.5 L266.0,888.8 L266.5,880.9 L267.0,872.7 L267.5,864.4 L268.0,855.9 L268.5,847.3 L269.0,838.4 L269.5,829.5 L270.0,820.4 L270.5,811.2 L271.0,802.0 L271.5,792.6 L272.0,783.3 L272.5,773.9 L273.0,764.5 L273.5,755.2 L274.0,745.9 L274.5,736.7 L275.0,727.7 L275.5,718.8 L276.0,710.1 L276.5,701.7 L277.0,693.5 L277.5,685.5 L278.0,677.8 L278.5,670.3 L279.0,663.2 L279.5,656.2 L280.0,649.6 L280.5,643.2 L281.0,637.1 L281.5,631.3 L282.0,625.7 L282.5,620.4 L283.0,615.4 L283.5,610.7 L284.0,606.2 L284.5,602.0 L285.0,598.1 L285.5,594.5 L286.0,591.1 L286.5,587.9 L287.0,585.0 L287.5,582.4 L288.0,579.9 L288.5,577.7 L289.0,575.8 L289.5,574.0 L290.0,572.5 L290.5,571.1 L291.0,570.0 L291.5,569.0 L292.0,568.3 L292.5,567.7 L293.0,567.2 L293.5,566.9 L294.0,566.8 L294.5,566.7 L295.0,566.8 L295.5,567.1 L296.0,567.6 L296.5,568.3 L297.0,569.2 L297.5,570.4 L298.0,571.9 L298.5,573.7 L299.0,575.8 L299.5,578.3 L300.0,581.2 L300.5,584.5 L301.0,588.2 L301.5,592.3 L302.0,596.9 L302.5,601.9 L303.0,607.5 L303.5,613.5 L304.0,619.9 L304.5,626.8 L305.0,634.1 L305.5,641.8 L306.0,649.8 L306.5,658.2 L307.0,666.8 L307.5,675.7 L308.0,684.8 L308.5,694.0 L309.0,703.3 L309.5,712.7 L310.0,722.2 L310.5,731.7 L311.0,741.2 L311.5,750.7 L312.0,760.2 L312.5,769.6 L313.0,778.9 L313.5,788.2 L314.0,797.4 L314.5,806.4 L315.0,815.4 L315.5,824.3 L316.0,833.0 L316.5,841.6 L317.0,850.0 L317.5,858.3 L318.0,866.4 L318.5,874.4 L319.0,882.1 L319.5,889.8 L320.0,897.2 L320.5,904.5 L321.0,911.5 L321.5,918.4 L322.0,925.1 L322.5,931.6 L323.0,937.9 L323.5,944.1 L324.0,950.0 L324.5,955.7 L325.0,961.3 L325.5,966.7 L326.0,971.8 L326.5,976.9 L327.0,981.7 L327.5,986.4 L328.0,991.0 L328.5,995.4 L329.0,999.7 L329.5,1003.8 L330.0,1007.8 L330.5,1011.7 L331.0,1015.5 L331.5,1019.1 L332.0,1022.7 L332.5,1026.1 L333.0,1029.4 L333.5,1032.7 L334.0,1035.8 L334.5,1038.9 L335.0,1041.9 L335.5,1044.8 L336.0,1047.6 L336.5,1050.3 L337.0,1053.0 L337.5,1055.5 L338.0,1058.1 L338.5,1060.5 L339.0,1062.9 L339.5,1065.2 L340.0,1067.5 L340.5,1069.7 L341.0,1071.9 L341.5,1074.0 L342.0,1076.0 L342.5,1078.0 L343.0,1080.0 L343.5,1081.9 L344.0,1083.8 L344.5,1085.6 L345.0,1087.4 L345.5,1089.1 L346.0,1090.9 L346.5,1092.5 L347.0,1094.2 L347.5,1095.8 L348.0,1097.4 L348.5,1098.9 L349.0,1100.4 L349.5,1101.9 L350.0,1103.4 L350.5,1104.8 L351.0,1106.3 L351.5,1107.7 L352.0,1109.0 L352.5,1110.4 L353.0,1111.7 L353.5,1113.0 L354.0,1114.3 L354.5,1115.6 L355.0,1116.9 L355.5,1118.1 L356.0,1119.3 L356.5,1120.5 L357.0,1121.7 L357.5,1122.9 L358.0,1124.1 L358.5,1125.2 L359.0,1126.4 L359.5,1127.5 L360.0,1128.6 L360.5,1129.7 L361.0,1130.8 L361.5,1131.8 L362.0,1132.9 L362.5,1133.9 L363.0,1135.0 L363.5,1136.0 L364.0,1137.0 L364.5,1138.0 L365.0,1139.0 L365.5,1139.9 L366.0,1140.9 L366.5,1141.8 L367.0,1142.8 L367.5,1143.7 L368.0,1144.6 L368.5,1145.5 L369.0,1146.4 L369.5,1147.3 L370.0,1148.2 L370.5,1149.0 L371.0,1149.9 L371.5,1150.7 L372.0,1151.5 L372.5,1152.4 L373.0,1153.2 L373.5,1154.0 L374.0,1154.8 L374.5,1155.6 L375.0,1156.3 L375.5,1157.1 L376.0,1157.9 L376.5,1158.6 L377.0,1159.3 L377.5,1160.1 L378.0,1160.8 L378.5,1161.5 L379.0,1162.2 L379.5,1162.9 L380.0,1163.6 L380.5,1164.3 L381.0,1165.0 L381.5,1165.6 L382.0,1166.3 L382.5,1167.0 L383.0,1167.6 L383.5,1168.2 L384.0,1168.9 L384.5,1169.5 L385.0,1170.1 L385.5,1170.7 L386.0,1171.4 L386.5,1172.0 L387.0,1172.5 L387.5,1173.1 L388.0,1173.7 L388.5,1174.3 L389.0,1174.9 L389.5,1175.4 L390.0,1176.0 L390.5,1176.5 L391.0,1177.1 L391.5,1177.6 L392.0,1178.2 L392.5,1178.7 L393.0,1179.2 L393.5,1179.7 L394.0,1180.2 L394.5,1180.8 L395.0,1181.3 L395.5,1181.8 L396.0,1182.3 L396.5,1182.7 L397.0,1183.2 L397.5,1183.7 L398.0,1184.2 L398.5,1184.6 L399.0,1185.1 L399.5,1185.6 L400.0,1186.0 L400.5,1186.5 L401.0,1186.9 L401.5,1187.4 L402.0,1187.8 L402.5,1188.2 L403.0,1188.7 L403.5,1189.1 L404.0,1189.5 L404.5,1189.9 L405.0,1190.4 L405.5,1190.8 L406.0,1191.2 L406.5,1191.6 L407.0,1192.0 L407.5,1192.4 L408.0,1192.8 L408.5,1193.2 L409.0,1193.5 L409.5,1193.9 L410.0,1194.3 L410.5,1194.7 L411.0,1195.0 L411.5,1195.4 L412.0,1195.8 L412.5,1196.1 L413.0,1196.5 L413.5,1196.8 L414.0,1197.2 L414.5,1197.6 L415.0,1197.9 L415.5,1198.2 L416.0,1198.6 L416.5,1198.9 L417.0,1199.2 L417.5,1199.6 L418.0,1199.9 L418.5,1200.2 L419.0,1200.6 L419.5,1200.9 L420.0,1201.2 L420.5,1201.5 L421.0,1201.8 L421.5,1202.1 L422.0,1202.4 L422.5,1202.7 L423.0,1203.0 L423.5,1203.3 L424.0,1203.6 L424.5,1203.9 L425.0,1204.2 L425.5,1204.5 L426.0,1204.8 L426.5,1205.1 L427.0,1205.4 L427.5,1205.7 L428.0,1205.9 L428.5,1206.2 L429.0,1206.5 L429.5,1206.8 L430.0,1207.0 L430.5,1207.3 L431.0,1207.6 L431.5,1207.8 L432.0,1208.1 L432.5,1208.4 L433.0,1208.6 L433.5,1208.9 L434.0,1209.1 L434.5,1209.4 L435.0,1209.6 L435.5,1209.9 L436.0,1210.1 L436.5,1210.4 L437.0,1210.6 L437.5,1210.9 L438.0,1211.1 L438.5,1211.3 L439.0,1211.6 L439.5,1211.8 L440.0,1212.0 L440.5,1212.3 L441.0,1212.5 L441.5,1212.7 L442.0,1213.0 L442.5,1213.2 L443.0,1213.4 L443.5,1213.6 L444.0,1213.9 L444.5,1214.1 L445.0,1214.3 L445.5,1214.5 L446.0,1214.7 L446.5,1215.0 L447.0,1215.2 L447.5,1215.4 L448.0,1215.6 L448.5,1215.8 L449.0,1216.0 L449.5,1216.2 L450.0,1216.4 L450.5,1216.6 L451.0,1216.8 L451.5,1217.0 L452.0,1217.2 L452.5,1217.4 L453.0,1217.6 L453.5,1217.8 L454.0,1218.0 L454.5,1218.2 L455.0,1218.4 L455.5,1218.6 L456.0,1218.8 L456.5,1219.0 L457.0,1219.2 L457.5,1219.4 L458.0,1219.5 L458.5,1219.7 L459.0,1219.9 L459.5,1220.1 L460.0,1220.3 L460.5,1220.5 L461.0,1220.6 L461.5,1220.8 L462.0,1221.0 L462.5,1221.2 L463.0,1221.3 L463.5,1221.5 L464.0,1221.7 L464.5,1221.9 L465.0,1222.0 L465.5,1222.2 L466.0,1222.4 L466.5,1222.5 L467.0,1222.7 L467.5,1222.9 L468.0,1223.0 L468.5,1223.2 L469.0,1223.3 L469.5,1223.5 L470.0,1223.7 L470.5,1223.8 L471.0,1224.0 L471.5,1224.1 L472.0,1224.3 L472.5,1224.5 L473.0,1224.6 L473.5,1224.8 L474.0,1224.9 L474.5,1225.1 L475.0,1225.2 L475.5,1225.4 L476.0,1225.5 L476.5,1225.7 L477.0,1225.8 L477.5,1226.0 L478.0,1226.1 L478.5,1226.2 L479.0,1226.4 L479.5,1226.5 L480.0,1226.7 L480.5,1226.8 L481.0,1227.0 L481.5,1227.1 L482.0,1227.2 L482.5,1227.4 L483.0,1227.5 L483.5,1227.6 L484.0,1227.8 L484.5,1227.9 L485.0,1228.0 L485.5,1228.2 L486.0,1228.3 L486.5,1228.4 L487.0,1228.6 L487.5,1228.7 L488.0,1228.8 L488.5,1229.0 L489.0,1229.1 L489.5,1229.2 L490.0,1229.3 L490.5,1229.5 L491.0,1229.6 L491.5,1229.7 L492.0,1229.8 L492.5,1230.0 L493.0,1230.1 L493.5,1230.2 L494.0,1230.3 L494.5,1230.4 L495.0,1230.6 L495.5,1230.7 L496.0,1230.8 L496.5,1230.9 L497.0,1231.0 L497.5,1231.1 L498.0,1231.2 L498.5,1231.4 L499.0,1231.5 L499.5,1231.6 L500.0,1231.7 L500.5,1231.8 L501.0,1231.9 L501.5,1232.0 L502.0,1232.1 L502.5,1232.2 L503.0,1232.4 L503.5,1232.5 L504.0,1232.6 L504.5,1232.7 L505.0,1232.8 L505.5,1232.9 L506.0,1233.0 L506.5,1233.1 L507.0,1233.2 L507.5,1233.3 L508.0,1233.4 L508.5,1233.5 L509.0,1233.6 L509.5,1233.7 L510.0,1233.8 L510.5,1233.9 L511.0,1234.0 L511.5,1234.1 L512.0,1234.2 L512.5,1234.3 L513.0,1234.4 L513.5,1234.5 L514.0,1234.6 L514.5,1234.7 L515.0,1234.8 L515.5,1234.9 L516.0,1235.0 L516.5,1235.0 L517.0,1235.1 L517.5,1235.2 L518.0,1235.3 L518.5,1235.4 L519.0,1235.5 L519.5,1235.6 L520.0,1235.7 L520.5,1235.8 L521.0,1235.9 L521.5,1235.9 L522.0,1236.0 L522.5,1236.1 L523.0,1236.2 L523.5,1236.3 L524.0,1236.4 L524.5,1236.5 L525.0,1236.5 L525.5,1236.6 L526.0,1236.7 L526.5,1236.8 L527.0,1236.9 L527.5,1237.0 L528.0,1237.0 L528.5,1237.1 L529.0,1237.2 L529.5,1237.3 L530.0,1237.4 L530.5,1237.4 L531.0,1237.5 L531.5,1237.6 L532.0,1237.7 L532.5,1237.7 L533.0,1237.8 L533.5,1237.9 L534.0,1238.0 L534.5,1238.1 L535.0,1238.1 L535.5,1238.2 L536.0,1238.3 L536.5,1238.3 L537.0,1238.4 L537.5,1238.5 L538.0,1238.6 L538.5,1238.6 L539.0,1238.7 L539.5,1238.8 L540.0,1238.9 L540.5,1238.9 L541.0,1239.0 L541.5,1239.1 L542.0,1239.1 L542.5,1239.2 L543.0,1239.3 L543.5,1239.3 L544.0,1239.4 L544.5,1239.5 L545.0,1239.5 L545.5,1239.6 L546.0,1239.7 L546.5,1239.7 L547.0,1239.8 L547.5,1239.9 L548.0,1239.9 L548.5,1240.0 L549.0,1240.1 L549.5,1240.1 L550.0,1240.2 L550.5,1240.3 L551.0,1240.3 L551.5,1240.4 L552.0,1240.5 L552.5,1240.5 L553.0,1240.6 L553.5,1240.6 L554.0,1240.7 L554.5,1240.8 L555.0,1240.8 L555.5,1240.9 L556.0,1240.9 L556.5,1241.0 L557.0,1241.1 L557.5,1241.1 L558.0,1241.2 L558.5,1241.2 L559.0,1241.3 L559.5,1241.3 L560.0,1241.4 L560.5,1241.5 L561.0,1241.5 L561.5,1241.6 L562.0,1241.6 L562.5,1241.7 L563.0,1241.7 L563.5,1241.8 L564.0,1241.9 L564.5,1241.9 L565.0,1242.0 L565.5,1242.0 L566.0,1242.1 L566.5,1242.1 L567.0,1242.2 L567.5,1242.2 L568.0,1242.3 L568.5,1242.3 L569.0,1242.4 L569.5,1242.4 L570.0,1242.5 L570.5,1242.5 L571.0,1242.6 L571.5,1242.6 L572.0,1242.7 L572.5,1242.7 L573.0,1242.8 L573.5,1242.8 L574.0,1242.9 L574.5,1242.9 L575.0,1243.0 L575.5,1243.0 L576.0,1243.1 L576.5,1243.1 L577.0,1243.2 L577.5,1243.2 L578.0,1243.3 L578.5,1243.3 L579.0,1243.4 L579.5,1243.4 L580.0,1243.5 L580.5,1243.5 L581.0,1243.6 L581.5,1243.6 L582.0,1243.6 L582.5,1243.7 L583.0,1243.7 L583.5,1243.8 L584.0,1243.8 L584.5,1243.9 L585.0,1243.9 L585.5,1244.0 L586.0,1244.0 L586.5,1244.0 L587.0,1244.1 L587.5,1244.1 L588.0,1244.2 L588.5,1244.2 L589.0,1244.2 L589.5,1244.3 L590.0,1244.3 L590.5,1244.4 L591.0,1244.4 L591.5,1244.5 L592.0,1244.5 L592.5,1244.5 L593.0,1244.6 L593.5,1244.6 L594.0,1244.7 L594.5,1244.7 L595.0,1244.7 L595.5,1244.8 L596.0,1244.8 L596.5,1244.9 L597.0,1244.9 L597.5,1244.9 L598.0,1245.0 L598.5,1245.0 L599.0,1245.0 L599.5,1245.1 L600.0,1245.1 L600.5,1245.2 L601.0,1245.2 L601.5,1245.2 L602.0,1245.3 L602.5,1245.3 L603.0,1245.3 L603.5,1245.4 L604.0,1245.4 L604.5,1245.4 L605.0,1245.5 L605.5,1245.5 L606.0,1245.6 L606.5,1245.6 L607.0,1245.6 L607.5,1245.7 L608.0,1245.7 L608.5,1245.7 L609.0,1245.8 L609.5,1245.8 L610.0,1245.8 L610.5,1245.9 L611.0,1245.9 L611.5,1245.9 L612.0,1246.0 L612.5,1246.0 L613.0,1246.0 L613.5,1246.1 L614.0,1246.1 L614.5,1246.1 L615.0,1246.2 L615.5,1246.2 L616.0,1246.2 L616.5,1246.2 L617.0,1246.3 L617.5,1246.3 L618.0,1246.3 L618.5,1246.4 L619.0,1246.4 L619.5,1246.4 L620.0,1246.5 L620.5,1246.5 L621.0,1246.5 L621.5,1246.6 L622.0,1246.6 L622.5,1246.6 L623.0,1246.6 L623.5,1246.7 L624.0,1246.7 L624.5,1246.7 L625.0,1246.8 L625.5,1246.8 L626.0,1246.8 L626.5,1246.8 L627.0,1246.9 L627.5,1246.9 L628.0,1246.9 L628.5,1247.0 L629.0,1247.0 L629.5,1247.0 L630.0,1247.0 L630.5,1247.1 L631.0,1247.1 L631.5,1247.1 L632.0,1247.1 L632.5,1247.2 L633.0,1247.2 L633.5,1247.2 L634.0,1247.2 L634.5,1247.3 L635.0,1247.3 L635.5,1247.3 L636.0,1247.4 L636.5,1247.4 L637.0,1247.4 L637.5,1247.4 L638.0,1247.5 L638.5,1247.5 L639.0,1247.5 L639.5,1247.5 L640.0,1247.5 L640.5,1247.6 L641.0,1247.6 L641.5,1247.6 L642.0,1247.6 L642.5,1247.7 L643.0,1247.7 L643.5,1247.7 L644.0,1247.7 L644.5,1247.8 L645.0,1247.8 L645.5,1247.8 L646.0,1247.8 L646.5,1247.9 L647.0,1247.9 L647.5,1247.9 L648.0,1247.9 L648.5,1247.9 L649.0,1248.0 L649.5,1248.0 L650.0,1248.0 L650.5,1248.0 L651.0,1248.1 L651.5,1248.1 L652.0,1248.1 L652.5,1248.1 L653.0,1248.1 L653.5,1248.2 L654.0,1248.2 L654.5,1248.2 L655.0,1248.2 L655.5,1248.2 L656.0,1248.3 L656.5,1248.3 L657.0,1248.3 L657.5,1248.3 L658.0,1248.3 L658.5,1248.4 L659.0,1248.4 L659.5,1248.4 L660.0,1248.4 L660.5,1248.4 L661.0,1248.5 L661.5,1248.5 L662.0,1248.5 L662.5,1248.5 L663.0,1248.5 L663.5,1248.6 L664.0,1248.6 L664.5,1248.6 L665.0,1248.6 L665.5,1248.6 L666.0,1248.6 L666.5,1248.7 L667.0,1248.7 L667.5,1248.7 L668.0,1248.7 L668.5,1248.7 L669.0,1248.8 L669.5,1248.8 L670.0,1248.8 L670.5,1248.8 L671.0,1248.8 L671.5,1248.8 L672.0,1248.9 L672.5,1248.9 L673.0,1248.9 L673.5,1248.9 L674.0,1248.9 L674.5,1248.9 L675.0,1249.0 L675.5,1249.0 L676.0,1249.0 L676.5,1249.0 L677.0,1249.0 L677.5,1249.0 L678.0,1249.1 L678.5,1249.1 L679.0,1249.1 L679.5,1249.1 L680.0,1249.1 L680.5,1249.1 L681.0,1249.1 L681.5,1249.2 L682.0,1249.2 L682.5,1249.2 L683.0,1249.2 L683.5,1249.2 L684.0,1249.2 L684.5,1249.2 L685.0,1249.3 L685.5,1249.3 L686.0,1249.3 L686.5,1249.3 L687.0,1249.3 L687.5,1249.3 L688.0,1249.3 L688.5,1249.4 L689.0,1249.4 L689.5,1249.4 L690.0,1249.4 L690.5,1249.4 L691.0,1249.4 L691.5,1249.4 L692.0,1249.5 L692.5,1249.5 L693.0,1249.5 L693.5,1249.5 L694.0,1249.5 L694.5,1249.5 L695.0,1249.5 L695.5,1249.5 L696.0,1249.6 L696.5,1249.6 L697.0,1249.6 L697.5,1249.6 L698.0,1249.6 L698.5,1249.6 L699.0,1249.6 L699.5,1249.6 L700.0,1249.7 L700.5,1249.7 L701.0,1249.7 L701.5,1249.7 L702.0,1249.7 L702.5,1249.7 L703.0,1249.7 L703.5,1249.7 L704.0,1249.7 L704.5,1249.8 L705.0,1249.8 L705.5,1249.8 L706.0,1249.8 L706.5,1249.8 L707.0,1249.8 L707.5,1249.8 L708.0,1249.8 L708.5,1249.8 L709.0,1249.9 L709.5,1249.9 L710.0,1249.9 L710.5,1249.9 L711.0,1249.9 L711.5,1249.9 L712.0,1249.9 L712.5,1249.9 L713.0,1249.9 L713.5,1249.9 L714.0,1250.0 L714.5,1250.0 L715.0,1250.0 L715.5,1250.0 L716.0,1250.0 L716.5,1250.0 L717.0,1250.0 L717.5,1250.0 L718.0,1250.0 L718.5,1250.0 L719.0,1250.0 L719.5,1250.1 L720.0,1250.1 L720.5,1250.1 L721.0,1250.1 L721.5,1250.1 L722.0,1250.1 L722.5,1250.1 L723.0,1250.1 L723.5,1250.1 L724.0,1250.1 L724.5,1250.1 L725.0,1250.2 L725.5,1250.2 L726.0,1250.2 L726.5,1250.2 L727.0,1250.2 L727.5,1250.2 L728.0,1250.2 L728.5,1250.2 L729.0,1250.2 L729.5,1250.2 L730.0,1250.2 L730.5,1250.2 L731.0,1250.2 L731.5,1250.3 L732.0,1250.3 L732.5,1250.3 L733.0,1250.3 L733.5,1250.3 L734.0,1250.3 L734.5,1250.3 L735.0,1250.3 L735.5,1250.3 L736.0,1250.3 L736.5,1250.3 L737.0,1250.3 L737.5,1250.3 L738.0,1250.3 L738.5,1250.3 L739.0,1250.4 L739.5,1250.4 L740.0,1250.4 L740.5,1250.4 L741.0,1250.4 L741.5,1250.4 L742.0,1250.4 L742.5,1250.4 L743.0,1250.4 L743.5,1250.4 L744.0,1250.4 L744.5,1250.4 L745.0,1250.4 L745.5,1250.4 L746.0,1250.4 L746.5,1250.4 L747.0,1250.4 L747.5,1250.4 L748.0,1250.5 L748.5,1250.5 L749.0,1250.5 L749.5,1250.5 L750.0,1250.5 L750.5,1250.5 L751.0,1250.5 L751.5,1250.5 L752.0,1250.5 L752.5,1250.5 L753.0,1250.5 L753.5,1250.5 L754.0,1250.5 L754.5,1250.5 L755.0,1250.5 L755.5,1250.5 L756.0,1250.5 L756.5,1250.5 L757.0,1250.5 L757.5,1250.5 L758.0,1250.5 L758.5,1250.6 L759.0,1250.6 L759.5,1250.6 L760.0,1250.6 L760.5,1250.6 L761.0,1250.6 L761.5,1250.6 L762.0,1250.6 L762.5,1250.6 L763.0,1250.6 L763.5,1250.6 L764.0,1250.6 L764.5,1250.6 L765.0,1250.6 L765.5,1250.6 L766.0,1250.6 L766.5,1250.6 L767.0,1250.6 L767.5,1250.6 L768.0,1250.6 L768.5,1250.6 L769.0,1250.6 L769.5,1250.6 L770.0,1250.6 L770.5,1250.6 L771.0,1250.6 L771.5,1250.6 L772.0,1250.6 L772.5,1250.6 L773.0,1250.6 L773.5,1250.6 L774.0,1250.6 L774.5,1250.6 L775.0,1250.7 L775.5,1250.7 L776.0,1250.7 L776.5,1250.7 L777.0,1250.7 L777.5,1250.7 L778.0,1250.7 L778.5,1250.7 L779.0,1250.7 L779.5,1250.7 L780.0,1250.7 L780.5,1250.7 L781.0,1250.7 L781.5,1250.7 L782.0,1250.7 L782.5,1250.7 L783.0,1250.7 L783.5,1250.7 L784.0,1250.7 L784.5,1250.7 L785.0,1250.7 L785.5,1250.7 L786.0,1250.7 L786.5,1250.7 L787.0,1250.7 L787.5,1250.7 L788.0,1250.7 L788.5,1250.7 L789.0,1250.7 L789.5,1250.7 L790.0,1250.7 L790.5,1250.7 L791.0,1250.7 L791.5,1250.7 L792.0,1250.7 L792.5,1250.7 L793.0,1250.7 L793.5,1250.7 L794.0,1250.7 L794.5,1250.7 L795.0,1250.7 L795.5,1250.7 L796.0,1250.7 L796.5,1250.7 L797.0,1250.7 L797.5,1250.7 L798.0,1250.7 L798.5,1250.7 L799.0,1250.7 L799.5,1250.7 L800.0,1250.7 L800.5,1250.7 L801.0,1250.7 L801.5,1250.7 L802.0,1250.7 L802.5,1250.7 L803.0,1250.7 L803.5,1250.7 L804.0,1250.7 L804.5,1250.7 L805.0,1250.7 L805.5,1250.7 L806.0,1250.7 L806.5,1250.7 L807.0,1250.7 L807.5,1250.7 L808.0,1250.7 L808.5,1250.7 L809.0,1250.7 L809.5,1250.7 L810.0,1250.7 L810.5,1250.7 L811.0,1250.7 L811.5,1250.7 L812.0,1250.7 L812.5,1250.7 L813.0,1250.7 L813.5,1250.7 L814.0,1250.7 L814.5,1250.7 L815.0,1250.7 L815.5,1250.7 L816.0,1250.7 L816.5,1250.7 L817.0,1250.7 L817.5,1250.7 L818.0,1250.7 L818.5,1250.6 L819.0,1250.6 L819.5,1250.6 L820.0,1250.6 L820.5,1250.6 L821.0,1250.6 L821.5,1250.6 L822.0,1250.6 L822.5,1250.6 L823.0,1250.6 L823.5,1250.6 L824.0,1250.6 L824.5,1250.6 L825.0,1250.6 L825.5,1250.6 L826.0,1250.6 L826.5,1250.6 L827.0,1250.6 L827.5,1250.6 L828.0,1250.6 L828.5,1250.6 L829.0,1250.6 L829.5,1250.6 L830.0,1250.6 L830.5,1250.6 L831.0,1250.6 L831.5,1250.6 L832.0,1250.6 L832.5,1250.6 L833.0,1250.6 L833.5,1250.6 L834.0,1250.6 L834.5,1250.6 L835.0,1250.6 L835.5,1250.6 L836.0,1250.5 L836.5,1250.5 L837.0,1250.5 L837.5,1250.5 L838.0,1250.5 L838.5,1250.5 L839.0,1250.5 L839.5,1250.5 L840.0,1250.5 L840.5,1250.5 L841.0,1250.5 L841.5,1250.5 L842.0,1250.5 L842.5,1250.5 L843.0,1250.5 L843.5,1250.5 L844.0,1250.5 L844.5,1250.5 L845.0,1250.5 L845.5,1250.5 L846.0,1250.5 L846.5,1250.5 L847.0,1250.5 L847.5,1250.5 L848.0,1250.5 L848.5,1250.4 L849.0,1250.4 L849.5,1250.4 L850.0,1250.4 L850.5,1250.4 L851.0,1250.4 L851.5,1250.4 L852.0,1250.4 L852.5,1250.4 L853.0,1250.4 L853.5,1250.4 L854.0,1250.4 L854.5,1250.4 L855.0,1250.4 L855.5,1250.4 L856.0,1250.4 L856.5,1250.4 L857.0,1250.4 L857.5,1250.4 L858.0,1250.4 L858.5,1250.3 L859.0,1250.3 L859.5,1250.3 L860.0,1250.3 L860.5,1250.3 L861.0,1250.3 L861.5,1250.3 L862.0,1250.3 L862.5,1250.3 L863.0,1250.3 L863.5,1250.3 L864.0,1250.3 L864.5,1250.3 L865.0,1250.3 L865.5,1250.3 L866.0,1250.3 L866.5,1250.3 L867.0,1250.2 L867.5,1250.2 L868.0,1250.2 L868.5,1250.2 L869.0,1250.2 L869.5,1250.2 L870.0,1250.2 L870.5,1250.2 L871.0,1250.2 L871.5,1250.2 L872.0,1250.2 L872.5,1250.2 L873.0,1250.2 L873.5,1250.2 L874.0,1250.2 L874.5,1250.2 L875.0,1250.1 L875.5,1250.1 L876.0,1250.1 L876.5,1250.1 L877.0,1250.1 L877.5,1250.1 L878.0,1250.1 L878.5,1250.1 L879.0,1250.1 L879.5,1250.1 L880.0,1250.1 L880.5,1250.1 L881.0,1250.1 L881.5,1250.1 L882.0,1250.0 L882.5,1250.0 L883.0,1250.0 L883.5,1250.0 L884.0,1250.0 L884.5,1250.0 L885.0,1250.0 L885.5,1250.0 L886.0,1250.0 L886.5,1250.0 L887.0,1250.0 L887.5,1250.0 L888.0,1250.0 L888.5,1249.9 L889.0,1249.9 L889.5,1249.9 L890.0,1249.9 L890.5,1249.9 L891.0,1249.9 L891.5,1249.9 L892.0,1249.9 L892.5,1249.9 L893.0,1249.9 L893.5,1249.9 L894.0,1249.9 L894.5,1249.9 L895.0,1249.8 L895.5,1249.8 L896.0,1249.8 L896.5,1249.8 L897.0,1249.8 L897.5,1249.8 L898.0,1249.8 L898.5,1249.8 L899.0,1249.8 L899.5,1249.8 L900.0,1249.8 L900.5,1249.7 L901.0,1249.7 L901.5,1249.7 L902.0,1249.7 L902.5,1249.7 L903.0,1249.7 L903.5,1249.7 L904.0,1249.7 L904.5,1249.7 L905.0,1249.7 L905.5,1249.7 L906.0,1249.7 L906.5,1249.6 L907.0,1249.6 L907.5,1249.6 L908.0,1249.6 L908.5,1249.6 L909.0,1249.6 L909.5,1249.6 L910.0,1249.6 L910.5,1249.6 L911.0,1249.6 L911.5,1249.5 L912.0,1249.5 L912.5,1249.5 L913.0,1249.5 L913.5,1249.5 L914.0,1249.5 L914.5,1249.5 L915.0,1249.5 L915.5,1249.5 L916.0,1249.5 L916.5,1249.5 L917.0,1249.4 L917.5,1249.4 L918.0,1249.4 L918.5,1249.4 L919.0,1249.4 L919.5,1249.4 L920.0,1249.4 L920.5,1249.4 L921.0,1249.4 L921.5,1249.4 L922.0,1249.3 L922.5,1249.3 L923.0,1249.3 L923.5,1249.3 L924.0,1249.3 L924.5,1249.3 L925.0,1249.3 L925.5,1249.3 L926.0,1249.3 L926.5,1249.2 L927.0,1249.2 L927.5,1249.2 L928.0,1249.2 L928.5,1249.2 L929.0,1249.2 L929.5,1249.2 L930.0,1249.2 L930.5,1249.2 L931.0,1249.1 L931.5,1249.1 L932.0,1249.1 L932.5,1249.1 L933.0,1249.1 L933.5,1249.1 L934.0,1249.1 L934.5,1249.1 L935.0,1249.1 L935.5,1249.0 L936.0,1249.0 L936.5,1249.0 L937.0,1249.0 L937.5,1249.0 L938.0,1249.0 L938.5,1249.0 L939.0,1249.0 L939.5,1249.0 L940.0,1248.9 L940.5,1248.9 L941.0,1248.9 L941.5,1248.9 L942.0,1248.9 L942.5,1248.9 L943.0,1248.9 L943.5,1248.9 L944.0,1248.9 L944.5,1248.8 L945.0,1248.8 L945.5,1248.8 L946.0,1248.8 L946.5,1248.8 L947.0,1248.8 L947.5,1248.8 L948.0,1248.8 L948.5,1248.7 L949.0,1248.7 L949.5,1248.7 L950.0,1248.7 L950.5,1248.7 L951.0,1248.7 L951.5,1248.7 L952.0,1248.7 L952.5,1248.6 L953.0,1248.6 L953.5,1248.6 L954.0,1248.6 L954.5,1248.6 L955.0,1248.6 L955.5,1248.6 L956.0,1248.6 L956.5,1248.5 L957.0,1248.5 L957.5,1248.5 L958.0,1248.5 L958.5,1248.5 L959.0,1248.5 L959.5,1248.5 L960.0,1248.5 L960.5,1248.4 L961.0,1248.4 L961.5,1248.4 L962.0,1248.4 L962.5,1248.4 L963.0,1248.4 L963.5,1248.4 L964.0,1248.4 L964.5,1248.3 L965.0,1248.3 L965.5,1248.3 L966.0,1248.3 L966.5,1248.3 L967.0,1248.3 L967.5,1248.3 L968.0,1248.2 L968.5,1248.2 L969.0,1248.2 L969.5,1248.2 L970.0,1248.2 L970.5,1248.2 L971.0,1248.2 L971.5,1248.2 L972.0,1248.1 L972.5,1248.1 L973.0,1248.1 L973.5,1248.1 L974.0,1248.1 L974.5,1248.1 L975.0,1248.1 L975.5,1248.0 L976.0,1248.0 L976.5,1248.0 L977.0,1248.0 L977.5,1248.0 L978.0,1248.0 L978.5,1248.0 L979.0,1247.9 L979.5,1247.9 L980.0,1247.9 L980.5,1247.9 L981.0,1247.9 L981.5,1247.9 L982.0,1247.9 L982.5,1247.8 L983.0,1247.8 L983.5,1247.8 L984.0,1247.8 L984.5,1247.8 L985.0,1247.8 L985.5,1247.8 L986.0,1247.7 L986.5,1247.7 L987.0,1247.7 L987.5,1247.7 L988.0,1247.7 L988.5,1247.7 L989.0,1247.7 L989.5,1247.6 L990.0,1247.6 L990.5,1247.6 L991.0,1247.6 L991.5,1247.6 L992.0,1247.6 L992.5,1247.5 L993.0,1247.5 L993.5,1247.5 L994.0,1247.5 L994.5,1247.5 L995.0,1247.5 L995.5,1247.5 L996.0,1247.4 L996.5,1247.4 L997.0,1247.4 L997.5,1247.4 L998.0,1247.4 L998.5,1247.4 L999.0,1247.3 L999.5,1247.3 L1000.0,1247.3 L1000.5,1247.3 L1001.0,1247.3 L1001.5,1247.3 L1002.0,1247.3 L1002.5,1247.2 L1003.0,1247.2 L1003.5,1247.2 L1004.0,1247.2 L1004.5,1247.2 L1005.0,1247.2 L1005.5,1247.1 L1006.0,1247.1 L1006.5,1247.1 L1007.0,1247.1 L1007.5,1247.1 L1008.0,1247.1 L1008.5,1247.1 L1009.0,1247.0 L1009.5,1247.0 L1010.0,1247.0 L1010.5,1247.0 L1011.0,1247.0 L1011.5,1247.0 L1012.0,1246.9 L1012.5,1246.9 L1013.0,1246.9 L1013.5,1246.9 L1014.0,1246.9 L1014.5,1246.9 L1015.0,1246.8 L1015.5,1246.8 L1016.0,1246.8 L1016.5,1246.8 L1017.0,1246.8 L1017.5,1246.8 L1018.0,1246.7 L1018.5,1246.7 L1019.0,1246.7 L1019.5,1246.7 L1020.0,1246.7 L1020.5,1246.7 L1021.0,1246.6 L1021.5,1246.6 L1022.0,1246.6 L1022.5,1246.6 L1023.0,1246.6 L1023.5,1246.6 L1024.0,1246.5 L1024.5,1246.5 L1025.0,1246.5 L1025.5,1246.5 L1026.0,1246.5 L1026.5,1246.5 L1027.0,1246.4 L1027.5,1246.4 L1028.0,1246.4 L1028.5,1246.4 L1029.0,1246.4 L1029.5,1246.4 L1030.0,1246.3 L1030.5,1246.3 L1031.0,1246.3 L1031.5,1246.3 L1032.0,1246.3 L1032.5,1246.2 L1033.0,1246.2 L1033.5,1246.2 L1034.0,1246.2 L1034.5,1246.2 L1035.0,1246.2 L1035.5,1246.1 L1036.0,1246.1 L1036.5,1246.1 L1037.0,1246.1 L1037.5,1246.1 L1038.0,1246.1 L1038.5,1246.0 L1039.0,1246.0 L1039.5,1246.0 L1040.0,1246.0 L1040.5,1246.0 L1041.0,1245.9 L1041.5,1245.9 L1042.0,1245.9 L1042.5,1245.9 L1043.0,1245.9 L1043.5,1245.9 L1044.0,1245.8 L1044.5,1245.8 L1045.0,1245.8 L1045.5,1245.8 L1046.0,1245.8 L1046.5,1245.7 L1047.0,1245.7 L1047.5,1245.7 L1048.0,1245.7 L1048.5,1245.7 L1049.0,1245.6 L1049.5,1245.6 L1050.0,1245.6 L1050.5,1245.6 L1051.0,1245.6 L1051.5,1245.6 L1052.0,1245.5 L1052.5,1245.5 L1053.0,1245.5 L1053.5,1245.5 L1054.0,1245.5 L1054.5,1245.4 L1055.0,1245.4 L1055.5,1245.4 L1056.0,1245.4 L1056.5,1245.4 L1057.0,1245.3 L1057.5,1245.3 L1058.0,1245.3 L1058.5,1245.3 L1059.0,1245.3 L1059.5,1245.3 L1060.0,1245.2 L1060.5,1245.2 L1061.0,1245.2 L1061.5,1245.2 L1062.0,1245.2 L1062.5,1245.1 L1063.0,1245.1 L1063.5,1245.1 L1064.0,1245.1 L1064.5,1245.1 L1065.0,1245.0 L1065.5,1245.0 L1066.0,1245.0 L1066.5,1245.0 L1067.0,1245.0 L1067.5,1244.9 L1068.0,1244.9 L1068.5,1244.9 L1069.0,1244.9 L1069.5,1244.9 L1070.0,1244.8 L1070.5,1244.8 L1071.0,1244.8 L1071.5,1244.8 L1072.0,1244.8 L1072.5,1244.7 L1073.0,1244.7 L1073.5,1244.7 L1074.0,1244.7 L1074.5,1244.7 L1075.0,1244.6 L1075.5,1244.6 L1076.0,1244.6 L1076.5,1244.6 L1077.0,1244.6 L1077.5,1244.5 L1078.0,1244.5 L1078.5,1244.5 L1079.0,1244.5 L1079.5,1244.4 L1080.0,1244.4 L1080.5,1244.4 L1081.0,1244.4 L1081.5,1244.4 L1082.0,1244.3 L1082.5,1244.3 L1083.0,1244.3 L1083.5,1244.3 L1084.0,1244.3 L1084.5,1244.2 L1085.0,1244.2 L1085.5,1244.2 L1086.0,1244.2 L1086.5,1244.2 L1087.0,1244.1 L1087.5,1244.1 L1088.0,1244.1 L1088.5,1244.1 L1089.0,1244.0 L1089.5,1244.0 L1090.0,1244.0 L1090.5,1244.0 L1091.0,1244.0 L1091.5,1243.9 L1092.0,1243.9 L1092.5,1243.9 L1093.0,1243.9 L1093.5,1243.9 L1094.0,1243.8 L1094.5,1243.8 L1095.0,1243.8 L1095.5,1243.8 L1096.0,1243.7 L1096.5,1243.7 L1097.0,1243.7 L1097.5,1243.7 L1098.0,1243.7 L1098.5,1243.6 L1099.0,1243.6 L1099.5,1243.6 L1100.0,1243.6 L1100.5,1243.5 L1101.0,1243.5 L1101.5,1243.5 L1102.0,1243.5 L1102.5,1243.5 L1103.0,1243.4 L1103.5,1243.4 L1104.0,1243.4 L1104.5,1243.4 L1105.0,1243.3 L1105.5,1243.3 L1106.0,1243.3 L1106.5,1243.3 L1107.0,1243.2 L1107.5,1243.2 L1108.0,1243.2 L1108.5,1243.2 L1109.0,1243.2 L1109.5,1243.1 L1110.0,1243.1 L1110.5,1243.1 L1111.0,1243.1 L1111.5,1243.0 L1112.0,1243.0 L1112.5,1243.0 L1113.0,1243.0 L1113.5,1242.9 L1114.0,1242.9 L1114.5,1242.9 L1115.0,1242.9 L1115.5,1242.9 L1116.0,1242.8 L1116.5,1242.8 L1117.0,1242.8 L1117.5,1242.8 L1118.0,1242.7 L1118.5,1242.7 L1119.0,1242.7 L1119.5,1242.7 L1120.0,1242.6 L1120.5,1242.6 L1121.0,1242.6 L1121.5,1242.6 L1122.0,1242.5 L1122.5,1242.5 L1123.0,1242.5 L1123.5,1242.5 L1124.0,1242.4 L1124.5,1242.4 L1125.0,1242.4 L1125.5,1242.4 L1126.0,1242.3 L1126.5,1242.3 L1127.0,1242.3 L1127.5,1242.3 L1128.0,1242.3 L1128.5,1242.2 L1129.0,1242.2 L1129.5,1242.2 L1130.0,1242.2 L1130.5,1242.1 L1131.0,1242.1 L1131.5,1242.1 L1132.0,1242.1 L1132.5,1242.0 L1133.0,1242.0 L1133.5,1242.0 L1134.0,1242.0 L1134.5,1241.9 L1135.0,1241.9 L1135.5,1241.9 L1136.0,1241.9 L1136.5,1241.8 L1137.0,1241.8 L1137.5,1241.8 L1138.0,1241.8 L1138.5,1241.7 L1139.0,1241.7 L1139.5,1241.7 L1140.0,1241.6 L1140.5,1241.6 L1141.0,1241.6 L1141.5,1241.6 L1142.0,1241.5 L1142.5,1241.5 L1143.0,1241.5 L1143.5,1241.5 L1144.0,1241.4 L1144.5,1241.4 L1145.0,1241.4 L1145.5,1241.4 L1146.0,1241.3 L1146.5,1241.3 L1147.0,1241.3 L1147.5,1241.3 L1148.0,1241.2 L1148.5,1241.2 L1149.0,1241.2 L1149.5,1241.2 L1150.0,1241.1 L1150.5,1241.1 L1151.0,1241.1 L1151.5,1241.0 L1152.0,1241.0 L1152.5,1241.0 L1153.0,1241.0 L1153.5,1240.9 L1154.0,1240.9 L1154.5,1240.9 L1155.0,1240.9 L1155.5,1240.8 L1156.0,1240.8 L1156.5,1240.8 L1157.0,1240.8 L1157.5,1240.7 L1158.0,1240.7 L1158.5,1240.7 L1159.0,1240.6 L1159.5,1240.6 L1160.0,1240.6 L1160.5,1240.6 L1161.0,1240.5 L1161.5,1240.5 L1162.0,1240.5 L1162.5,1240.5 L1163.0,1240.4 L1163.5,1240.4 L1164.0,1240.4 L1164.5,1240.3 L1165.0,1240.3 L1165.5,1240.3 L1166.0,1240.3 L1166.5,1240.2 L1167.0,1240.2 L1167.5,1240.2 L1168.0,1240.1 L1168.5,1240.1 L1169.0,1240.1 L1169.5,1240.1 L1170.0,1240.0 L1170.5,1240.0 L1171.0,1240.0 L1171.5,1239.9 L1172.0,1239.9 L1172.5,1239.9 L1173.0,1239.9 L1173.5,1239.8 L1174.0,1239.8 L1174.5,1239.8 L1175.0,1239.7 L1175.5,1239.7 L1176.0,1239.7 L1176.5,1239.7 L1177.0,1239.6 L1177.5,1239.6 L1178.0,1239.6 L1178.5,1239.5 L1179.0,1239.5 L1179.5,1239.5 L1180.0,1239.5 L1180.5,1239.4 L1181.0,1239.4 L1181.5,1239.4 L1182.0,1239.3 L1182.5,1239.3 L1183.0,1239.3 L1183.5,1239.2 L1184.0,1239.2 L1184.5,1239.2 L1185.0,1239.2 L1185.5,1239.1 L1186.0,1239.1 L1186.5,1239.1 L1187.0,1239.0 L1187.5,1239.0 L1188.0,1239.0 L1188.5,1238.9 L1189.0,1238.9 L1189.5,1238.9 L1190.0,1238.9 L1190.5,1238.8 L1191.0,1238.8 L1191.5,1238.8 L1192.0,1238.7 L1192.5,1238.7 L1193.0,1238.7 L1193.5,1238.6 L1194.0,1238.6 L1194.5,1238.6 L1195.0,1238.6 L1195.5,1238.5 L1196.0,1238.5 L1196.5,1238.5 L1197.0,1238.4 L1197.5,1238.4 L1198.0,1238.4 L1198.5,1238.3 L1199.0,1238.3 L1199.5,1238.3 L1200.0,1238.2 L1200.5,1238.2 L1201.0,1238.2 L1201.5,1238.1 L1202.0,1238.1 L1202.5,1238.1 L1203.0,1238.1 L1203.5,1238.0 L1204.0,1238.0 L1204.5,1238.0 L1205.0,1237.9 L1205.5,1237.9 L1206.0,1237.9 L1206.5,1237.8 L1207.0,1237.8 L1207.5,1237.8 L1208.0,1237.7 L1208.5,1237.7 L1209.0,1237.7 L1209.5,1237.6 L1210.0,1237.6 L1210.5,1237.6 L1211.0,1237.5 L1211.5,1237.5 L1212.0,1237.5 L1212.5,1237.4 L1213.0,1237.4 L1213.5,1237.4 L1214.0,1237.3 L1214.5,1237.3 L1215.0,1237.3 L1215.5,1237.2 L1216.0,1237.2 L1216.5,1237.2 L1217.0,1237.2 L1217.5,1237.1 L1218.0,1237.1 L1218.5,1237.1 L1219.0,1237.0 L1219.5,1237.0 L1220.0,1237.0 L1220.5,1236.9 L1221.0,1236.9 L1221.5,1236.9 L1222.0,1236.8 L1222.5,1236.8 L1223.0,1236.8 L1223.5,1236.7 L1224.0,1236.7 L1224.5,1236.6 L1225.0,1236.6 L1225.5,1236.6 L1226.0,1236.5 L1226.5,1236.5 L1227.0,1236.5 L1227.5,1236.4 L1228.0,1236.4 L1228.5,1236.4 L1229.0,1236.3 L1229.5,1236.3 L1230.0,1236.3 L1230.5,1236.2 L1231.0,1236.2 L1231.5,1236.2 L1232.0,1236.1 L1232.5,1236.1 L1233.0,1236.1 L1233.5,1236.0 L1234.0,1236.0 L1234.5,1236.0 L1235.0,1235.9 L1235.5,1235.9 L1236.0,1235.9 L1236.5,1235.8 L1237.0,1235.8 L1237.5,1235.8 L1238.0,1235.7 L1238.5,1235.7 L1239.0,1235.6 L1239.5,1235.6 L1240.0,1235.6 L1240.5,1235.5 L1241.0,1235.5 L1241.5,1235.5 L1242.0,1235.4 L1242.5,1235.4 L1243.0,1235.4 L1243.5,1235.3 L1244.0,1235.3 L1244.5,1235.3 L1245.0,1235.2 L1245.5,1235.2 L1246.0,1235.1 L1246.5,1235.1 L1247.0,1235.1 L1247.5,1235.0 L1248.0,1235.0 L1248.5,1235.0 L1249.0,1234.9 L1249.5,1234.9 L1250.0,1234.9 L1250.5,1234.8 L1251.0,1234.8 L1251.5,1234.7 L1252.0,1234.7 L1252.5,1234.7 L1253.0,1234.6 L1253.5,1234.6 L1254.0,1234.6 L1254.5,1234.5 L1255.0,1234.5 L1255.5,1234.4 L1256.0,1234.4 L1256.5,1234.4 L1257.0,1234.3 L1257.5,1234.3 L1258.0,1234.3 L1258.5,1234.2 L1259.0,1234.2 L1259.5,1234.1 L1260.0,1234.1 L1260.5,1234.1 L1261.0,1234.0 L1261.5,1234.0 L1262.0,1234.0 L1262.5,1233.9 L1263.0,1233.9 L1263.5,1233.8 L1264.0,1233.8 L1264.5,1233.8 L1265.0,1233.7 L1265.5,1233.7 L1266.0,1233.7 L1266.5,1233.6 L1267.0,1233.6 L1267.5,1233.5 L1268.0,1233.5 L1268.5,1233.5 L1269.0,1233.4 L1269.5,1233.4 L1270.0,1233.3 L1270.5,1233.3 L1271.0,1233.3 L1271.5,1233.2 L1272.0,1233.2 L1272.5,1233.1 L1273.0,1233.1 L1273.5,1233.1 L1274.0,1233.0 L1274.5,1233.0 L1275.0,1233.0 L1275.5,1232.9 L1276.0,1232.9 L1276.5,1232.8 L1277.0,1232.8 L1277.5,1232.8 L1278.0,1232.7 L1278.5,1232.7 L1279.0,1232.6 L1279.5,1232.6 L1280.0,1232.6 L1280.5,1232.5 L1281.0,1232.5 L1281.5,1232.4 L1282.0,1232.4 L1282.5,1232.4 L1283.0,1232.3 L1283.5,1232.3 L1284.0,1232.2 L1284.5,1232.2 L1285.0,1232.1 L1285.5,1232.1 L1286.0,1232.1 L1286.5,1232.0 L1287.0,1232.0 L1287.5,1231.9 L1288.0,1231.9 L1288.5,1231.9 L1289.0,1231.8 L1289.5,1231.8 L1290.0,1231.7 L1290.5,1231.7 L1291.0,1231.7 L1291.5,1231.6 L1292.0,1231.6 L1292.5,1231.5 L1293.0,1231.5 L1293.5,1231.4 L1294.0,1231.4 L1294.5,1231.4 L1295.0,1231.3 L1295.5,1231.3 L1296.0,1231.2 L1296.5,1231.2 L1297.0,1231.2 L1297.5,1231.1 L1298.0,1231.1 L1298.5,1231.0 L1299.0,1231.0 L1299.5,1230.9 L1300.0,1230.9 L1300.5,1230.9 L1301.0,1230.8 L1301.5,1230.8 L1302.0,1230.7 L1302.5,1230.7 L1303.0,1230.6 L1303.5,1230.6 L1304.0,1230.6 L1304.5,1230.5 L1305.0,1230.5 L1305.5,1230.4 L1306.0,1230.4 L1306.5,1230.3 L1307.0,1230.3 L1307.5,1230.3 L1308.0,1230.2 L1308.5,1230.2 L1309.0,1230.1 L1309.5,1230.1 L1310.0,1230.0 L1310.5,1230.0 L1311.0,1229.9 L1311.5,1229.9 L1312.0,1229.9 L1312.5,1229.8 L1313.0,1229.8 L1313.5,1229.7 L1314.0,1229.7 L1314.5,1229.6 L1315.0,1229.6 L1315.5,1229.5 L1316.0,1229.5 L1316.5,1229.5 L1317.0,1229.4 L1317.5,1229.4 L1318.0,1229.3 L1318.5,1229.3 L1319.0,1229.2 L1319.5,1229.2 L1320.0,1229.1 L1320.5,1229.1 L1321.0,1229.1 L1321.5,1229.0 L1322.0,1229.0 L1322.5,1228.9 L1323.0,1228.9 L1323.5,1228.8 L1324.0,1228.8 L1324.5,1228.7 L1325.0,1228.7 L1325.5,1228.6 L1326.0,1228.6 L1326.5,1228.5 L1327.0,1228.5 L1327.5,1228.5 L1328.0,1228.4 L1328.5,1228.4 L1329.0,1228.3 L1329.5,1228.3 L1330.0,1228.2 L1330.5,1228.2 L1331.0,1228.1 L1331.5,1228.1 L1332.0,1228.0 L1332.5,1228.0 L1333.0,1227.9 L1333.5,1227.9 L1334.0,1227.9 L1334.5,1227.8 L1335.0,1227.8 L1335.5,1227.7 L1336.0,1227.7 L1336.5,1227.6 L1337.0,1227.6 L1337.5,1227.5 L1338.0,1227.5 L1338.5,1227.4 L1339.0,1227.4 L1339.5,1227.3 L1340.0,1227.3 L1340.5,1227.2 L1341.0,1227.2 L1341.5,1227.1 L1342.0,1227.1 L1342.5,1227.0 L1343.0,1227.0 L1343.5,1226.9 L1344.0,1226.9 L1344.5,1226.8 L1345.0,1226.8 L1345.5,1226.8 L1346.0,1226.7 L1346.5,1226.7 L1347.0,1226.6 L1347.5,1226.6 L1348.0,1226.5 L1348.5,1226.5 L1349.0,1226.4 L1349.5,1226.4 L1350.0,1226.3 L1350.5,1226.3 L1351.0,1226.2 L1351.5,1226.2 L1352.0,1226.1 L1352.5,1226.1 L1353.0,1226.0 L1353.5,1226.0 L1354.0,1225.9 L1354.5,1225.9 L1355.0,1225.8 L1355.5,1225.8 L1356.0,1225.7 L1356.5,1225.7 L1357.0,1225.6 L1357.5,1225.6 L1358.0,1225.5 L1358.5,1225.5 L1359.0,1225.4 L1359.5,1225.4 L1360.0,1225.3 L1360.5,1225.3 L1361.0,1225.2 L1361.5,1225.2 L1362.0,1225.1 L1362.5,1225.1 L1363.0,1225.0 L1363.5,1225.0 L1364.0,1224.9 L1364.5,1224.9 L1365.0,1224.8 L1365.5,1224.8 L1366.0,1224.7 L1366.5,1224.6 L1367.0,1224.6 L1367.5,1224.5 L1368.0,1224.5 L1368.5,1224.4 L1369.0,1224.4 L1369.5,1224.3 L1370.0,1224.3 L1370.5,1224.2 L1371.0,1224.2 L1371.5,1224.1 L1372.0,1224.1 L1372.5,1224.0 L1373.0,1224.0 L1373.5,1223.9 L1374.0,1223.9 L1374.5,1223.8 L1375.0,1223.8 L1375.5,1223.7 L1376.0,1223.7 L1376.5,1223.6 L1377.0,1223.5 L1377.5,1223.5 L1378.0,1223.4 L1378.5,1223.4 L1379.0,1223.3 L1379.5,1223.3 L1380.0,1223.2 L1380.5,1223.2 L1381.0,1223.1 L1381.5,1223.1 L1382.0,1223.0 L1382.5,1223.0 L1383.0,1222.9 L1383.5,1222.9 L1384.0,1222.8 L1384.5,1222.7 L1385.0,1222.7 L1385.5,1222.6 L1386.0,1222.6 L1386.5,1222.5 L1387.0,1222.5 L1387.5,1222.4 L1388.0,1222.4 L1388.5,1222.3 L1389.0,1222.3 L1389.5,1222.2 L1390.0,1222.1 L1390.5,1222.1 L1391.0,1222.0 L1391.5,1222.0 L1392.0,1221.9 L1392.5,1221.9 L1393.0,1221.8 L1393.5,1221.8 L1394.0,1221.7 L1394.5,1221.6 L1395.0,1221.6 L1395.5,1221.5 L1396.0,1221.5 L1396.5,1221.4 L1397.0,1221.4 L1397.5,1221.3 L1398.0,1221.3 L1398.5,1221.2 L1399.0,1221.1 L1399.5,1221.1 L1400.0,1221.0 L1400.5,1221.0 L1401.0,1220.9 L1401.5,1220.9 L1402.0,1220.8 L1402.5,1220.7 L1403.0,1220.7 L1403.5,1220.6 L1404.0,1220.6 L1404.5,1220.5 L1405.0,1220.5 L1405.5,1220.4 L1406.0,1220.4 L1406.5,1220.3 L1407.0,1220.2 L1407.5,1220.2 L1408.0,1220.1 L1408.5,1220.1 L1409.0,1220.0 L1409.5,1219.9 L1410.0,1219.9 L1410.5,1219.8 L1411.0,1219.8 L1411.5,1219.7 L1412.0,1219.7 L1412.5,1219.6 L1413.0,1219.5 L1413.5,1219.5 L1414.0,1219.4 L1414.5,1219.4 L1415.0,1219.3 L1415.5,1219.2 L1416.0,1219.2 L1416.5,1219.1 L1417.0,1219.1 L1417.5,1219.0 L1418.0,1219.0 L1418.5,1218.9 L1419.0,1218.8 L1419.5,1218.8 L1420.0,1218.7 L1420.5,1218.7 L1421.0,1218.6 L1421.5,1218.5 L1422.0,1218.5 L1422.5,1218.4 L1423.0,1218.4 L1423.5,1218.3 L1424.0,1218.2 L1424.5,1218.2 L1425.0,1218.1 L1425.5,1218.1 L1426.0,1218.0 L1426.5,1217.9 L1427.0,1217.9 L1427.5,1217.8 L1428.0,1217.8 L1428.5,1217.7 L1429.0,1217.6 L1429.5,1217.6 L1430.0,1217.5 L1430.5,1217.5 L1431.0,1217.4 L1431.5,1217.3 L1432.0,1217.3 L1432.5,1217.2 L1433.0,1217.1 L1433.5,1217.1 L1434.0,1217.0 L1434.5,1217.0 L1435.0,1216.9 L1435.5,1216.8 L1436.0,1216.8 L1436.5,1216.7 L1437.0,1216.7 L1437.5,1216.6 L1438.0,1216.5 L1438.5,1216.5 L1439.0,1216.4 L1439.5,1216.3 L1440.0,1216.3 L1440.5,1216.2 L1441.0,1216.2 L1441.5,1216.1 L1442.0,1216.0 L1442.5,1216.0 L1443.0,1215.9 L1443.5,1215.8 L1444.0,1215.8 L1444.5,1215.7 L1445.0,1215.6 L1445.5,1215.6 L1446.0,1215.5 L1446.5,1215.5 L1447.0,1215.4 L1447.5,1215.3 L1448.0,1215.3 L1448.5,1215.2 L1449.0,1215.1 L1449.5,1215.1 L1450.0,1215.0 L1450.5,1214.9 L1451.0,1214.9 L1451.5,1214.8 L1452.0,1214.8 L1452.5,1214.7 L1453.0,1214.6 L1453.5,1214.6 L1454.0,1214.5 L1454.5,1214.4 L1455.0,1214.4 L1455.5,1214.3 L1456.0,1214.2 L1456.5,1214.2 L1457.0,1214.1 L1457.5,1214.0 L1458.0,1214.0 L1458.5,1213.9 L1459.0,1213.8 L1459.5,1213.8 L1460.0,1213.7 L1460.5,1213.6 L1461.0,1213.6 L1461.5,1213.5 L1462.0,1213.5 L1462.5,1213.4 L1463.0,1213.3 L1463.5,1213.3 L1464.0,1213.2 L1464.5,1213.1 L1465.0,1213.1 L1465.5,1213.0 L1466.0,1212.9 L1466.5,1212.9 L1467.0,1212.8 L1467.5,1212.7 L1468.0,1212.7 L1468.5,1212.6 L1469.0,1212.5 L1469.5,1212.5 L1470.0,1212.4 L1470.5,1212.3 L1471.0,1212.3 L1471.5,1212.2 L1472.0,1212.1 L1472.5,1212.1 L1473.0,1212.0 L1473.5,1211.9 L1474.0,1211.8 L1474.5,1211.8 L1475.0,1211.7 L1475.5,1211.6 L1476.0,1211.6 L1476.5,1211.5 L1477.0,1211.4 L1477.5,1211.4 L1478.0,1211.3 L1478.5,1211.2 L1479.0,1211.2 L1479.5,1211.1 L1480.0,1211.0 L1480.5,1211.0 L1481.0,1210.9 L1481.5,1210.8 L1482.0,1210.8 L1482.5,1210.7 L1483.0,1210.6 L1483.5,1210.5 L1484.0,1210.5 L1484.5,1210.4 L1485.0,1210.3 L1485.5,1210.3 L1486.0,1210.2 L1486.5,1210.1 L1487.0,1210.1 L1487.5,1210.0 L1488.0,1209.9 L1488.5,1209.8 L1489.0,1209.8 L1489.5,1209.7 L1490.0,1209.6 L1490.5,1209.6 L1491.0,1209.5 L1491.5,1209.4 L1492.0,1209.4 L1492.5,1209.3 L1493.0,1209.2 L1493.5,1209.1 L1494.0,1209.1 L1494.5,1209.0 L1495.0,1208.9 L1495.5,1208.9 L1496.0,1208.8 L1496.5,1208.7 L1497.0,1208.6 L1497.5,1208.6 L1498.0,1208.5 L1498.5,1208.4 L1499.0,1208.4 L1499.5,1208.3 L1500.0,1208.2 L1500.5,1208.1 L1501.0,1208.1 L1501.5,1208.0 L1502.0,1207.9 L1502.5,1207.9 L1503.0,1207.8 L1503.5,1207.7 L1504.0,1207.6 L1504.5,1207.6 L1505.0,1207.5 L1505.5,1207.4 L1506.0,1207.3 L1506.5,1207.3 L1507.0,1207.2 L1507.5,1207.1 L1508.0,1207.1 L1508.5,1207.0 L1509.0,1206.9 L1509.5,1206.8 L1510.0,1206.8 L1510.5,1206.7 L1511.0,1206.6 L1511.5,1206.5 L1512.0,1206.5 L1512.5,1206.4 L1513.0,1206.3 L1513.5,1206.2 L1514.0,1206.2 L1514.5,1206.1 L1515.0,1206.0 L1515.5,1205.9 L1516.0,1205.9 L1516.5,1205.8 L1517.0,1205.7 L1517.5,1205.6 L1518.0,1205.6 L1518.5,1205.5 L1519.0,1205.4 L1519.5,1205.3 L1520.0,1205.3 L1520.5,1205.2 L1521.0,1205.1 L1521.5,1205.0 L1522.0,1205.0 L1522.5,1204.9 L1523.0,1204.8 L1523.5,1204.7 L1524.0,1204.7 L1524.5,1204.6 L1525.0,1204.5 L1525.5,1204.4 L1526.0,1204.4 L1526.5,1204.3 L1527.0,1204.2 L1527.5,1204.1 L1528.0,1204.1 L1528.5,1204.0 L1529.0,1203.9 L1529.5,1203.8 L1530.0,1203.8 L1530.5,1203.7 L1531.0,1203.6 L1531.5,1203.5 L1532.0,1203.5 L1532.5,1203.4 L1533.0,1203.3 L1533.5,1203.2 L1534.0,1203.1 L1534.5,1203.1 L1535.0,1203.0 L1535.5,1202.9 L1536.0,1202.8 L1536.5,1202.8 L1537.0,1202.7 L1537.5,1202.6 L1538.0,1202.5 L1538.5,1202.5 L1539.0,1202.4 L1539.5,1202.3 L1540.0,1202.2 L1540.5,1202.2 L1541.0,1202.1 L1541.5,1202.0 L1542.0,1201.9 L1542.5,1201.8 L1543.0,1201.8 L1543.5,1201.7 L1544.0,1201.6 L1544.5,1201.5 L1545.0,1201.5 L1545.5,1201.4 L1546.0,1201.3 L1546.5,1201.2 L1547.0,1201.2 L1547.5,1201.1 L1548.0,1201.0 L1548.5,1200.9 L1549.0,1200.9 L1549.5,1200.8 L1550.0,1200.7 L1550.5,1200.6 L1551.0,1200.5 L1551.5,1200.5 L1552.0,1200.4 L1552.5,1200.3 L1553.0,1200.2 L1553.5,1200.2 L1554.0,1200.1 L1554.5,1200.0 L1555.0,1199.9 L1555.5,1199.9 L1556.0,1199.8 L1556.5,1199.7 L1557.0,1199.6 L1557.5,1199.6 L1558.0,1199.5 L1558.5,1199.4 L1559.0,1199.3 L1559.5,1199.3 L1560.0,1199.2 L1560.5,1199.1 L1561.0,1199.0 L1561.5,1199.0 L1562.0,1198.9 L1562.5,1198.8 L1563.0,1198.7 L1563.5,1198.7 L1564.0,1198.6 L1564.5,1198.5 L1565.0,1198.4 L1565.5,1198.4 L1566.0,1198.3 L1566.5,1198.2 L1567.0,1198.1 L1567.5,1198.1 L1568.0,1198.0 L1568.5,1197.9 L1569.0,1197.8 L1569.5,1197.8 L1570.0,1197.7 L1570.5,1197.6 L1571.0,1197.5 L1571.5,1197.5 L1572.0,1197.4 L1572.5,1197.3 L1573.0,1197.2 L1573.5,1197.2 L1574.0,1197.1 L1574.5,1197.0 L1575.0,1197.0 L1575.5,1196.9 L1576.0,1196.8 L1576.5,1196.7 L1577.0,1196.7 L1577.5,1196.6 L1578.0,1196.5 L1578.5,1196.4 L1579.0,1196.4 L1579.5,1196.3 L1580.0,1196.2 L1580.5,1196.2 L1581.0,1196.1 L1581.5,1196.0 L1582.0,1195.9 L1582.5,1195.9 L1583.0,1195.8 L1583.5,1195.7 L1584.0,1195.7 L1584.5,1195.6 L1585.0,1195.5 L1585.5,1195.5 L1586.0,1195.4 L1586.5,1195.3 L1587.0,1195.2 L1587.5,1195.2 L1588.0,1195.1 L1588.5,1195.0 L1589.0,1195.0 L1589.5,1194.9 L1590.0,1194.8 L1590.5,1194.8 L1591.0,1194.7 L1591.5,1194.6 L1592.0,1194.6 L1592.5,1194.5 L1593.0,1194.4 L1593.5,1194.4 L1594.0,1194.3 L1594.5,1194.2 L1595.0,1194.2 L1595.5,1194.1 L1596.0,1194.0 L1596.5,1194.0 L1597.0,1193.9 L1597.5,1193.8 L1598.0,1193.8 L1598.5,1193.7 L1599.0,1193.6 L1599.5,1193.6 L1600.0,1193.5 L1600.5,1193.5 L1601.0,1193.4 L1601.5,1193.3 L1602.0,1193.3 L1602.5,1193.2 L1603.0,1193.1 L1603.5,1193.1 L1604.0,1193.0 L1604.5,1193.0 L1605.0,1192.9 L1605.5,1192.8 L1606.0,1192.8 L1606.5,1192.7 L1607.0,1192.7 L1607.5,1192.6 L1608.0,1192.5 L1608.5,1192.5 L1609.0,1192.4 L1609.5,1192.4 L1610.0,1192.3 L1610.5,1192.2 L1611.0,1192.2 L1611.5,1192.1 L1612.0,1192.1 L1612.5,1192.0 L1613.0,1192.0 L1613.5,1191.9 L1614.0,1191.8 L1614.5,1191.8 L1615.0,1191.7 L1615.5,1191.7 L1616.0,1191.6 L1616.5,1191.6 L1617.0,1191.5 L1617.5,1191.5 L1618.0,1191.4 L1618.5,1191.3 L1619.0,1191.3 L1619.5,1191.2 L1620.0,1191.2 L1620.5,1191.1 L1621.0,1191.1 L1621.5,1191.0 L1622.0,1191.0 L1622.5,1190.9 L1623.0,1190.9 L1623.5,1190.8 L1624.0,1190.8 L1624.5,1190.7 L1625.0,1190.7 L1625.5,1190.6 L1626.0,1190.6 L1626.5,1190.5 L1627.0,1190.5 L1627.5,1190.4 L1628.0,1190.4 L1628.5,1190.4 L1629.0,1190.3 L1629.5,1190.3 L1630.0,1190.2 L1630.5,1190.2 L1631.0,1190.1 L1631.5,1190.1 L1632.0,1190.0 L1632.5,1190.0 L1633.0,1190.0 L1633.5,1189.9 L1634.0,1189.9 L1634.5,1189.8 L1635.0,1189.8 L1635.5,1189.7 L1636.0,1189.7 L1636.5,1189.7 L1637.0,1189.6 L1637.5,1189.6 L1638.0,1189.6 L1638.5,1189.5 L1639.0,1189.5 L1639.5,1189.4 L1640.0,1189.4 L1640.5,1189.4 L1641.0,1189.3 L1641.5,1189.3 L1642.0,1189.3 L1642.5,1189.2 L1643.0,1189.2 L1643.5,1189.2 L1644.0,1189.1 L1644.5,1189.1 L1645.0,1189.1 L1645.5,1189.0 L1646.0,1189.0 L1646.5,1189.0 L1647.0,1188.9 L1647.5,1188.9 L1648.0,1188.9 L1648.5,1188.8 L1649.0,1188.8 L1649.5,1188.8 L1650.0,1188.7 L1650.5,1188.7 L1651.0,1188.7 L1651.5,1188.7 L1652.0,1188.6 L1652.5,1188.6 L1653.0,1188.6 L1653.5,1188.5 L1654.0,1188.5 L1654.5,1188.5 L1655.0,1188.5 L1655.5,1188.4 L1656.0,1188.4 L1656.5,1188.4 L1657.0,1188.4 L1657.5,1188.3 L1658.0,1188.3 L1658.5,1188.3 L1659.0,1188.3 L1659.5,1188.2 L1660.0,1188.2 L1660.5,1188.2 L1661.0,1188.1 L1661.5,1188.1 L1662.0,1188.1 L1662.5,1188.1 L1663.0,1188.0 L1663.5,1188.0 L1664.0,1188.0 L1664.5,1188.0 L1665.0,1187.9 L1665.5,1187.9 L1666.0,1187.9 L1666.5,1187.9 L1667.0,1187.8 L1667.5,1187.8 L1668.0,1187.8 L1668.5,1187.8 L1669.0,1187.8 L1669.5,1187.7 L1670.0,1187.7 L1670.5,1187.7 L1671.0,1187.7 L1671.5,1187.6 L1672.0,1187.6 L1672.5,1187.6 L1673.0,1187.6 L1673.5,1187.5 L1674.0,1187.5 L1674.5,1187.5 L1675.0,1187.4 L1675.5,1187.4 L1676.0,1187.4 L1676.5,1187.4 L1677.0,1187.3 L1677.5,1187.3 L1678.0,1187.3 L1678.5,1187.3 L1679.0,1187.2 L1679.5,1187.2 L1680.0,1187.2 L1680.5,1187.2 L1681.0,1187.1 L1681.5,1187.1 L1682.0,1187.1 L1682.5,1187.0 L1683.0,1187.0 L1683.5,1187.0 L1684.0,1187.0 L1684.5,1186.9 L1685.0,1186.9 L1685.5,1186.9 L1686.0,1186.8 L1686.5,1186.8 L1687.0,1186.8 L1687.5,1186.7 L1688.0,1186.7 L1688.5,1186.7 L1689.0,1186.6 L1689.5,1186.6 L1690.0,1186.6 L1690.5,1186.5 L1691.0,1186.5 L1691.5,1186.5 L1692.0,1186.4 L1692.5,1186.4 L1693.0,1186.4 L1693.5,1186.3 L1694.0,1186.3 L1694.5,1186.2 L1695.0,1186.2 L1695.5,1186.2 L1696.0,1186.1 L1696.5,1186.1 L1697.0,1186.0 L1697.5,1186.0 L1698.0,1186.0 L1698.5,1185.9 L1699.0,1185.9 L1699.5,1185.8 L1700.0,1185.8 L1700.5,1185.7 L1701.0,1185.7 L1701.5,1185.6 L1702.0,1185.6 L1702.5,1185.5 L1703.0,1185.5 L1703.5,1185.4 L1704.0,1185.4 L1704.5,1185.3 L1705.0,1185.3 L1705.5,1185.2 L1706.0,1185.2 L1706.5,1185.1 L1707.0,1185.0 L1707.5,1185.0 L1708.0,1184.9 L1708.5,1184.8 L1709.0,1184.8 L1709.5,1184.7 L1710.0,1184.7 L1710.5,1184.6 L1711.0,1184.5 L1711.5,1184.4 L1712.0,1184.4 L1712.5,1184.3 L1713.0,1184.2 L1713.5,1184.1 L1714.0,1184.1 L1714.5,1184.0 L1715.0,1183.9 L1715.5,1183.8 L1716.0,1183.7 L1716.5,1183.7 L1717.0,1183.6 L1717.5,1183.5 L1718.0,1183.4 L1718.5,1183.3 L1719.0,1183.2 L1719.5,1183.1 L1720.0,1183.0 L1720.5,1182.9 L1721.0,1182.8 L1721.5,1182.7 L1722.0,1182.6 L1722.5,1182.5 L1723.0,1182.4 L1723.5,1182.3 L1724.0,1182.2 L1724.5,1182.1 L1725.0,1182.0 L1725.5,1181.8 L1726.0,1181.7 L1726.5,1181.6 L1727.0,1181.5 L1727.5,1181.4 L1728.0,1181.2 L1728.5,1181.1 L1729.0,1181.0 L1729.5,1180.8 L1730.0,1180.7 L1730.5,1180.6 L1731.0,1180.4 L1731.5,1180.3 L1732.0,1180.1 L1732.5,1180.0 L1733.0,1179.9 L1733.5,1179.7 L1734.0,1179.6 L1734.5,1179.4 L1735.0,1179.3 L1735.5,1179.1 L1736.0,1179.0 L1736.5,1178.8 L1737.0,1178.7 L1737.5,1178.5 L1738.0,1178.4 L1738.5,1178.2 L1739.0,1178.0 L1739.5,1177.9 L1740.0,1177.7 L1740.5,1177.6 L1741.0,1177.4 L1741.5,1177.3 L1742.0,1177.1 L1742.5,1177.0 L1743.0,1176.8 L1743.5,1176.6 L1744.0,1176.5 L1744.5,1176.3 L1745.0,1176.2 L1745.5,1176.0 L1746.0,1175.9 L1746.5,1175.7 L1747.0,1175.5 L1747.5,1175.4 L1748.0,1175.2 L1748.5,1175.1 L1749.0,1174.9 L1749.5,1174.8 L1750.0,1174.6 L1750.5,1174.5 L1751.0,1174.3 L1751.5,1174.2 L1752.0,1174.0 L1752.5,1173.9 L1753.0,1173.8 L1753.5,1173.6 L1754.0,1173.5 L1754.5,1173.3 L1755.0,1173.2 L1755.5,1173.1 L1756.0,1172.9 L1756.5,1172.8 L1757.0,1172.7 L1757.5,1172.6 L1758.0,1172.4 L1758.5,1172.3 L1759.0,1172.2 L1759.5,1172.1 L1760.0,1172.0 L1760.5,1171.9 L1761.0,1171.7 L1761.5,1171.6 L1762.0,1171.5 L1762.5,1171.4 L1763.0,1171.3 L1763.5,1171.3 L1764.0,1171.2 L1764.5,1171.1 L1765.0,1171.0 L1765.5,1170.9 L1766.0,1170.9 L1766.5,1170.8 L1767.0,1170.7 L1767.5,1170.7 L1768.0,1170.6 L1768.5,1170.5 L1769.0,1170.5 L1769.5,1170.4 L1770.0,1170.4 L1770.5,1170.4 L1771.0,1170.3 L1771.5,1170.3 L1772.0,1170.3 L1772.5,1170.3 L1773.0,1170.2 L1773.5,1170.2 L1774.0,1170.2 L1774.5,1170.2 L1775.0,1170.2 L1775.5,1170.2 L1776.0,1170.3 L1776.5,1170.3 L1777.0,1170.3 L1777.5,1170.3 L1778.0,1170.3 L1778.5,1170.4 L1779.0,1170.4 L1779.5,1170.4 L1780.0,1170.4 L1780.5,1170.5 L1781.0,1170.5 L1781.5,1170.6 L1782.0,1170.6 L1782.5,1170.6 L1783.0,1170.7 L1783.5,1170.7 L1784.0,1170.8 L1784.5,1170.8 L1785.0,1170.9 L1785.5,1170.9 L1786.0,1171.0 L1786.5,1171.1 L1787.0,1171.1 L1787.5,1171.2 L1788.0,1171.2 L1788.5,1171.3 L1789.0,1171.3 L1789.5,1171.4 L1790.0,1171.4 L1790.5,1171.5 L1791.0,1171.6 L1791.5,1171.6 L1792.0,1171.7 L1792.5,1171.7 L1793.0,1171.8 L1793.5,1171.8 L1794.0,1171.9 L1794.5,1171.9 L1795.0,1172.0 L1795.5,1172.0 L1796.0,1172.0 L1796.5,1172.1 L1797.0,1172.1 L1797.5,1172.2 L1798.0,1172.2 L1798.5,1172.2 L1799.0,1172.3 L1799.5,1172.3 L1800.0,1172.3 L1800.5,1172.3 L1801.0,1172.3 L1801.5,1172.4 L1802.0,1172.4 L1802.5,1172.4 L1803.0,1172.4 L1803.5,1172.4 L1804.0,1172.4 L1804.5,1172.4 L1805.0,1172.4 L1805.5,1172.4 L1806.0,1172.3 L1806.5,1172.3 L1807.0,1172.3 L1807.5,1172.3 L1808.0,1172.3 L1808.5,1172.2 L1809.0,1172.2 L1809.5,1172.2 L1810.0,1172.1 L1810.5,1172.1 L1811.0,1172.0 L1811.5,1172.0 L1812.0,1171.9 L1812.5,1171.9 L1813.0,1171.8 L1813.5,1171.8 L1814.0,1171.7 L1814.5,1171.7 L1815.0,1171.6 L1815.5,1171.5 L1816.0,1171.5 L1816.5,1171.4 L1817.0,1171.3 L1817.5,1171.3 L1818.0,1171.2 L1818.5,1171.1 L1819.0,1171.0 L1819.5,1170.9 L1820.0,1170.9 L1820.5,1170.8 L1821.0,1170.7 L1821.5,1170.6 L1822.0,1170.5 L1822.5,1170.4 L1823.0,1170.3 L1823.5,1170.2 L1824.0,1170.1 L1824.5,1170.0 L1825.0,1169.9 L1825.5,1169.8 L1826.0,1169.7 L1826.5,1169.6 L1827.0,1169.5 L1827.5,1169.4 L1828.0,1169.2 L1828.5,1169.1 L1829.0,1169.0 L1829.5,1168.9 L1830.0,1168.8 L1830.5,1168.7 L1831.0,1168.5 L1831.5,1168.4 L1832.0,1168.3 L1832.5,1168.2 L1833.0,1168.0 L1833.5,1167.9 L1834.0,1167.8 L1834.5,1167.6 L1835.0,1167.5 L1835.5,1167.4 L1836.0,1167.2 L1836.5,1167.1 L1837.0,1167.0 L1837.5,1166.8 L1838.0,1166.7 L1838.5,1166.6 L1839.0,1166.4 L1839.5,1166.3 L1840.0,1166.2 L1840.5,1166.0 L1841.0,1165.9 L1841.5,1165.7 L1842.0,1165.6 L1842.5,1165.4 L1843.0,1165.3 L1843.5,1165.2 L1844.0,1165.0 L1844.5,1164.9 L1845.0,1164.7 L1845.5,1164.6 L1846.0,1164.4 L1846.5,1164.3 L1847.0,1164.1 L1847.5,1164.0 L1848.0,1163.8 L1848.5,1163.7 L1849.0,1163.6 L1849.5,1163.4 L1850.0,1163.3 L1850.5,1163.1 L1851.0,1163.0 L1851.5,1162.8 L1852.0,1162.7 L1852.5,1162.5 L1853.0,1162.4 L1853.5,1162.3 L1854.0,1162.1 L1854.5,1162.0 L1855.0,1161.8 L1855.5,1161.7 L1856.0,1161.5 L1856.5,1161.4 L1857.0,1161.3 L1857.5,1161.1 L1858.0,1161.0 L1858.5,1160.9 L1859.0,1160.7 L1859.5,1160.6 L1860.0,1160.4 L1860.5,1160.3 L1861.0,1160.2 L1861.5,1160.0 L1862.0,1159.9 L1862.5,1159.8 L1863.0,1159.6 L1863.5,1159.5 L1864.0,1159.4 L1864.5,1159.2 L1865.0,1159.1 L1865.5,1159.0 L1866.0,1158.8 L1866.5,1158.7 L1867.0,1158.6 L1867.5,1158.4 L1868.0,1158.3 L1868.5,1158.2 L1869.0,1158.1 L1869.5,1157.9 L1870.0,1157.8 L1870.5,1157.7 L1871.0,1157.5 L1871.5,1157.4 L1872.0,1157.3 L1872.5,1157.2 L1873.0,1157.0 L1873.5,1156.9 L1874.0,1156.8 L1874.5,1156.7 L1875.0,1156.6 L1875.5,1156.4 L1876.0,1156.3 L1876.5,1156.2 L1877.0,1156.1 L1877.5,1155.9 L1878.0,1155.8 L1878.5,1155.7 L1879.0,1155.6 L1879.5,1155.5 L1880.0,1155.3 L1880.5,1155.2 L1881.0,1155.1 L1881.5,1155.0 L1882.0,1154.9 L1882.5,1154.7 L1883.0,1154.6 L1883.5,1154.5 L1884.0,1154.4 L1884.5,1154.3 L1885.0,1154.1 L1885.5,1154.0 L1886.0,1153.9 L1886.5,1153.8 L1887.0,1153.7 L1887.5,1153.6 L1888.0,1153.5 L1888.5,1153.3 L1889.0,1153.2 L1889.5,1153.1 L1890.0,1153.0 L1890.5,1152.9 L1891.0,1152.8 L1891.5,1152.6 L1892.0,1152.5 L1892.5,1152.4 L1893.0,1152.3 L1893.5,1152.2 L1894.0,1152.1 L1894.5,1152.0 L1895.0,1151.9 L1895.5,1151.7 L1896.0,1151.6 L1896.5,1151.5 L1897.0,1151.4 L1897.5,1151.3 L1898.0,1151.2 L1898.5,1151.1 L1899.0,1151.0 L1899.5,1150.8 L1900.0,1150.7 L1900.5,1150.6 L1901.0,1150.5 L1901.5,1150.4 L1902.0,1150.3 L1902.5,1150.2 L1903.0,1150.1 L1903.5,1149.9 L1904.0,1149.8 L1904.5,1149.7 L1905.0,1149.6 L1905.5,1149.5 L1906.0,1149.4 L1906.5,1149.3 L1907.0,1149.2 L1907.5,1149.1 L1908.0,1148.9 L1908.5,1148.8 L1909.0,1148.7 L1909.5,1148.6 L1910.0,1148.5 L1910.5,1148.4 L1911.0,1148.3 L1911.5,1148.2 L1912.0,1148.1 L1912.5,1148.0 L1913.0,1147.8 L1913.5,1147.7 L1914.0,1147.6 L1914.5,1147.5 L1915.0,1147.4 L1915.5,1147.3 L1916.0,1147.2 L1916.5,1147.1 L1917.0,1147.0 L1917.5,1146.9 L1918.0,1146.7 L1918.5,1146.6 L1919.0,1146.5 L1919.5,1146.4 L1920.0,1146.3 L1920.5,1146.2 L1921.0,1146.1 L1921.5,1146.0 L1922.0,1145.9 L1922.5,1145.8 L1923.0,1145.7 L1923.5,1145.5 L1924.0,1145.4 L1924.5,1145.3 L1925.0,1145.2 L1925.5,1145.1 L1926.0,1145.0 L1926.5,1144.9 L1927.0,1144.8 L1927.5,1144.7 L1928.0,1144.6 L1928.5,1144.5 L1929.0,1144.3 L1929.5,1144.2 L1930.0,1144.1 L1930.5,1144.0 L1931.0,1143.9 L1931.5,1143.8 L1932.0,1143.7 L1932.5,1143.6 L1933.0,1143.5 L1933.5,1143.4 L1934.0,1143.3 L1934.5,1143.2 L1935.0,1143.0 L1935.5,1142.9 L1936.0,1142.8 L1936.5,1142.7 L1937.0,1142.6 L1937.5,1142.5 L1938.0,1142.4 L1938.5,1142.3 L1939.0,1142.2 L1939.5,1142.1 L1940.0,1142.0 L1940.5,1141.9 L1941.0,1141.8 L1941.5,1141.7 L1942.0,1141.5 L1942.5,1141.4 L1943.0,1141.3 L1943.5,1141.2 L1944.0,1141.1 L1944.5,1141.0 L1945.0,1140.9 L1945.5,1140.8 L1946.0,1140.7 L1946.5,1140.6 L1947.0,1140.5 L1947.5,1140.4 L1948.0,1140.3 L1948.5,1140.2 L1949.0,1140.1 L1949.5,1139.9 L1950.0,1139.8 L1950.5,1139.7 L1951.0,1139.6 L1951.5,1139.5 L1952.0,1139.4 L1952.5,1139.3 L1953.0,1139.2 L1953.5,1139.1 L1954.0,1139.0 L1954.5,1138.9 L1955.0,1138.8 L1955.5,1138.7 L1956.0,1138.6 L1956.5,1138.5 L1957.0,1138.4 L1957.5,1138.2 L1958.0,1138.1 L1958.5,1138.0 L1959.0,1137.9 L1959.5,1137.8 L1960.0,1137.7 L1960.5,1137.6 L1961.0,1137.5 L1961.5,1137.4 L1962.0,1137.3 L1962.5,1137.2 L1963.0,1137.1 L1963.5,1137.0 L1964.0,1136.9 L1964.5,1136.8 L1965.0,1136.7 L1965.5,1136.6 L1966.0,1136.5 L1966.5,1136.4 L1967.0,1136.2 L1967.5,1136.1 L1968.0,1136.0 L1968.5,1135.9 L1969.0,1135.8 L1969.5,1135.7 L1970.0,1135.6 L1970.5,1135.5 L1971.0,1135.4 L1971.5,1135.3 L1972.0,1135.2 L1972.5,1135.1 L1973.0,1135.0 L1973.5,1134.9 L1974.0,1134.8 L1974.5,1134.7 L1975.0,1134.6 L1975.5,1134.5 L1976.0,1134.4 L1976.5,1134.3 L1977.0,1134.1 L1977.5,1134.0 L1978.0,1133.9 L1978.5,1133.8 L1979.0,1133.7 L1979.5,1133.6 L1980.0,1133.5 L1980.5,1133.4 L1981.0,1133.3 L1981.5,1133.2 L1982.0,1133.1 L1982.5,1133.0 L1983.0,1132.9 L1983.5,1132.8 L1984.0,1132.7 L1984.5,1132.6 L1985.0,1132.5 L1985.5,1132.4 L1986.0,1132.3 L1986.5,1132.2 L1987.0,1132.1 L1987.5,1132.0 L1988.0,1131.8 L1988.5,1131.7 L1989.0,1131.6 L1989.5,1131.5 L1990.0,1131.4 L1990.5,1131.3 L1991.0,1131.2 L1991.5,1131.1 L1992.0,1131.0 L1992.5,1130.9 L1993.0,1130.8 L1993.5,1130.7 L1994.0,1130.6 L1994.5,1130.5 L1995.0,1130.4 L1995.5,1130.3 L1996.0,1130.2 L1996.5,1130.0 L1997.0,1129.9 L1997.5,1129.8 L1998.0,1129.7 L1998.5,1129.6 L1999.0,1129.5 L1999.5,1129.4 L2000.0,1129.3 L2000.5,1129.2 L2001.0,1129.1 L2001.5,1129.0 L2002.0,1128.9 L2002.5,1128.7 L2003.0,1128.6 L2003.5,1128.5 L2004.0,1128.4 L2004.5,1128.3 L2005.0,1128.2 L2005.5,1128.1 L2006.0,1128.0 L2006.5,1127.9 L2007.0,1127.7 L2007.5,1127.6 L2008.0,1127.5 L2008.5,1127.4 L2009.0,1127.3 L2009.5,1127.2 L2010.0,1127.1 L2010.5,1126.9 L2011.0,1126.8 L2011.5,1126.7 L2012.0,1126.6 L2012.5,1126.5 L2013.0,1126.4 L2013.5,1126.2 L2014.0,1126.1 L2014.5,1126.0 L2015.0,1125.9 L2015.5,1125.8 L2016.0,1125.6 L2016.5,1125.5 L2017.0,1125.4 L2017.5,1125.3 L2018.0,1125.2 L2018.5,1125.0 L2019.0,1124.9 L2019.5,1124.8 L2020.0,1124.7 L2020.5,1124.6 L2021.0,1124.4 L2021.5,1124.3 L2022.0,1124.2 L2022.5,1124.1 L2023.0,1123.9 L2023.5,1123.8 L2024.0,1123.7 L2024.5,1123.6 L2025.0,1123.4 L2025.5,1123.3 L2026.0,1123.2 L2026.5,1123.0 L2027.0,1122.9 L2027.5,1122.8 L2028.0,1122.7 L2028.5,1122.5 L2029.0,1122.4 L2029.5,1122.3 L2030.0,1122.1 L2030.5,1122.0 L2031.0,1121.9 L2031.5,1121.7 L2032.0,1121.6 L2032.5,1121.5 L2033.0,1121.3 L2033.5,1121.2 L2034.0,1121.1 L2034.5,1120.9 L2035.0,1120.8 L2035.5,1120.7 L2036.0,1120.5 L2036.5,1120.4 L2037.0,1120.3 L2037.5,1120.1 L2038.0,1120.0 L2038.5,1119.9 L2039.0,1119.7 L2039.5,1119.6 L2040.0,1119.4 L2040.5,1119.3 L2041.0,1119.2 L2041.5,1119.0 L2042.0,1118.9 L2042.5,1118.8 L2043.0,1118.6 L2043.5,1118.5 L2044.0,1118.3 L2044.5,1118.2 L2045.0,1118.1 L2045.5,1117.9 L2046.0,1117.8 L2046.5,1117.6 L2047.0,1117.5 L2047.5,1117.3 L2048.0,1117.2 L2048.5,1117.1 L2049.0,1116.9 L2049.5,1116.8 L2050.0,1116.6 L2050.5,1116.5 L2051.0,1116.3 L2051.5,1116.2 L2052.0,1116.1 L2052.5,1115.9 L2053.0,1115.8 L2053.5,1115.6 L2054.0,1115.5 L2054.5,1115.3 L2055.0,1115.2 L2055.5,1115.0 L2056.0,1114.9 L2056.5,1114.7 L2057.0,1114.6 L2057.5,1114.4 L2058.0,1114.3 L2058.5,1114.1 L2059.0,1114.0 L2059.5,1113.8 L2060.0,1113.7 L2060.5,1113.5 L2061.0,1113.4 L2061.5,1113.2 L2062.0,1113.1 L2062.5,1112.9 L2063.0,1112.8 L2063.5,1112.6 L2064.0,1112.5 L2064.5,1112.3 L2065.0,1112.2 L2065.5,1112.0 L2066.0,1111.9 L2066.5,1111.7 L2067.0,1111.6 L2067.5,1111.4 L2068.0,1111.3 L2068.5,1111.1 L2069.0,1111.0 L2069.5,1110.8 L2070.0,1110.7 L2070.5,1110.5 L2071.0,1110.4 L2071.5,1110.2 L2072.0,1110.0 L2072.5,1109.9 L2073.0,1109.7 L2073.5,1109.6 L2074.0,1109.4 L2074.5,1109.3 L2075.0,1109.1 L2075.5,1109.0 L2076.0,1108.8 L2076.5,1108.6 L2077.0,1108.5 L2077.5,1108.3 L2078.0,1108.2 L2078.5,1108.0 L2079.0,1107.9 L2079.5,1107.7 L2080.0,1107.5 L2080.5,1107.4 L2081.0,1107.2 L2081.5,1107.1 L2082.0,1106.9 L2082.5,1106.8 L2083.0,1106.6 L2083.5,1106.4 L2084.0,1106.3 L2084.5,1106.1 L2085.0,1106.0 L2085.5,1105.8 L2086.0,1105.6 L2086.5,1105.5 L2087.0,1105.3 L2087.5,1105.2 L2088.0,1105.0 L2088.5,1104.8 L2089.0,1104.7 L2089.5,1104.5 L2090.0,1104.4 L2090.5,1104.2 L2091.0,1104.0 L2091.5,1103.9 L2092.0,1103.7 L2092.5,1103.6 L2093.0,1103.4 L2093.5,1103.2 L2094.0,1103.1 L2094.5,1102.9 L2095.0,1102.7 L2095.5,1102.6 L2096.0,1102.4 L2096.5,1102.3 L2097.0,1102.1 L2097.5,1101.9 L2098.0,1101.8 L2098.5,1101.6 L2099.0,1101.5 L2099.5,1101.3 L2100.0,1101.1 L2100.5,1101.0 L2101.0,1100.8 L2101.5,1100.6 L2102.0,1100.5 L2102.5,1100.3 L2103.0,1100.2 L2103.5,1100.0 L2104.0,1099.8 L2104.5,1099.7 L2105.0,1099.5 L2105.5,1099.3 L2106.0,1099.2 L2106.5,1099.0 L2107.0,1098.9 L2107.5,1098.7 L2108.0,1098.5 L2108.5,1098.4 L2109.0,1098.2 L2109.5,1098.0 L2110.0,1097.9 L2110.5,1097.7 L2111.0,1097.5 L2111.5,1097.4 L2112.0,1097.2 L2112.5,1097.1 L2113.0,1096.9 L2113.5,1096.7 L2114.0,1096.6 L2114.5,1096.4 L2115.0,1096.2 L2115.5,1096.1 L2116.0,1095.9 L2116.5,1095.8 L2117.0,1095.6 L2117.5,1095.4 L2118.0,1095.3 L2118.5,1095.1 L2119.0,1094.9 L2119.5,1094.8 L2120.0,1094.6 L2120.5,1094.5 L2121.0,1094.3 L2121.5,1094.1 L2122.0,1094.0 L2122.5,1093.8 L2123.0,1093.7 L2123.5,1093.5 L2124.0,1093.3 L2124.5,1093.2 L2125.0,1093.0 L2125.5,1092.8 L2126.0,1092.7 L2126.5,1092.5 L2127.0,1092.4 L2127.5,1092.2 L2128.0,1092.0 L2128.5,1091.9 L2129.0,1091.7 L2129.5,1091.6 L2130.0,1091.4 L2130.5,1091.2 L2131.0,1091.1 L2131.5,1090.9 L2132.0,1090.8 L2132.5,1090.6 L2133.0,1090.4 L2133.5,1090.3 L2134.0,1090.1 L2134.5,1090.0 L2135.0,1089.8 L2135.5,1089.6 L2136.0,1089.5 L2136.5,1089.3 L2137.0,1089.2 L2137.5,1089.0 L2138.0,1088.9 L2138.5,1088.7 L2139.0,1088.5 L2139.5,1088.4 L2140.0,1088.2 L2140.5,1088.1 L2141.0,1087.9 L2141.5,1087.8 L2142.0,1087.6 L2142.5,1087.5 L2143.0,1087.3 L2143.5,1087.1 L2144.0,1087.0 L2144.5,1086.8 L2145.0,1086.7 L2145.5,1086.5 L2146.0,1086.4 L2146.5,1086.2 L2147.0,1086.1 L2147.5,1085.9 L2148.0,1085.8 L2148.5,1085.6 L2149.0,1085.4 L2149.5,1085.3 L2150.0,1085.1 L2150.5,1085.0 L2151.0,1084.8 L2151.5,1084.7 L2152.0,1084.5 L2152.5,1084.4 L2153.0,1084.2 L2153.5,1084.1 L2154.0,1083.9 L2154.5,1083.8 L2155.0,1083.6 L2155.5,1083.5 L2156.0,1083.3 L2156.5,1083.2 L2157.0,1083.0 L2157.5,1082.9 L2158.0,1082.7 L2158.5,1082.6 L2159.0,1082.4 L2159.5,1082.3 L2160.0,1082.1 L2160.5,1082.0 L2161.0,1081.8 L2161.5,1081.7 L2162.0,1081.5 L2162.5,1081.4 L2163.0,1081.2 L2163.5,1081.1 L2164.0,1080.9 L2164.5,1080.8 L2165.0,1080.6 L2165.5,1080.5 L2166.0,1080.3 L2166.5,1080.2 L2167.0,1080.0 L2167.5,1079.9 L2168.0,1079.7 L2168.5,1079.6 L2169.0,1079.4 L2169.5,1079.3 L2170.0,1079.1 L2170.5,1079.0 L2171.0,1078.8 L2171.5,1078.7 L2172.0,1078.5 L2172.5,1078.4 L2173.0,1078.2 L2173.5,1078.1 L2174.0,1077.9 L2174.5,1077.8 L2175.0,1077.6 L2175.5,1077.5 L2176.0,1077.3 L2176.5,1077.2 L2177.0,1077.0 L2177.5,1076.8 L2178.0,1076.7 L2178.5,1076.5 L2179.0,1076.4 L2179.5,1076.2 L2180.0,1076.1 L2180.5,1075.9 L2181.0,1075.8 L2181.5,1075.6 L2182.0,1075.5 L2182.5,1075.3 L2183.0,1075.2 L2183.5,1075.0 L2184.0,1074.9 L2184.5,1074.7 L2185.0,1074.6 L2185.5,1074.4 L2186.0,1074.3 L2186.5,1074.1 L2187.0,1074.0 L2187.5,1073.8 L2188.0,1073.7 L2188.5,1073.5 L2189.0,1073.3 L2189.5,1073.2 L2190.0,1073.0 L2190.5,1072.9 L2191.0,1072.7 L2191.5,1072.6 L2192.0,1072.4 L2192.5,1072.3 L2193.0,1072.1 L2193.5,1071.9 L2194.0,1071.8 L2194.5,1071.6 L2195.0,1071.5 L2195.5,1071.3 L2196.0,1071.2 L2196.5,1071.0 L2197.0,1070.8 L2197.5,1070.7 L2198.0,1070.5 L2198.5,1070.4 L2199.0,1070.2 L2199.5,1070.1 L2200.0,1069.9 L2200.5,1069.7 L2201.0,1069.6 L2201.5,1069.4 L2202.0,1069.3 L2202.5,1069.1 L2203.0,1068.9 L2203.5,1068.8 L2204.0,1068.6 L2204.5,1068.4 L2205.0,1068.3 L2205.5,1068.1 L2206.0,1068.0 L2206.5,1067.8 L2207.0,1067.6 L2207.5,1067.5 L2208.0,1067.3 L2208.5,1067.1 L2209.0,1067.0 L2209.5,1066.8 L2210.0,1066.6 L2210.5,1066.5 L2211.0,1066.3 L2211.5,1066.1 L2212.0,1066.0 L2212.5,1065.8 L2213.0,1065.6 L2213.5,1065.5 L2214.0,1065.3 L2214.5,1065.1 L2215.0,1064.9 L2215.5,1064.8 L2216.0,1064.6 L2216.5,1064.4 L2217.0,1064.3 L2217.5,1064.1 L2218.0,1063.9 L2218.5,1063.7 L2219.0,1063.6 L2219.5,1063.4 L2220.0,1063.2 L2220.5,1063.1 L2221.0,1062.9 L2221.5,1062.7 L2222.0,1062.5 L2222.5,1062.4 L2223.0,1062.2 L2223.5,1062.0 L2224.0,1061.8 L2224.5,1061.7 L2225.0,1061.5 L2225.5,1061.3 L2226.0,1061.1 L2226.5,1060.9 L2227.0,1060.8 L2227.5,1060.6 L2228.0,1060.4 L2228.5,1060.2 L2229.0,1060.1 L2229.5,1059.9 L2230.0,1059.7 L2230.5,1059.5 L2231.0,1059.3 L2231.5,1059.2 L2232.0,1059.0 L2232.5,1058.8 L2233.0,1058.6 L2233.5,1058.4 L2234.0,1058.2 L2234.5,1058.1 L2235.0,1057.9 L2235.5,1057.7 L2236.0,1057.5 L2236.5,1057.3 L2237.0,1057.1 L2237.5,1057.0 L2238.0,1056.8 L2238.5,1056.6 L2239.0,1056.4 L2239.5,1056.2 L2240.0,1056.0 L2240.5,1055.9 L2241.0,1055.7 L2241.5,1055.5 L2242.0,1055.3 L2242.5,1055.1 L2243.0,1054.9 L2243.5,1054.7 L2244.0,1054.5 L2244.5,1054.4 L2245.0,1054.2 L2245.5,1054.0 L2246.0,1053.8 L2246.5,1053.6 L2247.0,1053.4 L2247.5,1053.2 L2248.0,1053.0 L2248.5,1052.8 L2249.0,1052.6 L2249.5,1052.5 L2250.0,1052.3 L2250.5,1052.1 L2251.0,1051.9 L2251.5,1051.7 L2252.0,1051.5 L2252.5,1051.3 L2253.0,1051.1 L2253.5,1050.9 L2254.0,1050.7 L2254.5,1050.5 L2255.0,1050.3 L2255.5,1050.1 L2256.0,1049.9 L2256.5,1049.7 L2257.0,1049.6 L2257.5,1049.4 L2258.0,1049.2 L2258.5,1049.0 L2259.0,1048.8 L2259.5,1048.6 L2260.0,1048.4 L2260.5,1048.2 L2261.0,1048.0 L2261.5,1047.8 L2262.0,1047.6 L2262.5,1047.4 L2263.0,1047.2 L2263.5,1047.0 L2264.0,1046.8 L2264.5,1046.6 L2265.0,1046.4 L2265.5,1046.2 L2266.0,1046.0 L2266.5,1045.8 L2267.0,1045.6 L2267.5,1045.4 L2268.0,1045.2 L2268.5,1045.0 L2269.0,1044.8 L2269.5,1044.6 L2270.0,1044.4 L2270.5,1044.2 L2271.0,1044.0 L2271.5,1043.8 L2272.0,1043.6 L2272.5,1043.4 L2273.0,1043.2 L2273.5,1043.0 L2274.0,1042.8 L2274.5,1042.6 L2275.0,1042.3 L2275.5,1042.1 L2276.0,1041.9 L2276.5,1041.7 L2277.0,1041.5 L2277.5,1041.3 L2278.0,1041.1 L2278.5,1040.9 L2279.0,1040.7 L2279.5,1040.5 L2280.0,1040.3 L2280.5,1040.1 L2281.0,1039.9 L2281.5,1039.7 L2282.0,1039.5 L2282.5,1039.3 L2283.0,1039.0 L2283.5,1038.8 L2284.0,1038.6 L2284.5,1038.4 L2285.0,1038.2 L2285.5,1038.0 L2286.0,1037.8 L2286.5,1037.6 L2287.0,1037.4 L2287.5,1037.2 L2288.0,1037.0 L2288.5,1036.7 L2289.0,1036.5 L2289.5,1036.3 L2290.0,1036.1 L2290.5,1035.9 L2291.0,1035.7 L2291.5,1035.5 L2292.0,1035.3 L2292.5,1035.1 L2293.0,1034.8 L2293.5,1034.6 L2294.0,1034.4 L2294.5,1034.2 L2295.0,1034.0 L2295.5,1033.8 L2296.0,1033.6 L2296.5,1033.4 L2297.0,1033.1 L2297.5,1032.9 L2298.0,1032.7 L2298.5,1032.5 L2299.0,1032.3 L2299.5,1032.1 L2300.0,1031.9 L2300.5,1031.6 L2301.0,1031.4 L2301.5,1031.2 L2302.0,1031.0 L2302.5,1030.8 L2303.0,1030.6 L2303.5,1030.3 L2304.0,1030.1 L2304.5,1029.9 L2305.0,1029.7 L2305.5,1029.5 L2306.0,1029.3 L2306.5,1029.0 L2307.0,1028.8 L2307.5,1028.6 L2308.0,1028.4 L2308.5,1028.2 L2309.0,1028.0 L2309.5,1027.7 L2310.0,1027.5 L2310.5,1027.3 L2311.0,1027.1 L2311.5,1026.9 L2312.0,1026.7 L2312.5,1026.4 L2313.0,1026.2 L2313.5,1026.0 L2314.0,1025.8 L2314.5,1025.6 L2315.0,1025.3 L2315.5,1025.1 L2316.0,1024.9 L2316.5,1024.7 L2317.0,1024.5 L2317.5,1024.2 L2318.0,1024.0 L2318.5,1023.8 L2319.0,1023.6 L2319.5,1023.4 L2320.0,1023.1 L2320.5,1022.9 L2321.0,1022.7 L2321.5,1022.5 L2322.0,1022.3 L2322.5,1022.0 L2323.0,1021.8 L2323.5,1021.6 L2324.0,1021.4 L2324.5,1021.2 L2325.0,1020.9 L2325.5,1020.7 L2326.0,1020.5 L2326.5,1020.3 L2327.0,1020.0 L2327.5,1019.8 L2328.0,1019.6 L2328.5,1019.4 L2329.0,1019.2 L2329.5,1018.9 L2330.0,1018.7 L2330.5,1018.5 L2331.0,1018.3 L2331.5,1018.0 L2332.0,1017.8 L2332.5,1017.6 L2333.0,1017.4 L2333.5,1017.1 L2334.0,1016.9 L2334.5,1016.7 L2335.0,1016.5 L2335.5,1016.3 L2336.0,1016.0 L2336.5,1015.8 L2337.0,1015.6 L2337.5,1015.4 L2338.0,1015.1 L2338.5,1014.9 L2339.0,1014.7 L2339.5,1014.5 L2340.0,1014.2 L2340.5,1014.0 L2341.0,1013.8 L2341.5,1013.6 L2342.0,1013.4 L2342.5,1013.1 L2343.0,1012.9 L2343.5,1012.7 L2344.0,1012.5 L2344.5,1012.2 L2345.0,1012.0 L2345.5,1011.8 L2346.0,1011.6 L2346.5,1011.3 L2347.0,1011.1 L2347.5,1010.9 L2348.0,1010.7 L2348.5,1010.4 L2349.0,1010.2 L2349.5,1010.0 L2350.0,1009.8 L2350.5,1009.5 L2351.0,1009.3 L2351.5,1009.1 L2352.0,1008.9 L2352.5,1008.6 L2353.0,1008.4 L2353.5,1008.2 L2354.0,1008.0 L2354.5,1007.7 L2355.0,1007.5 L2355.5,1007.3 L2356.0,1007.1 L2356.5,1006.8 L2357.0,1006.6 L2357.5,1006.4 L2358.0,1006.2 L2358.5,1006.0 L2359.0,1005.7 L2359.5,1005.5 L2360.0,1005.3 L2360.5,1005.1 L2361.0,1004.8 L2361.5,1004.6 L2362.0,1004.4 L2362.5,1004.2 L2363.0,1003.9 L2363.5,1003.7 L2364.0,1003.5 L2364.5,1003.3 L2365.0,1003.0 L2365.5,1002.8 L2366.0,1002.6 L2366.5,1002.4 L2367.0,1002.1 L2367.5,1001.9 L2368.0,1001.7 L2368.5,1001.5 L2369.0,1001.3 L2369.5,1001.0 L2370.0,1000.8 L2370.5,1000.6 L2371.0,1000.4 L2371.5,1000.1 L2372.0,999.9 L2372.5,999.7 L2373.0,999.5 L2373.5,999.2 L2374.0,999.0 L2374.5,998.8 L2375.0,998.6 L2375.5,998.4 L2376.0,998.1 L2376.5,997.9 L2377.0,997.7 L2377.5,997.5 L2378.0,997.2 L2378.5,997.0 L2379.0,996.8 L2379.5,996.6 L2380.0,996.4 L2380.5,996.1 L2381.0,995.9 L2381.5,995.7 L2382.0,995.5 L2382.5,995.3 L2383.0,995.0 L2383.5,994.8 L2384.0,994.6 L2384.5,994.4 L2385.0,994.2 L2385.5,993.9 L2386.0,993.7 L2386.5,993.5 L2387.0,993.3 L2387.5,993.1 L2388.0,992.8 L2388.5,992.6 L2389.0,992.4 L2389.5,992.2 L2390.0,992.0 L2390.5,991.7 L2391.0,991.5 L2391.5,991.3 L2392.0,991.1 L2392.2,991.0" stroke="#3ed43e" stroke-width="2.8"/>
</g>
<text x="41.6" y="222.0" font-size="22" fill="#161616" textLength="55.1" lengthAdjust="spacingAndGlyphs" >270.0</text>
<text x="41.6" y="328.9" font-size="22" fill="#161616" textLength="55.1" lengthAdjust="spacingAndGlyphs" >243.0</text>
<text x="41.6" y="435.8" font-size="22" fill="#161616" textLength="55.1" lengthAdjust="spacingAndGlyphs" >216.0</text>
<text x="41.6" y="542.7" font-size="22" fill="#161616" textLength="55.1" lengthAdjust="spacingAndGlyphs" >189.0</text>
<text x="41.6" y="649.6" font-size="22" fill="#161616" textLength="55.1" lengthAdjust="spacingAndGlyphs" >162.0</text>
<text x="41.6" y="756.5" font-size="22" fill="#161616" textLength="55.1" lengthAdjust="spacingAndGlyphs" >135.0</text>
<text x="41.6" y="863.4" font-size="22" fill="#161616" textLength="55.1" lengthAdjust="spacingAndGlyphs" >108.0</text>
<text x="53.8" y="970.3" font-size="22" fill="#161616" textLength="42.8" lengthAdjust="spacingAndGlyphs" >81.0</text>
<text x="53.8" y="1077.2" font-size="22" fill="#161616" textLength="42.8" lengthAdjust="spacingAndGlyphs" >54.0</text>
<text x="53.8" y="1184.1" font-size="22" fill="#161616" textLength="42.8" lengthAdjust="spacingAndGlyphs" >27.0</text>
<text x="66.1" y="1291.0" font-size="22" fill="#161616" textLength="30.6" lengthAdjust="spacingAndGlyphs" >0.0</text>
<text x="2407.6" y="222.0" font-size="22" fill="#161616" textLength="43.2" lengthAdjust="spacingAndGlyphs" >90.0</text>
<text x="2408.0" y="328.9" font-size="22" fill="#161616" textLength="43.7" lengthAdjust="spacingAndGlyphs" >45.0</text>
<text x="2413.9" y="435.8" font-size="22" fill="#161616" textLength="32.2" lengthAdjust="spacingAndGlyphs" >0.0</text>
<text x="2400.7" y="542.7" font-size="22" fill="#161616" textLength="51.2" lengthAdjust="spacingAndGlyphs" >-45.0</text>
<text x="2400.6" y="649.6" font-size="22" fill="#161616" textLength="51.7" lengthAdjust="spacingAndGlyphs" >-90.0</text>
<text x="2400.4" y="767.5" font-size="22" fill="#161616" textLength="66.3" lengthAdjust="spacingAndGlyphs" >Avg:10</text>
<text x="2401.5" y="1201.0" font-size="22" fill="#161616" >L</text>
<text x="2401.5" y="1223.0" font-size="22" fill="#161616" >I</text>
<text x="2401.5" y="1246.6" font-size="22" fill="#161616" >M</text>
<text x="2401.5" y="1269.2" font-size="22" fill="#161616" >P</text>
<text x="106.6" y="203.6" font-size="26" fill="#111" textLength="108.5" lengthAdjust="spacingAndGlyphs" >|Z| (ohm)</text>
<text x="1182.0" y="204.1" font-size="26" fill="#111" textLength="130.2" lengthAdjust="spacingAndGlyphs" >Impedance</text>
<text x="2277.8" y="204.7" font-size="26" fill="#111" textLength="112.9" lengthAdjust="spacingAndGlyphs" >Phase (°)</text>
<text x="90.7" y="1313.5" font-size="22" fill="#161616" textLength="26.2" lengthAdjust="spacingAndGlyphs" >20</text>
<text x="471.1" y="1313.5" font-size="22" fill="#161616" textLength="25.5" lengthAdjust="spacingAndGlyphs" >50</text>
<text x="752.3" y="1313.5" font-size="22" fill="#161616" textLength="36.5" lengthAdjust="spacingAndGlyphs" >100</text>
<text x="1039.9" y="1313.5" font-size="22" fill="#161616" textLength="35.9" lengthAdjust="spacingAndGlyphs" >200</text>
<text x="1420.1" y="1313.5" font-size="22" fill="#161616" textLength="35.7" lengthAdjust="spacingAndGlyphs" >500</text>
<text x="1712.2" y="1313.5" font-size="22" fill="#161616" textLength="24.8" lengthAdjust="spacingAndGlyphs" >1k</text>
<text x="1999.9" y="1313.5" font-size="22" fill="#161616" textLength="24.1" lengthAdjust="spacingAndGlyphs" >2k</text>
<text x="2381.6" y="1313.5" font-size="22" fill="#161616" textLength="22.0" lengthAdjust="spacingAndGlyphs" >5k</text>
<text x="2336.4" y="1347.7" font-size="22" fill="#161616" textLength="56.7" lengthAdjust="spacingAndGlyphs" >F(Hz)</text>
<text x="103.9" y="1348.0" font-size="22" fill="#161616" textLength="386.1" lengthAdjust="spacingAndGlyphs" >Cursor: 20.00 Hz, 16.63 Ohm, 61.1 deg</text>
<text x="2513.8" y="171.3" font-size="15" fill="#222" textLength="27.8" lengthAdjust="spacingAndGlyphs" >Max</text>
<rect x="2517.1" y="179.5" width="17.59999999999991" height="20.30000000000001" fill="#ececec" stroke="#b0b0b0" stroke-width="1" />
<rect x="2517.1" y="199.8" width="17.59999999999991" height="20.299999999999983" fill="#ececec" stroke="#b0b0b0" stroke-width="1" />
<path d="M2522.3999999999996,191.4 L2529.3999999999996,191.4 L2525.8999999999996,187.4 Z" fill="#111"/>
<path d="M2522.3999999999996,208.2 L2529.3999999999996,208.2 L2525.8999999999996,212.2 Z" fill="#111"/>
<rect x="2512.5" y="245.5" width="31.0" height="25.0" fill="#e1e1e1" stroke="#adadad" stroke-width="1" />
<text x="2517.7" y="264.0" font-size="15" fill="#111" textLength="17.4" lengthAdjust="spacingAndGlyphs" >Fit</text>
<text x="2513.8" y="299.0" font-size="15" fill="#222" textLength="23.1" lengthAdjust="spacingAndGlyphs" >Min</text>
<rect x="2517.1" y="307.5" width="17.59999999999991" height="20.399999999999977" fill="#ececec" stroke="#b0b0b0" stroke-width="1" />
<rect x="2517.1" y="327.9" width="17.59999999999991" height="20.400000000000034" fill="#ececec" stroke="#b0b0b0" stroke-width="1" />
<path d="M2522.3999999999996,319.45 L2529.3999999999996,319.45 L2525.8999999999996,315.45 Z" fill="#111"/>
<path d="M2522.3999999999996,336.35 L2529.3999999999996,336.35 L2525.8999999999996,340.35 Z" fill="#111"/>
<rect x="2512.5" y="372.5" width="31.0" height="24.0" fill="#e1e1e1" stroke="#adadad" stroke-width="1" />
<text x="2517.4" y="390.0" font-size="15" fill="#111" textLength="19.7" lengthAdjust="spacingAndGlyphs" >Set</text>
<text x="2504.5" y="432.6" font-size="15" fill="#222" textLength="44.1" lengthAdjust="spacingAndGlyphs" >FrHigh</text>
<rect x="2509.9" y="443.3" width="18.15000000000009" height="18.19999999999999" fill="#ececec" stroke="#b0b0b0" stroke-width="1" />
<rect x="2528.05" y="443.3" width="18.149999999999636" height="18.19999999999999" fill="#ececec" stroke="#b0b0b0" stroke-width="1" />
<path d="M2520.7250000000004,448.9 L2520.7250000000004,455.9 L2516.7250000000004,452.4 Z" fill="#111"/>
<path d="M2535.375,448.9 L2535.375,455.9 L2539.375,452.4 Z" fill="#111"/>
<text x="2508.5" y="491.6" font-size="15" fill="#222" textLength="39.0" lengthAdjust="spacingAndGlyphs" >FrLow</text>
<rect x="2509.9" y="499.2" width="18.15000000000009" height="18.30000000000001" fill="#ececec" stroke="#b0b0b0" stroke-width="1" />
<rect x="2528.05" y="499.2" width="18.149999999999636" height="18.30000000000001" fill="#ececec" stroke="#b0b0b0" stroke-width="1" />
<path d="M2520.7250000000004,504.85 L2520.7250000000004,511.85 L2516.7250000000004,508.35 Z" fill="#111"/>
<path d="M2535.375,504.85 L2535.375,511.85 L2539.375,508.35 Z" fill="#111"/>
<line x1="0" y1="1359.5" x2="2494" y2="1359.5" stroke="#fafafa" stroke-width="1" />
<line x1="0" y1="1361" x2="2494" y2="1361" stroke="#d4d4d4" stroke-width="1.4" />
<line x1="2495" y1="1359.5" x2="2560" y2="1359.5" stroke="#a8a8a8" stroke-width="1" />
<text x="2.6" y="1380.8" font-size="16.5" fill="#222" textLength="42.4" lengthAdjust="spacingAndGlyphs" >Ready</text>
<line x1="2417.5" y1="1362" x2="2417.5" y2="1385" stroke="#c8c8c8" stroke-width="1" />
<line x1="2495.5" y1="1362" x2="2495.5" y2="1385" stroke="#c8c8c8" stroke-width="1" />
<text x="2349.7" y="1380.0" font-size="15" fill="#222" textLength="48.8" lengthAdjust="spacingAndGlyphs" >L:-15.7</text>
<text x="2426.7" y="1380.0" font-size="15" fill="#222" textLength="42.0" lengthAdjust="spacingAndGlyphs" >R:-5.7</text>
<text x="2504.8" y="1380.0" font-size="15" fill="#222" textLength="36.1" lengthAdjust="spacingAndGlyphs" >dBFS</text>
<rect x="934" y="399" width="692" height="578" fill="#f0f0f0" />
<rect x="934" y="399" width="692" height="40.5" fill="#4c535b" />
<line x1="934" y1="399.5" x2="1626" y2="399.5" stroke="#5a625e" stroke-width="1" />
<text x="945.1" y="425.3" font-size="17" fill="#ffffff" textLength="333.9" lengthAdjust="spacingAndGlyphs" >Loudspeaker Parameters - Added Mass Method</text>
<path d="M1599,412 L1611,424 M1611,412 L1599,424" stroke="#fff" stroke-width="1.4"/>
<rect x="947.5" y="447.5" width="329.0" height="514.0" fill="#ffffff" stroke="#8a8e94" stroke-width="1" />
<rect x="1253" y="448" width="23" height="513" fill="#f0f0f0" />
<path d="M1259,464 l5,-5 l5,5" fill="none" stroke="#a0a0a0" stroke-width="1.1"/>
<path d="M1259,945 l5,5 l5,-5" fill="none" stroke="#a0a0a0" stroke-width="1.1"/>
<text x="954.5" y="465.3" font-size="15" fill="#262626" style="white-space:pre" textLength="162.5" lengthAdjust="spacingAndGlyphs">Loudspeaker parameters:</text>
<text x="954.5" y="500.0" font-size="15" fill="#262626" style="white-space:pre" textLength="94.1" lengthAdjust="spacingAndGlyphs">Fs  = 43.40 Hz</text>
<text x="954.5" y="517.4" font-size="15" fill="#262626" style="white-space:pre" textLength="123.5" lengthAdjust="spacingAndGlyphs">Re  = 6.50 ohm[dc]</text>
<text x="954.5" y="534.7" font-size="15" fill="#262626" style="white-space:pre" textLength="111.3" lengthAdjust="spacingAndGlyphs">Le  = 1393.01 uH</text>
<text x="954.5" y="552.0" font-size="15" fill="#262626" style="white-space:pre" textLength="111.3" lengthAdjust="spacingAndGlyphs">L2  = 1892.16 uH</text>
<text x="954.5" y="569.4" font-size="15" fill="#262626" style="white-space:pre" textLength="107.0" lengthAdjust="spacingAndGlyphs">R2  = 46.89 ohm</text>
<text x="954.5" y="586.8" font-size="15" fill="#262626" style="white-space:pre" textLength="67.5" lengthAdjust="spacingAndGlyphs">Qt  = 0.35</text>
<text x="954.5" y="604.1" font-size="15" fill="#262626" style="white-space:pre" textLength="72.5" lengthAdjust="spacingAndGlyphs">Qes = 0.36</text>
<text x="954.5" y="621.5" font-size="15" fill="#262626" style="white-space:pre" textLength="82.9" lengthAdjust="spacingAndGlyphs">Qms = 13.50</text>
<text x="954.5" y="638.8" font-size="15" fill="#262626" style="white-space:pre" textLength="133.9" lengthAdjust="spacingAndGlyphs">Mms = 105.08 grams</text>
<text x="954.5" y="656.2" font-size="15" fill="#262626" style="white-space:pre" textLength="136.8" lengthAdjust="spacingAndGlyphs">Rms = 2.172223 kg/s</text>
<text x="954.5" y="673.5" font-size="15" fill="#262626" style="white-space:pre" textLength="146.0" lengthAdjust="spacingAndGlyphs">Cms = 0.127954 mm/N</text>
<text x="954.5" y="690.9" font-size="15" fill="#262626" style="white-space:pre" textLength="112.7" lengthAdjust="spacingAndGlyphs">Vas = 46.87 liters</text>
<text x="954.5" y="708.2" font-size="15" fill="#262626" style="white-space:pre" textLength="115.2" lengthAdjust="spacingAndGlyphs">Sd= 510.71 cm^2</text>
<text x="954.5" y="725.5" font-size="15" fill="#262626" style="white-space:pre" textLength="124.2" lengthAdjust="spacingAndGlyphs">Bl  = 22.611858 Tm</text>
<text x="954.5" y="742.9" font-size="15" fill="#262626" style="white-space:pre" textLength="92.3" lengthAdjust="spacingAndGlyphs">ETA = 1.01 %</text>
<text x="954.5" y="760.2" font-size="15" fill="#262626" style="white-space:pre" textLength="161.5" lengthAdjust="spacingAndGlyphs">Lp(2.83V/1m) = 93.06 dB</text>
<text x="954.5" y="795.0" font-size="15" fill="#262626" style="white-space:pre" textLength="220.0" lengthAdjust="spacingAndGlyphs">Added Mass - Constant Bl Method:</text>
<text x="954.5" y="812.3" font-size="15" fill="#262626" style="white-space:pre" textLength="103.1" lengthAdjust="spacingAndGlyphs">Driver unbaffled</text>
<text x="954.5" y="829.7" font-size="15" fill="#262626" style="white-space:pre" textLength="175.5" lengthAdjust="spacingAndGlyphs">Added mass = 85.10 grams</text>
<text x="954.5" y="847.0" font-size="15" fill="#262626" style="white-space:pre" textLength="200.1" lengthAdjust="spacingAndGlyphs">Membrane Diameter= 25.50 cm</text>
<rect x="1294.5" y="457.5" width="313" height="214" fill="none" stroke="#dcdcdc" stroke-width="1"/>
<rect x="1301.5" y="452" width="74.5" height="10" fill="#f0f0f0" />
<text x="1303.3" y="463.0" font-size="15" fill="#262626" textLength="69.8" lengthAdjust="spacingAndGlyphs" >User Input</text>
<rect x="1294.5" y="693.5" width="313" height="182" fill="none" stroke="#dcdcdc" stroke-width="1"/>
<rect x="1301.5" y="688" width="175.0" height="10" fill="#f0f0f0" />
<text x="1303.4" y="700.0" font-size="15" fill="#262626" textLength="171.0" lengthAdjust="spacingAndGlyphs" >Nonlinear LSE Optimization</text>
<text x="1308.9" y="496.0" font-size="15" fill="#262626" textLength="168.4" lengthAdjust="spacingAndGlyphs" >Voice coil resistance (ohm)</text>
<text x="1307.3" y="537.0" font-size="15" fill="#262626" textLength="160.6" lengthAdjust="spacingAndGlyphs" >Membrane diameter (cm)</text>
<text x="1309.0" y="575.0" font-size="15" fill="#262626" textLength="99.9" lengthAdjust="spacingAndGlyphs" >Added mass (g)</text>
<rect x="1531.5" y="479.5" width="65.0" height="24.5" fill="#ffffff" stroke="#7a7a7a" stroke-width="1" />
<text x="1537.1" y="497.8" font-size="15" fill="#111" textLength="23.6" lengthAdjust="spacingAndGlyphs" >6.5</text>
<rect x="1533.5" y="516.5" width="63.0" height="29.0" fill="#ffffff" stroke="#7a7a7a" stroke-width="1" />
<text x="1539.2" y="537.0" font-size="15" fill="#111" textLength="32.0" lengthAdjust="spacingAndGlyphs" >25.5</text>
<rect x="1533.5" y="558.0" width="63.0" height="28.5" fill="#ffffff" stroke="#7a7a7a" stroke-width="1" />
<text x="1539.3" y="578.2" font-size="15" fill="#111" textLength="32.0" lengthAdjust="spacingAndGlyphs" >85.1</text>
<text x="1344.3" y="618.0" font-size="15" fill="#262626" textLength="202.4" lengthAdjust="spacingAndGlyphs" >Driver mounted in infinite baffle</text>
<rect x="1552.5" y="604.5" width="16.0" height="15.5" fill="#ffffff" stroke="#333" stroke-width="1" />
<text x="1336.7" y="653.0" font-size="15" fill="#262626" textLength="210.2" lengthAdjust="spacingAndGlyphs" >Use constant compliance method</text>
<rect x="1552.5" y="639.2" width="16.0" height="15.799999999999955" fill="#ffffff" stroke="#333" stroke-width="1" />
<text x="1339.3" y="736.0" font-size="15" fill="#262626" textLength="210.6" lengthAdjust="spacingAndGlyphs" >Estimate TSP by LSE minimization</text>
<rect x="1555.2" y="721.8" width="15.899999999999864" height="15.700000000000045" fill="#ffffff" stroke="#333" stroke-width="1" />
<path d="M1557.7,729.65 L1561.2,734 L1568.6,724.8" fill="none" stroke="#222" stroke-width="1.3"/>
<text x="1341.8" y="771.0" font-size="15" fill="#262626" textLength="207.8" lengthAdjust="spacingAndGlyphs" >Estimate voice coil resistance Re</text>
<rect x="1555.2" y="756.5" width="15.899999999999864" height="15.399999999999977" fill="#ffffff" stroke="#333" stroke-width="1" />
<text x="1359.2" y="805.5" font-size="15" fill="#262626" textLength="189.7" lengthAdjust="spacingAndGlyphs" >Estimate lossy inductor model</text>
<rect x="1554.1" y="791.1" width="15.800000000000182" height="15.899999999999977" fill="#ffffff" stroke="#333" stroke-width="1" />
<path d="M1556.6,799.05 L1560.1,803.5 L1567.4,794.1" fill="none" stroke="#222" stroke-width="1.3"/>
<rect x="1387.5" y="832.5" width="185.0" height="27.0" fill="url(#cg)" stroke="#adadad" stroke-width="1" />
<text x="1389.7" y="852.0" font-size="15" fill="#262626" textLength="79.1" lengthAdjust="spacingAndGlyphs" >Le +L2||R2</text>
<path d="M1555,843 l5,5 l5,-5" fill="none" stroke="#333" stroke-width="1.2"/>
<rect x="1297" y="895.5" width="131" height="64.0" fill="#e1e1e1" stroke="#0a78d0" stroke-width="2" />
<text x="1329.3" y="925.0" font-size="15" fill="#262626" textLength="59.4" lengthAdjust="spacingAndGlyphs" >Calculate</text>
<text x="1324.1" y="942.5" font-size="15" fill="#262626" textLength="74.5" lengthAdjust="spacingAndGlyphs" >parameters</text>
<rect x="1443.5" y="895.1" width="74.40000000000009" height="26.399999999999977" fill="#e1e1e1" stroke="#adadad" stroke-width="1" />
<text x="1456.2" y="913.8" font-size="15" fill="#262626" textLength="44.9" lengthAdjust="spacingAndGlyphs" >Export</text>
<rect x="1532.8" y="895.1" width="74.60000000000014" height="26.399999999999977" fill="#e1e1e1" stroke="#adadad" stroke-width="1" />
<text x="1546.8" y="913.8" font-size="15" fill="#262626" textLength="44.2" lengthAdjust="spacingAndGlyphs" >Cancel</text>
<rect x="1443.5" y="933.5" width="74.40000000000009" height="26.700000000000045" fill="#e1e1e1" stroke="#adadad" stroke-width="1" />
<text x="1462.8" y="952.4" font-size="15" fill="#262626" textLength="33.3" lengthAdjust="spacingAndGlyphs" >Copy</text>
<rect x="1532.8" y="933.5" width="74.60000000000014" height="26.700000000000045" fill="#e1e1e1" stroke="#adadad" stroke-width="1" />
<text x="1558.9" y="952.4" font-size="15" fill="#262626" textLength="19.8" lengthAdjust="spacingAndGlyphs" >OK</text>
</svg>
</body></html>
